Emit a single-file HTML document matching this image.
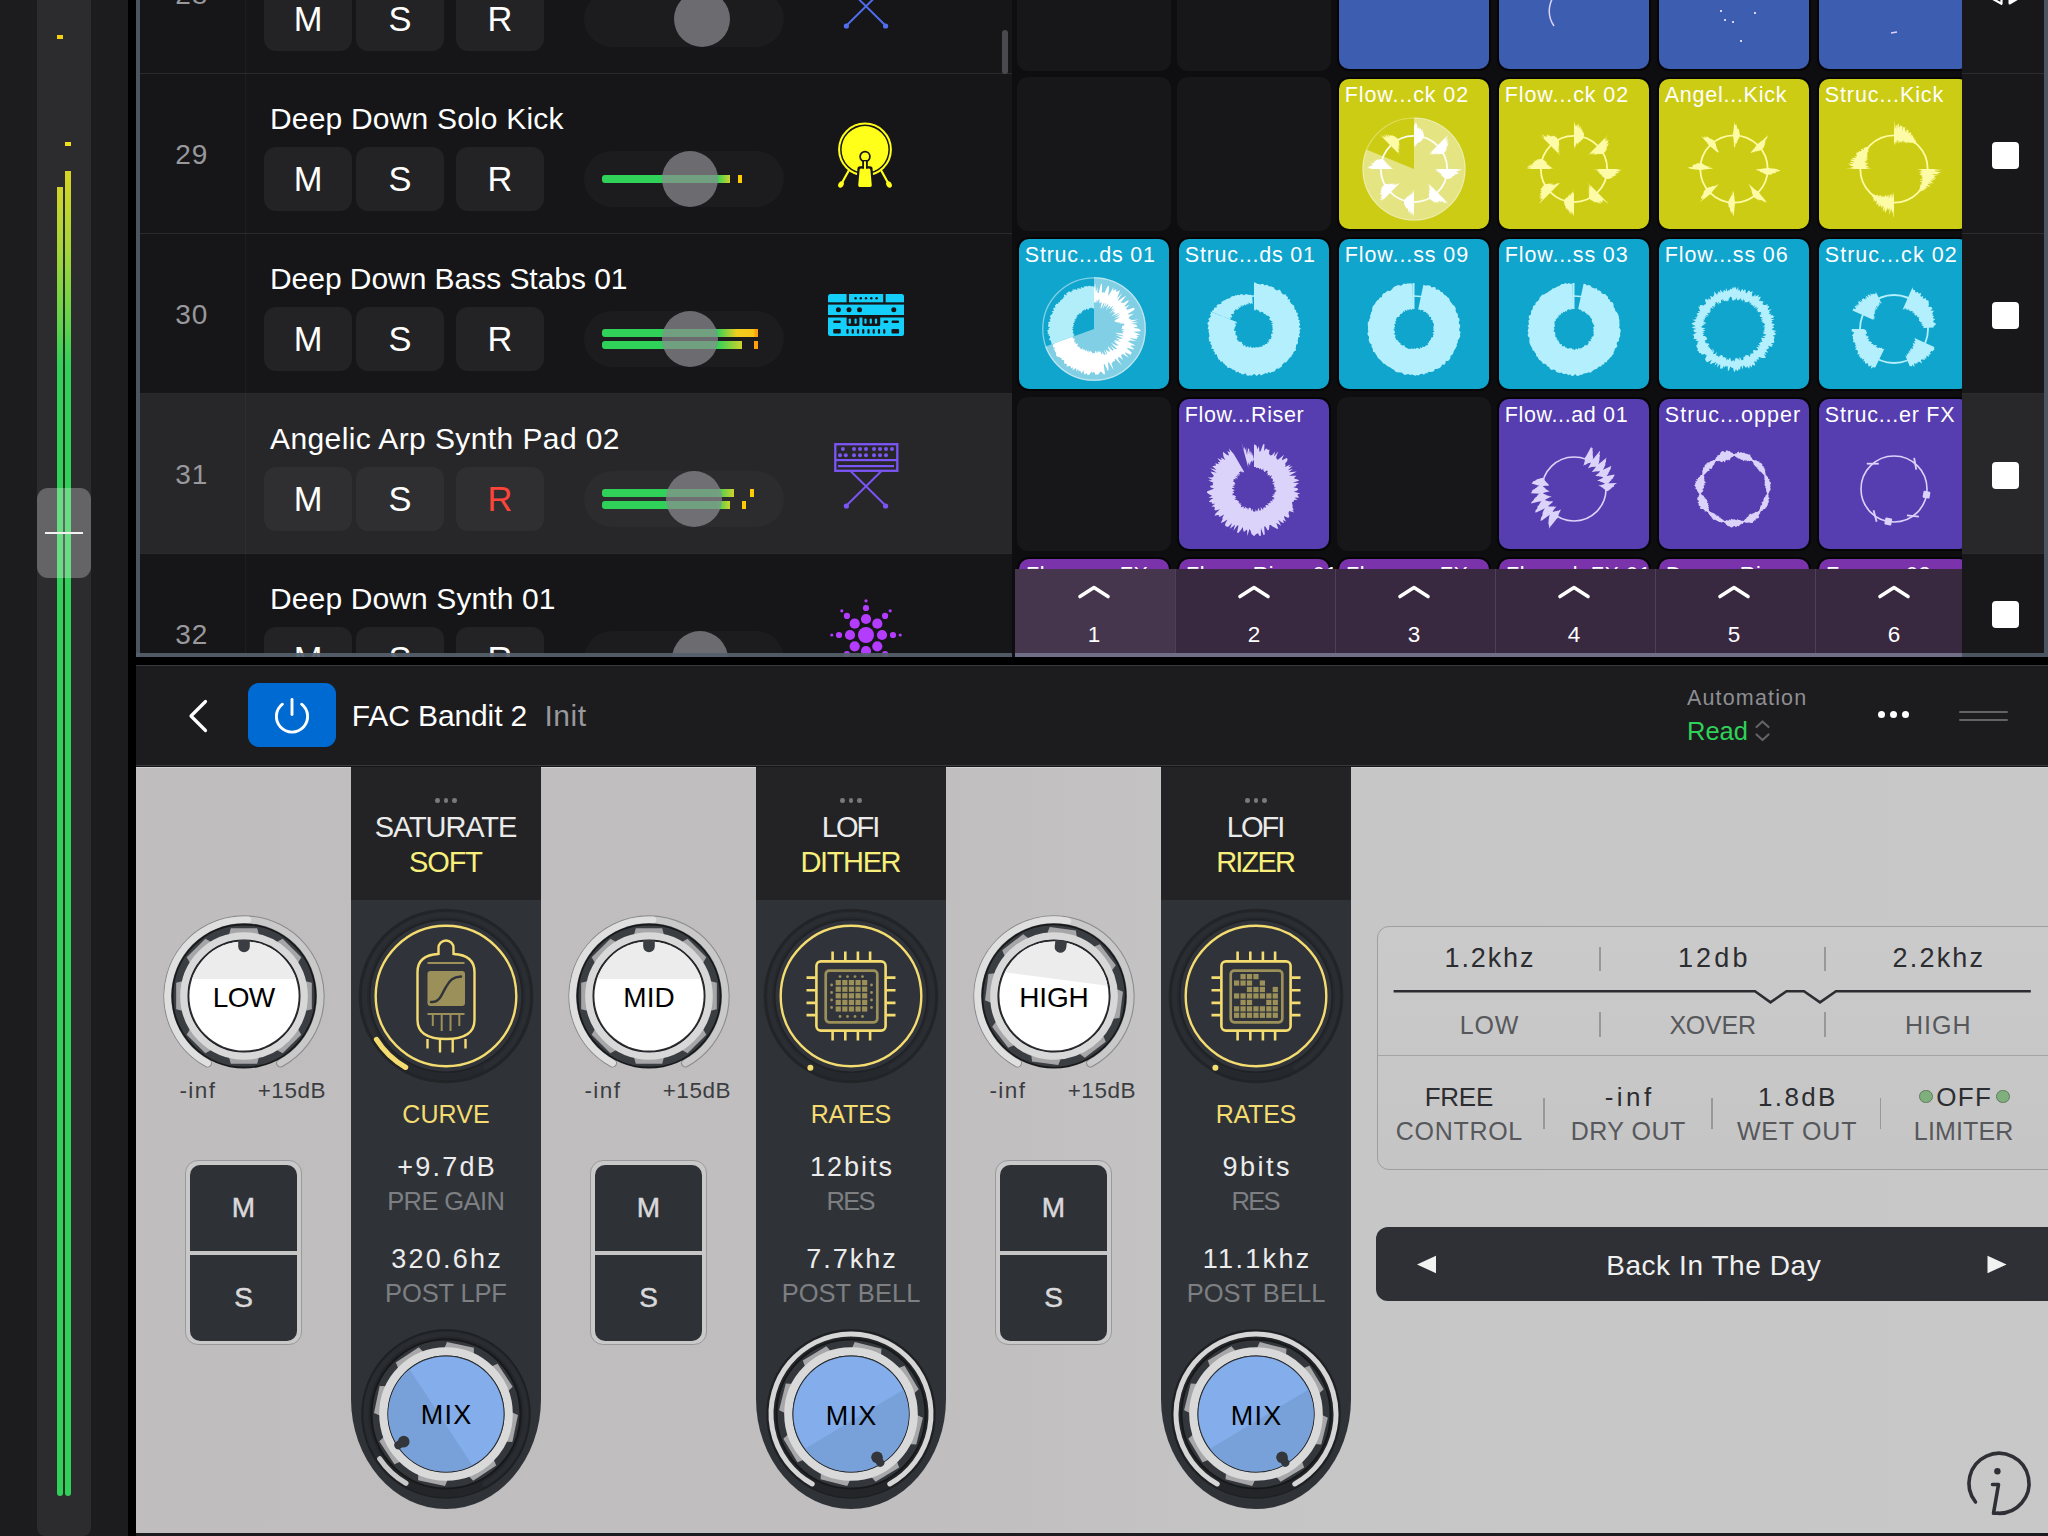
<!DOCTYPE html>
<html><head><meta charset="utf-8"><title>Logic</title><style>
*{box-sizing:border-box;margin:0;padding:0}
html,body{width:2048px;height:1536px;overflow:hidden;background:#1c1c1e;font-family:"Liberation Sans",sans-serif;position:relative}
.a{position:absolute}
.t{position:absolute;white-space:pre}
.clip{position:absolute;left:0;top:0;width:2048px;height:1536px}
svg{position:absolute;overflow:visible}
.tx{left:0;top:0;font-family:"Liberation Sans",sans-serif}
</style></head><body>
<div class="a" style="left:0px;top:0px;width:136px;height:1536px;background:#1c1c1e;"></div>
<div class="a" style="left:37px;top:-20px;width:54px;height:1556px;background:#2c2c2f;border-radius:8px;"></div>
<div class="a" style="left:128px;top:0px;width:8px;height:1536px;background:#000;"></div>
<div class="a" style="left:57px;top:35px;width:6px;height:4px;background:#f5d10f;"></div>
<div class="a" style="left:65px;top:142px;width:6px;height:4px;background:#ede11c;"></div>
<div class="a" style="left:57px;top:187px;width:6px;height:1309px;background:linear-gradient(#d0d42a 0px,#a4d537 63px,#62d449 133px,#30d158 178px);border-radius:0 0 3px 3px;"></div>
<div class="a" style="left:65px;top:171px;width:6px;height:1325px;background:linear-gradient(#d8d424 0px,#a4d537 79px,#62d449 149px,#30d158 194px);border-radius:0 0 3px 3px;"></div>
<div class="a" style="left:37px;top:488px;width:54px;height:90px;background:rgba(255,255,255,0.265);border-radius:11px;"></div>
<div class="a" style="left:45px;top:532px;width:38px;height:2px;background:#f2f2f2;"></div>
<div class="clip" style="clip-path:inset(0 1036px 879px 136px)">
<div class="a" style="left:136px;top:0px;width:880px;height:660px;background:#161618;"></div>
<div class="a" style="left:140px;top:-87px;width:872px;height:1px;background:#2a2a2d;"></div>
<svg class="tx" width="1" height="1"><text x="191.30" y="3.80" font-size="28" fill="#98989d" text-anchor="middle" textLength="32.00" lengthAdjust="spacing">28</text></svg>
<svg class="tx" width="1" height="1"><text x="270.00" y="-31.00" font-size="30" fill="#ffffff" text-anchor="start" textLength="202.50" lengthAdjust="spacing">Deep Down Kick</text></svg>
<div class="a" style="left:264px;top:-13px;width:88px;height:64px;background:#232326;border-radius:12px;"></div>
<svg class="tx" width="1" height="1"><text x="308.00" y="31.00" font-size="34.5" fill="#ffffff" text-anchor="middle">M</text></svg>
<div class="a" style="left:356px;top:-13px;width:88px;height:64px;background:#232326;border-radius:12px;"></div>
<svg class="tx" width="1" height="1"><text x="400.00" y="31.00" font-size="34.5" fill="#ffffff" text-anchor="middle">S</text></svg>
<div class="a" style="left:456px;top:-13px;width:88px;height:64px;background:#232326;border-radius:12px;"></div>
<svg class="tx" width="1" height="1"><text x="500.00" y="31.00" font-size="34.5" fill="#ffffff" text-anchor="middle">R</text></svg>
<div class="a" style="left:584px;top:-9px;width:200px;height:56px;background:#1c1c1f;border-radius:28px;"></div>
<div class="a" style="left:674px;top:-9px;width:56px;height:56px;border-radius:50%;background:rgba(140,139,145,0.71)"></div>
<svg style="left:834px;top:-37px" width="64" height="66" viewBox="-32 0 64 66"><rect x="-30.7" y="1.2" width="62" height="26.6" fill="none" stroke="#4f6ff0" stroke-width="2.3"/><rect x="-30.7" y="16" width="62" height="2.2" fill="#4f6ff0"/><rect x="-28" y="22" width="56" height="2.2" fill="#4f6ff0"/><circle cx="-23.1" cy="6" r="2" fill="#4f6ff0"/><circle cx="-12" cy="6" r="2" fill="#4f6ff0"/><circle cx="-6" cy="6" r="2" fill="#4f6ff0"/><circle cx="0" cy="6" r="2" fill="#4f6ff0"/><circle cx="8" cy="6" r="2" fill="#4f6ff0"/><circle cx="14" cy="6" r="2" fill="#4f6ff0"/><circle cx="20" cy="6" r="2" fill="#4f6ff0"/><circle cx="26" cy="6" r="2" fill="#4f6ff0"/><circle cx="-26" cy="12.2" r="2" fill="#4f6ff0"/><circle cx="-20.2" cy="12.2" r="2" fill="#4f6ff0"/><circle cx="-12" cy="12.2" r="2" fill="#4f6ff0"/><circle cx="-6" cy="12.2" r="2" fill="#4f6ff0"/><circle cx="0" cy="12.2" r="2" fill="#4f6ff0"/><circle cx="8" cy="12.2" r="2" fill="#4f6ff0"/><circle cx="14" cy="12.2" r="2" fill="#4f6ff0"/><circle cx="20" cy="12.2" r="2" fill="#4f6ff0"/><path d="M-15.5,28 L19.5,62.5 M15.5,28 L-19.5,62.5" stroke="#4f6ff0" stroke-width="1.9"/><circle cx="-19.6" cy="63" r="2.6" fill="#4f6ff0"/><circle cx="19.6" cy="63" r="2.6" fill="#4f6ff0"/></svg>
<div class="a" style="left:140px;top:73px;width:872px;height:1px;background:#2a2a2d;"></div>
<svg class="tx" width="1" height="1"><text x="191.30" y="163.80" font-size="28" fill="#98989d" text-anchor="middle" textLength="32.00" lengthAdjust="spacing">29</text></svg>
<svg class="tx" width="1" height="1"><text x="270.00" y="129.00" font-size="30" fill="#ffffff" text-anchor="start" textLength="293.50" lengthAdjust="spacing">Deep Down Solo Kick</text></svg>
<div class="a" style="left:264px;top:147px;width:88px;height:64px;background:#232326;border-radius:12px;"></div>
<svg class="tx" width="1" height="1"><text x="308.00" y="191.00" font-size="34.5" fill="#ffffff" text-anchor="middle">M</text></svg>
<div class="a" style="left:356px;top:147px;width:88px;height:64px;background:#232326;border-radius:12px;"></div>
<svg class="tx" width="1" height="1"><text x="400.00" y="191.00" font-size="34.5" fill="#ffffff" text-anchor="middle">S</text></svg>
<div class="a" style="left:456px;top:147px;width:88px;height:64px;background:#232326;border-radius:12px;"></div>
<svg class="tx" width="1" height="1"><text x="500.00" y="191.00" font-size="34.5" fill="#ffffff" text-anchor="middle">R</text></svg>
<div class="a" style="left:584px;top:151px;width:200px;height:56px;background:#1c1c1f;border-radius:28px;"></div>
<div class="a" style="left:602px;top:175px;width:128px;height:8px;background:linear-gradient(90deg,#30d158 0px,#30d158 115px,#cfd22a 128px);border-radius:3px 0 0 3px;"></div>
<div class="a" style="left:738px;top:175px;width:4px;height:8px;background:#ffcc00;"></div>
<div class="a" style="left:662px;top:151px;width:56px;height:56px;border-radius:50%;background:rgba(140,139,145,0.71)"></div>
<svg style="left:0;top:0" width="2048" height="1536" viewBox="0 0 2048 1536">
<g transform="translate(865,149.5)">
<path d="M-16.5,21.5 L-24.5,36" stroke="#ffff1a" stroke-width="2.2" stroke-linecap="round"/>
<path d="M16.5,21.5 L24.5,36" stroke="#ffff1a" stroke-width="2.2" stroke-linecap="round"/>
<ellipse cx="-24" cy="35" rx="2.6" ry="3.4" transform="rotate(30 -24 35)" fill="#ffff1a"/>
<ellipse cx="24" cy="35" rx="2.6" ry="3.4" transform="rotate(-30 24 35)" fill="#ffff1a"/>
<circle r="25.9" fill="none" stroke="#ffff1a" stroke-width="2"/>
<circle r="23.4" fill="#ffff1a"/>
<path d="M-7.6,19.5 Q-7.6,16.8 -5,16.8 L5,16.8 Q7.6,16.8 7.6,19.5 L9,37.5 Q9,39.5 7,39.5 L-7,39.5 Q-9,39.5 -9,37.5Z" fill="#161618"/>
<path d="M-5.4,20.5 Q-5.4,19 -4,19 L4,19 Q5.4,19 5.4,20.5 L6.8,35.8 Q6.8,37.4 5.2,37.4 L-5.2,37.4 Q-6.8,37.4 -6.8,35.8Z" fill="#ffff1a"/>
<rect x="-2.8" y="10.5" width="5.6" height="8.6" fill="#161618"/>
<circle cy="7.1" r="4.9" fill="none" stroke="#161618" stroke-width="1.8"/>
<rect x="-1" y="11.8" width="2" height="8" fill="#ffff1a"/>
</g></svg>
<div class="a" style="left:140px;top:233px;width:872px;height:1px;background:#2a2a2d;"></div>
<svg class="tx" width="1" height="1"><text x="191.30" y="323.80" font-size="28" fill="#98989d" text-anchor="middle" textLength="32.00" lengthAdjust="spacing">30</text></svg>
<svg class="tx" width="1" height="1"><text x="270.00" y="289.00" font-size="30" fill="#ffffff" text-anchor="start" textLength="357.50" lengthAdjust="spacing">Deep Down Bass Stabs 01</text></svg>
<div class="a" style="left:264px;top:307px;width:88px;height:64px;background:#232326;border-radius:12px;"></div>
<svg class="tx" width="1" height="1"><text x="308.00" y="351.00" font-size="34.5" fill="#ffffff" text-anchor="middle">M</text></svg>
<div class="a" style="left:356px;top:307px;width:88px;height:64px;background:#232326;border-radius:12px;"></div>
<svg class="tx" width="1" height="1"><text x="400.00" y="351.00" font-size="34.5" fill="#ffffff" text-anchor="middle">S</text></svg>
<div class="a" style="left:456px;top:307px;width:88px;height:64px;background:#232326;border-radius:12px;"></div>
<svg class="tx" width="1" height="1"><text x="500.00" y="351.00" font-size="34.5" fill="#ffffff" text-anchor="middle">R</text></svg>
<div class="a" style="left:584px;top:311px;width:200px;height:56px;background:#1c1c1f;border-radius:28px;"></div>
<div class="a" style="left:602px;top:329px;width:156px;height:8px;background:linear-gradient(90deg,#30d158 0px,#30d158 115px,#f0d01c 135px,#f7c51a 152px,#ff9f0a 153px,#ff9f0a 156px);border-radius:3px 0 0 3px;"></div>
<div class="a" style="left:602px;top:341px;width:140px;height:8px;background:linear-gradient(90deg,#30d158 0px,#30d158 115px,#cfd22a 140px);border-radius:3px 0 0 3px;"></div>
<div class="a" style="left:754px;top:341px;width:4px;height:8px;background:#ff9f0a;"></div>
<div class="a" style="left:662px;top:311px;width:56px;height:56px;border-radius:50%;background:rgba(140,139,145,0.71)"></div>
<svg style="left:828px;top:294px" width="76" height="42" viewBox="0 0 76 42"><rect x="0" y="0" width="76" height="42" rx="2.5" fill="#13cff9"/><rect x="-1" y="8.3" width="78" height="2.3" fill="#161618"/><rect x="-1" y="21" width="78" height="2.5" fill="#161618"/><rect x="18.6" y="-1" width="2.4" height="10" fill="#161618"/><rect x="55.2" y="-1" width="2.4" height="10" fill="#161618"/><circle cx="27.6" cy="4.2" r="1.2" fill="#161618"/><circle cx="32.8" cy="4.2" r="1.2" fill="#161618"/><circle cx="38" cy="4.2" r="1.2" fill="#161618"/><circle cx="43.3" cy="4.2" r="1.2" fill="#161618"/><circle cx="48.6" cy="4.2" r="1.2" fill="#161618"/><circle cx="10.4" cy="15.8" r="2.5" fill="#161618"/><circle cx="21" cy="15.8" r="2.5" fill="#161618"/><circle cx="31.5" cy="15.8" r="2.5" fill="#161618"/><circle cx="65.8" cy="15.8" r="2.5" fill="#161618"/><rect x="5.2" y="26.6" width="7.6" height="2.4" rx="1.2" fill="#161618"/><rect x="55.5" y="26.6" width="4.8" height="2.4" rx="1.2" fill="#161618"/><rect x="63.5" y="26.6" width="7.6" height="2.4" rx="1.2" fill="#161618"/><path d="M18.6,23 L18.6,30.5 Q18.6,32 20,32 L30,32 Q31.4,32 31.4,30.5 L31.4,23Z" fill="#161618"/><path d="M34.4,23 L34.4,30.5 Q34.4,32 36,32 L50.6,32 Q52.2,32 52.2,30.5 L52.2,23Z" fill="#161618"/><rect x="20.7" y="24.5" width="2.2" height="5.3" rx="1.1" fill="#13cff9"/><rect x="26.5" y="24.5" width="2.2" height="5.3" rx="1.1" fill="#13cff9"/><rect x="36.4" y="24.5" width="2.2" height="5.3" rx="1.1" fill="#13cff9"/><rect x="41.699999999999996" y="24.5" width="2.2" height="5.3" rx="1.1" fill="#13cff9"/><rect x="46.9" y="24.5" width="2.2" height="5.3" rx="1.1" fill="#13cff9"/><rect x="5.2" y="35" width="7.6" height="4.6" rx="1" fill="#161618"/><rect x="63.5" y="35" width="7.6" height="4.6" rx="1" fill="#161618"/><rect x="18.4" y="35" width="2.2" height="4.8" rx="1.1" fill="#161618"/><rect x="23.65" y="35" width="2.2" height="4.8" rx="1.1" fill="#161618"/><rect x="28.9" y="35" width="2.2" height="4.8" rx="1.1" fill="#161618"/><rect x="34.15" y="35" width="2.2" height="4.8" rx="1.1" fill="#161618"/><rect x="39.4" y="35" width="2.2" height="4.8" rx="1.1" fill="#161618"/><rect x="44.65" y="35" width="2.2" height="4.8" rx="1.1" fill="#161618"/><rect x="49.9" y="35" width="2.2" height="4.8" rx="1.1" fill="#161618"/><rect x="55.15" y="35" width="2.2" height="4.8" rx="1.1" fill="#161618"/></svg>
<div class="a" style="left:140px;top:394px;width:872px;height:159px;background:#27272a;"></div>
<div class="a" style="left:140px;top:393px;width:872px;height:1px;background:#2a2a2d;"></div>
<svg class="tx" width="1" height="1"><text x="191.30" y="483.80" font-size="28" fill="#98989d" text-anchor="middle" textLength="32.00" lengthAdjust="spacing">31</text></svg>
<svg class="tx" width="1" height="1"><text x="270.00" y="449.00" font-size="30" fill="#ffffff" text-anchor="start" textLength="349.50" lengthAdjust="spacing">Angelic Arp Synth Pad 02</text></svg>
<div class="a" style="left:264px;top:467px;width:88px;height:64px;background:#2f2f32;border-radius:12px;"></div>
<svg class="tx" width="1" height="1"><text x="308.00" y="511.00" font-size="34.5" fill="#ffffff" text-anchor="middle">M</text></svg>
<div class="a" style="left:356px;top:467px;width:88px;height:64px;background:#2f2f32;border-radius:12px;"></div>
<svg class="tx" width="1" height="1"><text x="400.00" y="511.00" font-size="34.5" fill="#ffffff" text-anchor="middle">S</text></svg>
<div class="a" style="left:456px;top:467px;width:88px;height:64px;background:#2f2f32;border-radius:12px;"></div>
<svg class="tx" width="1" height="1"><text x="500.00" y="511.00" font-size="34.5" fill="#ff453a" text-anchor="middle">R</text></svg>
<div class="a" style="left:584px;top:471px;width:200px;height:56px;background:#2c2c2f;border-radius:28px;"></div>
<div class="a" style="left:602px;top:489px;width:132px;height:8px;background:linear-gradient(90deg,#30d158 0px,#30d158 115px,#cfd22a 132px);border-radius:3px 0 0 3px;"></div>
<div class="a" style="left:602px;top:501px;width:128px;height:8px;background:linear-gradient(90deg,#30d158 0px,#30d158 115px,#cfd22a 128px);border-radius:3px 0 0 3px;"></div>
<div class="a" style="left:750px;top:489px;width:4px;height:8px;background:#ffcc00;"></div>
<div class="a" style="left:742px;top:501px;width:4px;height:8px;background:#ffcc00;"></div>
<div class="a" style="left:666px;top:471px;width:56px;height:56px;border-radius:50%;background:rgba(140,139,145,0.71)"></div>
<svg style="left:834px;top:443px" width="64" height="66" viewBox="-32 0 64 66"><rect x="-30.7" y="1.2" width="62" height="26.6" fill="none" stroke="#7b55f5" stroke-width="2.3"/><rect x="-30.7" y="16" width="62" height="2.2" fill="#7b55f5"/><rect x="-28" y="22" width="56" height="2.2" fill="#7b55f5"/><circle cx="-23.1" cy="6" r="2" fill="#7b55f5"/><circle cx="-12" cy="6" r="2" fill="#7b55f5"/><circle cx="-6" cy="6" r="2" fill="#7b55f5"/><circle cx="0" cy="6" r="2" fill="#7b55f5"/><circle cx="8" cy="6" r="2" fill="#7b55f5"/><circle cx="14" cy="6" r="2" fill="#7b55f5"/><circle cx="20" cy="6" r="2" fill="#7b55f5"/><circle cx="26" cy="6" r="2" fill="#7b55f5"/><circle cx="-26" cy="12.2" r="2" fill="#7b55f5"/><circle cx="-20.2" cy="12.2" r="2" fill="#7b55f5"/><circle cx="-12" cy="12.2" r="2" fill="#7b55f5"/><circle cx="-6" cy="12.2" r="2" fill="#7b55f5"/><circle cx="0" cy="12.2" r="2" fill="#7b55f5"/><circle cx="8" cy="12.2" r="2" fill="#7b55f5"/><circle cx="14" cy="12.2" r="2" fill="#7b55f5"/><circle cx="20" cy="12.2" r="2" fill="#7b55f5"/><path d="M-15.5,28 L19.5,62.5 M15.5,28 L-19.5,62.5" stroke="#7b55f5" stroke-width="1.9"/><circle cx="-19.6" cy="63" r="2.6" fill="#7b55f5"/><circle cx="19.6" cy="63" r="2.6" fill="#7b55f5"/></svg>
<div class="a" style="left:140px;top:553px;width:872px;height:1px;background:#2a2a2d;"></div>
<svg class="tx" width="1" height="1"><text x="191.30" y="643.80" font-size="28" fill="#98989d" text-anchor="middle" textLength="32.00" lengthAdjust="spacing">32</text></svg>
<svg class="tx" width="1" height="1"><text x="270.00" y="609.00" font-size="30" fill="#ffffff" text-anchor="start" textLength="285.50" lengthAdjust="spacing">Deep Down Synth 01</text></svg>
<div class="a" style="left:264px;top:627px;width:88px;height:64px;background:#232326;border-radius:12px;"></div>
<svg class="tx" width="1" height="1"><text x="308.00" y="671.00" font-size="34.5" fill="#ffffff" text-anchor="middle">M</text></svg>
<div class="a" style="left:356px;top:627px;width:88px;height:64px;background:#232326;border-radius:12px;"></div>
<svg class="tx" width="1" height="1"><text x="400.00" y="671.00" font-size="34.5" fill="#ffffff" text-anchor="middle">S</text></svg>
<div class="a" style="left:456px;top:627px;width:88px;height:64px;background:#232326;border-radius:12px;"></div>
<svg class="tx" width="1" height="1"><text x="500.00" y="671.00" font-size="34.5" fill="#ffffff" text-anchor="middle">R</text></svg>
<div class="a" style="left:584px;top:631px;width:200px;height:56px;background:#1c1c1f;border-radius:28px;"></div>
<div class="a" style="left:672px;top:631px;width:56px;height:56px;border-radius:50%;background:rgba(140,139,145,0.71)"></div>
<svg style="left:826px;top:595px" width="80" height="80" viewBox="-40 -40 80 80"><circle r="8" fill="#b43cff"/><circle cx="16.00" cy="0.00" r="5.1" fill="#b43cff"/><circle cx="27.00" cy="0.00" r="3.1" fill="#b43cff"/><circle cx="34.20" cy="0.00" r="1.6" fill="#b43cff"/><circle cx="11.31" cy="11.31" r="5.1" fill="#b43cff"/><circle cx="19.09" cy="19.09" r="3.1" fill="#b43cff"/><circle cx="24.18" cy="24.18" r="1.6" fill="#b43cff"/><circle cx="0.00" cy="16.00" r="5.1" fill="#b43cff"/><circle cx="0.00" cy="27.00" r="3.1" fill="#b43cff"/><circle cx="0.00" cy="34.20" r="1.6" fill="#b43cff"/><circle cx="-11.31" cy="11.31" r="5.1" fill="#b43cff"/><circle cx="-19.09" cy="19.09" r="3.1" fill="#b43cff"/><circle cx="-24.18" cy="24.18" r="1.6" fill="#b43cff"/><circle cx="-16.00" cy="0.00" r="5.1" fill="#b43cff"/><circle cx="-27.00" cy="0.00" r="3.1" fill="#b43cff"/><circle cx="-34.20" cy="0.00" r="1.6" fill="#b43cff"/><circle cx="-11.31" cy="-11.31" r="5.1" fill="#b43cff"/><circle cx="-19.09" cy="-19.09" r="3.1" fill="#b43cff"/><circle cx="-24.18" cy="-24.18" r="1.6" fill="#b43cff"/><circle cx="-0.00" cy="-16.00" r="5.1" fill="#b43cff"/><circle cx="-0.00" cy="-27.00" r="3.1" fill="#b43cff"/><circle cx="-0.00" cy="-34.20" r="1.6" fill="#b43cff"/><circle cx="11.31" cy="-11.31" r="5.1" fill="#b43cff"/><circle cx="19.09" cy="-19.09" r="3.1" fill="#b43cff"/><circle cx="24.18" cy="-24.18" r="1.6" fill="#b43cff"/></svg>
<div class="a" style="left:245px;top:0px;width:1px;height:660px;background:rgba(255,255,255,0.035);"></div>
<div class="a" style="left:1002px;top:30px;width:6px;height:44px;background:#4a4a4e;border-radius:3px;"></div>
<div class="a" style="left:136px;top:0px;width:4px;height:657px;background:#4b5560;"></div>
<div class="a" style="left:136px;top:653px;width:879px;height:4px;background:rgba(84,96,108,0.93);"></div>
</div>
<div class="clip" style="clip-path:inset(0 86px 879px 1012px)">
<div class="a" style="left:1012px;top:0px;width:950px;height:660px;background:#0e0e10;"></div>
<div class="a" style="left:1017px;top:-83px;width:154px;height:154px;background:#171719;border-radius:11px;"></div>
<div class="a" style="left:1177px;top:-83px;width:154px;height:154px;background:#171719;border-radius:11px;"></div>
<div class="a" style="left:1337px;top:-83px;width:154px;height:154px;background:#050506;border-radius:12px;"></div>
<div class="a" style="left:1339px;top:-81px;width:150px;height:150px;background:#3d5db1;border-radius:10px;"></div>
<div class="a" style="left:1497px;top:-83px;width:154px;height:154px;background:#050506;border-radius:12px;"></div>
<div class="a" style="left:1499px;top:-81px;width:150px;height:150px;background:#3d5db1;border-radius:10px;"></div>
<div class="a" style="left:1657px;top:-83px;width:154px;height:154px;background:#050506;border-radius:12px;"></div>
<div class="a" style="left:1659px;top:-81px;width:150px;height:150px;background:#3d5db1;border-radius:10px;"></div>
<div class="a" style="left:1817px;top:-83px;width:154px;height:154px;background:#050506;border-radius:12px;"></div>
<div class="a" style="left:1819px;top:-81px;width:150px;height:150px;background:#3d5db1;border-radius:10px;"></div>
<div class="a" style="left:1017px;top:77px;width:154px;height:154px;background:#171719;border-radius:11px;"></div>
<div class="a" style="left:1177px;top:77px;width:154px;height:154px;background:#171719;border-radius:11px;"></div>
<div class="a" style="left:1337px;top:77px;width:154px;height:154px;background:#050506;border-radius:12px;"></div>
<div class="a" style="left:1339px;top:79px;width:150px;height:150px;background:#cdcc14;border-radius:10px;"></div>
<svg class="tx" width="1" height="1"><text x="1344.80" y="102.00" font-size="21.5" fill="#ffffff" text-anchor="start" textLength="123.30" lengthAdjust="spacing">Flow...ck 02</text></svg>
<div class="a" style="left:1497px;top:77px;width:154px;height:154px;background:#050506;border-radius:12px;"></div>
<div class="a" style="left:1499px;top:79px;width:150px;height:150px;background:#cdcc14;border-radius:10px;"></div>
<svg class="tx" width="1" height="1"><text x="1504.80" y="102.00" font-size="21.5" fill="#ffffff" text-anchor="start" textLength="123.30" lengthAdjust="spacing">Flow...ck 02</text></svg>
<div class="a" style="left:1657px;top:77px;width:154px;height:154px;background:#050506;border-radius:12px;"></div>
<div class="a" style="left:1659px;top:79px;width:150px;height:150px;background:#cdcc14;border-radius:10px;"></div>
<svg class="tx" width="1" height="1"><text x="1664.80" y="102.00" font-size="21.5" fill="#ffffff" text-anchor="start" textLength="121.60" lengthAdjust="spacing">Angel...Kick</text></svg>
<div class="a" style="left:1817px;top:77px;width:154px;height:154px;background:#050506;border-radius:12px;"></div>
<div class="a" style="left:1819px;top:79px;width:150px;height:150px;background:#cdcc14;border-radius:10px;"></div>
<svg class="tx" width="1" height="1"><text x="1824.80" y="102.00" font-size="21.5" fill="#ffffff" text-anchor="start" textLength="118.40" lengthAdjust="spacing">Struc...Kick</text></svg>
<div class="a" style="left:1017px;top:237px;width:154px;height:154px;background:#050506;border-radius:12px;"></div>
<div class="a" style="left:1019px;top:239px;width:150px;height:150px;background:#10a5cd;border-radius:10px;"></div>
<svg class="tx" width="1" height="1"><text x="1024.80" y="262.00" font-size="21.5" fill="#ffffff" text-anchor="start" textLength="130.10" lengthAdjust="spacing">Struc...ds 01</text></svg>
<div class="a" style="left:1177px;top:237px;width:154px;height:154px;background:#050506;border-radius:12px;"></div>
<div class="a" style="left:1179px;top:239px;width:150px;height:150px;background:#10a5cd;border-radius:10px;"></div>
<svg class="tx" width="1" height="1"><text x="1184.80" y="262.00" font-size="21.5" fill="#ffffff" text-anchor="start" textLength="130.10" lengthAdjust="spacing">Struc...ds 01</text></svg>
<div class="a" style="left:1337px;top:237px;width:154px;height:154px;background:#050506;border-radius:12px;"></div>
<div class="a" style="left:1339px;top:239px;width:150px;height:150px;background:#10a5cd;border-radius:10px;"></div>
<svg class="tx" width="1" height="1"><text x="1344.80" y="262.00" font-size="21.5" fill="#ffffff" text-anchor="start" textLength="123.30" lengthAdjust="spacing">Flow...ss 09</text></svg>
<div class="a" style="left:1497px;top:237px;width:154px;height:154px;background:#050506;border-radius:12px;"></div>
<div class="a" style="left:1499px;top:239px;width:150px;height:150px;background:#10a5cd;border-radius:10px;"></div>
<svg class="tx" width="1" height="1"><text x="1504.80" y="262.00" font-size="21.5" fill="#ffffff" text-anchor="start" textLength="122.80" lengthAdjust="spacing">Flow...ss 03</text></svg>
<div class="a" style="left:1657px;top:237px;width:154px;height:154px;background:#050506;border-radius:12px;"></div>
<div class="a" style="left:1659px;top:239px;width:150px;height:150px;background:#10a5cd;border-radius:10px;"></div>
<svg class="tx" width="1" height="1"><text x="1664.80" y="262.00" font-size="21.5" fill="#ffffff" text-anchor="start" textLength="122.80" lengthAdjust="spacing">Flow...ss 06</text></svg>
<div class="a" style="left:1817px;top:237px;width:154px;height:154px;background:#050506;border-radius:12px;"></div>
<div class="a" style="left:1819px;top:239px;width:150px;height:150px;background:#10a5cd;border-radius:10px;"></div>
<svg class="tx" width="1" height="1"><text x="1824.80" y="262.00" font-size="21.5" fill="#ffffff" text-anchor="start" textLength="131.80" lengthAdjust="spacing">Struc...ck 02</text></svg>
<div class="a" style="left:1017px;top:397px;width:154px;height:154px;background:#171719;border-radius:11px;"></div>
<div class="a" style="left:1177px;top:397px;width:154px;height:154px;background:#050506;border-radius:12px;"></div>
<div class="a" style="left:1179px;top:399px;width:150px;height:150px;background:#563db0;border-radius:10px;"></div>
<svg class="tx" width="1" height="1"><text x="1184.80" y="422.00" font-size="21.5" fill="#ffffff" text-anchor="start" textLength="118.80" lengthAdjust="spacing">Flow...Riser</text></svg>
<div class="a" style="left:1337px;top:397px;width:154px;height:154px;background:#171719;border-radius:11px;"></div>
<div class="a" style="left:1497px;top:397px;width:154px;height:154px;background:#050506;border-radius:12px;"></div>
<div class="a" style="left:1499px;top:399px;width:150px;height:150px;background:#563db0;border-radius:10px;"></div>
<svg class="tx" width="1" height="1"><text x="1504.80" y="422.00" font-size="21.5" fill="#ffffff" text-anchor="start" textLength="122.80" lengthAdjust="spacing">Flow...ad 01</text></svg>
<div class="a" style="left:1657px;top:397px;width:154px;height:154px;background:#050506;border-radius:12px;"></div>
<div class="a" style="left:1659px;top:399px;width:150px;height:150px;background:#563db0;border-radius:10px;"></div>
<svg class="tx" width="1" height="1"><text x="1664.80" y="422.00" font-size="21.5" fill="#ffffff" text-anchor="start" textLength="135.30" lengthAdjust="spacing">Struc...opper</text></svg>
<div class="a" style="left:1817px;top:397px;width:154px;height:154px;background:#050506;border-radius:12px;"></div>
<div class="a" style="left:1819px;top:399px;width:150px;height:150px;background:#563db0;border-radius:10px;"></div>
<svg class="tx" width="1" height="1"><text x="1824.80" y="422.00" font-size="21.5" fill="#ffffff" text-anchor="start" textLength="129.80" lengthAdjust="spacing">Struc...er FX</text></svg>
<div class="a" style="left:1017px;top:557px;width:154px;height:154px;background:#050506;border-radius:12px;"></div>
<div class="a" style="left:1019px;top:559px;width:150px;height:150px;background:#7a33ab;border-radius:10px;"></div>
<svg class="tx" width="1" height="1"><text x="1026.00" y="582.00" font-size="21.5" fill="#ffffff" text-anchor="start" style="letter-spacing:0.65px;">Flow...er FX</text></svg>
<div class="a" style="left:1177px;top:557px;width:154px;height:154px;background:#050506;border-radius:12px;"></div>
<div class="a" style="left:1179px;top:559px;width:150px;height:150px;background:#7a33ab;border-radius:10px;"></div>
<svg class="tx" width="1" height="1"><text x="1186.00" y="582.00" font-size="21.5" fill="#ffffff" text-anchor="start" style="letter-spacing:0.65px;">Flow...Riser 01</text></svg>
<div class="a" style="left:1337px;top:557px;width:154px;height:154px;background:#050506;border-radius:12px;"></div>
<div class="a" style="left:1339px;top:559px;width:150px;height:150px;background:#7a33ab;border-radius:10px;"></div>
<svg class="tx" width="1" height="1"><text x="1346.00" y="582.00" font-size="21.5" fill="#ffffff" text-anchor="start" style="letter-spacing:0.65px;">Flow...er FX</text></svg>
<div class="a" style="left:1497px;top:557px;width:154px;height:154px;background:#050506;border-radius:12px;"></div>
<div class="a" style="left:1499px;top:559px;width:150px;height:150px;background:#7a33ab;border-radius:10px;"></div>
<svg class="tx" width="1" height="1"><text x="1506.00" y="582.00" font-size="21.5" fill="#ffffff" text-anchor="start" style="letter-spacing:0.65px;">Flow...k FX 01</text></svg>
<div class="a" style="left:1657px;top:557px;width:154px;height:154px;background:#050506;border-radius:12px;"></div>
<div class="a" style="left:1659px;top:559px;width:150px;height:150px;background:#7a33ab;border-radius:10px;"></div>
<svg class="tx" width="1" height="1"><text x="1666.00" y="582.00" font-size="21.5" fill="#ffffff" text-anchor="start" style="letter-spacing:0.65px;">Deep...Riser</text></svg>
<div class="a" style="left:1817px;top:557px;width:154px;height:154px;background:#050506;border-radius:12px;"></div>
<div class="a" style="left:1819px;top:559px;width:150px;height:150px;background:#7a33ab;border-radius:10px;"></div>
<svg class="tx" width="1" height="1"><text x="1826.00" y="582.00" font-size="21.5" fill="#ffffff" text-anchor="start" style="letter-spacing:0.65px;">Fr...oar 02</text></svg>
<svg style="left:0;top:0" width="2048" height="1536" viewBox="0 0 2048 1536"><path d="M1554,26 A26,26 0 0 1 1560,-10" fill="none" stroke="#dcd3fb" stroke-width="1.5"/><rect x="1720" y="10" width="2" height="2" fill="#dcd3fb"/><rect x="1724" y="19" width="2" height="2" fill="#dcd3fb"/><rect x="1732" y="21" width="2" height="2" fill="#dcd3fb"/><rect x="1754" y="12" width="2" height="2" fill="#dcd3fb"/><rect x="1740" y="40" width="2" height="2" fill="#dcd3fb"/><path d="M1891,33 L1897,32" stroke="#dcd3fb" stroke-width="1.5"/><path d="M1414,169 L1414.00,117.40 A51.6,51.6 0 1 1 1366.26,149.42Z" fill="#ffffff" fill-opacity="0.47"/><circle cx="1414" cy="169" r="51" fill="none" stroke="#ffffff" stroke-width="1.2" stroke-opacity="0.35"/><circle cx="1414" cy="169" r="33.2" fill="none" stroke="#ffffff" stroke-width="1.8" stroke-opacity="0.95"/><path d="M1414.00,120.30 L1414.35,125.90 L1414.70,125.53 L1415.11,122.87 L1415.47,123.22 L1415.82,123.52 L1416.23,122.62 L1416.53,124.00 L1416.85,124.67 L1417.18,125.07 L1417.32,127.70 L1417.61,128.24 L1417.93,128.29 L1418.46,126.39 L1418.56,128.56 L1419.03,127.37 L1419.22,128.52 L1419.49,129.01 L1419.72,129.66 L1420.37,127.50 L1420.59,128.26 L1420.79,129.05 L1421.14,128.94 L1421.11,130.88 L1421.40,131.04 L1422.19,128.69 L1422.33,129.64 L1422.67,129.58 L1422.67,131.03 L1422.66,132.45 L1423.04,132.13 L1423.46,131.72 L1423.28,133.63 L1423.53,133.83 L1423.74,134.15 L1423.83,134.89 L1423.90,135.65 L1423.71,137.25 L1423.71,137.25 L1422.98,138.75 L1422.44,139.72 L1422.32,139.26 L1421.80,140.21 L1421.40,140.81 L1420.93,141.70 L1420.58,142.17 L1420.80,140.29 L1420.41,140.94 L1419.73,142.94 L1419.54,142.81 L1419.36,142.61 L1419.26,141.98 L1419.06,141.87 L1418.68,142.72 L1418.57,142.10 L1418.29,142.50 L1417.91,143.51 L1417.79,142.92 L1417.69,142.13 L1417.34,143.13 L1416.78,146.00 L1416.99,142.44 L1416.42,145.85 L1416.46,143.52 L1416.16,144.60 L1415.80,146.57 L1415.83,143.64 L1415.46,146.20 L1415.21,147.47 L1415.15,145.18 L1414.97,144.86 L1414.67,148.10 L1414.58,145.06 L1414.40,144.21 L1414.17,147.67 L1414.00,149.80Z" fill="#ffffff"/><path d="M1448.44,134.56 L1445.45,138.05 L1448.58,135.52 L1445.23,139.24 L1445.41,139.54 L1448.12,137.51 L1447.47,138.60 L1446.36,140.08 L1446.07,140.80 L1447.22,140.26 L1448.11,139.96 L1448.95,139.73 L1446.12,142.53 L1447.64,141.74 L1446.54,143.06 L1448.62,141.85 L1447.68,143.01 L1447.11,143.88 L1447.76,143.81 L1448.70,143.54 L1448.32,144.24 L1446.21,146.15 L1448.56,144.90 L1448.48,145.36 L1446.01,147.43 L1445.98,147.82 L1447.29,147.34 L1446.67,148.11 L1446.88,148.34 L1446.42,149.00 L1446.30,149.42 L1446.27,149.80 L1446.16,150.21 L1446.61,150.30 L1445.35,151.35 L1444.99,151.88 L1444.44,152.50 L1443.31,153.41 L1443.31,153.41 L1441.64,154.02 L1441.14,154.01 L1440.47,154.10 L1440.00,154.09 L1438.75,154.54 L1439.40,153.88 L1437.87,154.54 L1438.91,153.63 L1437.51,154.23 L1436.78,154.44 L1436.73,154.21 L1436.78,153.92 L1437.00,153.50 L1436.86,153.33 L1434.99,154.36 L1434.49,154.46 L1434.47,154.23 L1433.79,154.48 L1433.31,154.59 L1434.08,153.77 L1433.97,153.60 L1434.31,153.07 L1431.87,154.75 L1431.35,154.94 L1431.54,154.55 L1431.85,154.05 L1432.08,153.61 L1430.52,154.70 L1430.76,154.26 L1432.02,152.90 L1430.87,153.68 L1432.59,151.84 L1431.71,152.39 L1428.58,155.11 L1431.77,151.79 L1431.38,151.90 L1427.58,155.42Z" fill="#ffffff"/><path d="M1462.70,169.00 L1460.96,169.38 L1456.38,169.68 L1459.13,170.09 L1460.93,170.51 L1457.16,170.73 L1457.87,171.11 L1455.94,171.36 L1458.96,171.89 L1457.25,172.13 L1456.27,172.40 L1457.89,172.88 L1458.68,173.31 L1458.42,173.65 L1457.70,173.93 L1454.56,173.90 L1455.42,174.34 L1456.56,174.84 L1454.17,174.84 L1454.10,175.16 L1453.84,175.45 L1455.47,176.05 L1453.71,176.08 L1452.33,176.15 L1451.80,176.37 L1452.48,176.82 L1452.72,177.19 L1451.22,177.19 L1452.36,177.76 L1451.21,177.81 L1451.08,178.10 L1450.07,178.16 L1449.23,178.24 L1450.42,178.87 L1448.61,178.68 L1448.15,178.85 L1447.55,178.96 L1445.75,178.71 L1445.75,178.71 L1444.62,178.09 L1443.48,177.50 L1443.31,177.20 L1442.71,176.78 L1443.34,176.70 L1442.56,176.25 L1441.65,175.78 L1441.77,175.58 L1441.05,175.18 L1441.13,174.97 L1441.70,174.86 L1441.51,174.59 L1440.94,174.25 L1441.15,174.06 L1440.93,173.80 L1440.00,173.42 L1438.84,173.02 L1440.82,173.12 L1440.49,172.85 L1438.18,172.32 L1438.39,172.15 L1437.50,171.84 L1438.09,171.72 L1437.23,171.43 L1438.03,171.32 L1435.94,170.94 L1436.01,170.77 L1439.55,170.85 L1435.83,170.40 L1436.09,170.24 L1438.07,170.16 L1435.55,169.86 L1439.29,169.81 L1435.48,169.52 L1437.19,169.37 L1436.62,169.18 L1433.20,169.00Z" fill="#ffffff"/><path d="M1448.44,203.44 L1447.44,202.98 L1443.87,199.85 L1445.98,202.56 L1446.35,203.49 L1445.44,203.06 L1445.05,203.19 L1441.91,200.23 L1444.51,203.70 L1440.98,200.19 L1441.85,201.71 L1441.39,201.71 L1440.76,201.48 L1441.22,202.58 L1439.99,201.59 L1438.97,200.83 L1439.11,201.55 L1438.11,200.78 L1439.04,202.55 L1437.63,201.20 L1438.38,202.79 L1438.33,203.30 L1437.03,202.02 L1436.30,201.52 L1436.26,202.04 L1436.89,203.56 L1435.08,201.39 L1435.64,202.84 L1435.22,202.78 L1434.08,201.54 L1434.25,202.41 L1433.81,202.29 L1432.68,200.97 L1432.12,200.59 L1431.89,200.78 L1431.12,199.99 L1430.72,199.84 L1429.59,198.31 L1429.59,198.31 L1429.05,196.76 L1428.96,196.08 L1429.10,195.83 L1428.84,194.86 L1428.53,193.87 L1429.32,194.75 L1428.60,193.09 L1429.40,193.95 L1429.24,193.26 L1428.99,192.45 L1429.53,192.86 L1429.49,192.39 L1429.12,191.44 L1428.47,190.11 L1428.80,190.23 L1429.00,190.14 L1430.11,191.32 L1428.32,188.51 L1430.15,190.64 L1430.38,190.58 L1429.24,188.76 L1428.52,187.51 L1430.64,189.87 L1428.92,187.40 L1430.27,188.75 L1428.08,185.81 L1430.00,187.80 L1429.09,186.44 L1428.88,185.92 L1430.86,187.87 L1428.43,184.89 L1430.74,187.14 L1428.49,184.45 L1428.41,184.12 L1429.11,184.60 L1430.77,186.04 L1427.58,182.58Z" fill="#ffffff"/><path d="M1414.00,217.70 L1413.63,215.76 L1413.28,213.94 L1412.92,214.01 L1412.57,213.46 L1412.28,211.95 L1411.80,214.66 L1411.41,215.02 L1411.31,210.88 L1410.85,212.64 L1410.37,214.18 L1410.28,211.08 L1409.68,213.80 L1409.78,209.36 L1409.30,210.69 L1408.86,211.56 L1408.32,213.00 L1408.22,211.10 L1407.98,210.43 L1407.96,208.35 L1407.59,208.62 L1407.22,208.87 L1406.96,208.50 L1406.56,208.90 L1406.43,207.85 L1406.25,207.15 L1405.80,207.77 L1405.74,206.57 L1405.27,207.21 L1405.11,206.52 L1405.12,205.21 L1404.75,205.42 L1404.69,204.48 L1404.41,204.38 L1404.05,204.59 L1404.03,203.58 L1404.08,202.40 L1404.29,200.75 L1404.29,200.75 L1404.91,199.61 L1405.34,199.03 L1405.91,197.93 L1406.25,197.61 L1406.43,197.87 L1407.00,196.59 L1407.20,196.71 L1407.37,197.01 L1407.69,196.63 L1408.12,195.73 L1408.15,196.65 L1408.64,195.39 L1408.59,196.74 L1409.06,195.46 L1409.64,193.46 L1409.44,195.80 L1409.85,194.66 L1410.00,195.07 L1410.07,196.03 L1410.63,193.54 L1410.56,195.70 L1411.20,192.16 L1411.27,193.19 L1411.29,194.87 L1411.58,194.07 L1411.84,193.44 L1411.99,193.98 L1412.45,190.45 L1412.48,192.59 L1412.59,194.12 L1412.81,193.73 L1413.09,191.59 L1413.27,191.77 L1413.40,193.94 L1413.68,189.17 L1413.82,190.94 L1414.00,188.20Z" fill="#ffffff"/><path d="M1379.56,203.44 L1383.52,198.99 L1382.90,199.12 L1381.32,200.14 L1381.47,199.51 L1380.84,199.60 L1379.18,200.62 L1382.70,196.97 L1381.46,197.61 L1380.55,197.94 L1381.42,196.73 L1380.18,197.32 L1382.57,194.90 L1381.67,195.21 L1382.10,194.43 L1381.95,194.14 L1380.20,195.07 L1380.34,194.54 L1380.49,194.01 L1379.38,194.40 L1381.58,192.39 L1381.78,191.85 L1379.86,192.81 L1380.51,191.96 L1380.65,191.47 L1381.12,190.77 L1380.85,190.58 L1382.07,189.42 L1381.95,189.13 L1380.27,189.81 L1381.35,188.79 L1382.46,187.77 L1381.08,188.23 L1381.45,187.67 L1381.88,187.08 L1382.87,186.20 L1383.46,185.55 L1384.69,184.59 L1384.69,184.59 L1386.30,184.01 L1386.85,184.00 L1387.06,184.17 L1388.59,183.58 L1387.83,184.29 L1388.25,184.32 L1390.07,183.50 L1388.84,184.52 L1390.63,183.68 L1390.79,183.84 L1392.09,183.26 L1391.31,184.03 L1391.82,183.95 L1392.84,183.51 L1393.36,183.39 L1394.11,183.11 L1391.66,185.12 L1394.40,183.38 L1394.14,183.82 L1392.79,185.10 L1395.09,183.59 L1395.51,183.50 L1393.17,185.61 L1395.21,184.23 L1393.84,185.61 L1395.59,184.42 L1396.69,183.74 L1395.83,184.72 L1396.32,184.55 L1397.99,183.31 L1395.76,185.57 L1397.90,183.86 L1399.08,182.99 L1398.58,183.69 L1398.94,183.59 L1398.64,184.12 L1400.42,182.58Z" fill="#ffffff"/><path d="M1365.30,169.00 L1370.58,168.65 L1371.44,168.32 L1368.37,167.90 L1367.26,167.50 L1368.94,167.19 L1370.56,166.91 L1369.18,166.48 L1368.53,166.08 L1372.41,165.99 L1372.09,165.63 L1372.08,165.29 L1371.35,164.88 L1373.06,164.72 L1369.66,164.00 L1371.61,163.88 L1370.89,163.44 L1374.28,163.55 L1370.61,162.69 L1374.78,162.98 L1374.02,162.53 L1373.49,162.11 L1375.21,162.09 L1374.87,161.70 L1373.39,161.09 L1373.84,160.84 L1376.12,160.98 L1375.93,160.63 L1375.71,160.25 L1376.99,160.23 L1376.11,159.70 L1377.16,159.65 L1377.85,159.52 L1378.57,159.40 L1379.72,159.42 L1380.23,159.26 L1380.25,158.98 L1382.25,159.29 L1382.25,159.29 L1383.59,159.97 L1383.98,160.35 L1385.24,160.96 L1384.39,160.98 L1384.68,161.31 L1385.44,161.75 L1385.53,162.02 L1385.44,162.24 L1387.39,162.92 L1385.64,162.76 L1387.27,163.34 L1385.99,163.31 L1386.76,163.69 L1387.11,163.98 L1389.34,164.60 L1388.27,164.63 L1387.57,164.72 L1387.19,164.88 L1388.34,165.27 L1390.93,165.84 L1387.37,165.56 L1390.58,166.17 L1391.29,166.44 L1388.61,166.34 L1390.36,166.72 L1391.32,166.99 L1391.17,167.17 L1391.19,167.35 L1389.59,167.43 L1391.92,167.76 L1391.41,167.91 L1392.56,168.14 L1392.94,168.32 L1390.87,168.44 L1391.70,168.64 L1393.42,168.83 L1394.80,169.00Z" fill="#ffffff"/><path d="M1379.56,134.56 L1382.07,136.55 L1383.04,137.03 L1384.57,138.12 L1381.98,134.86 L1383.54,136.00 L1385.87,138.02 L1384.40,135.87 L1383.94,134.81 L1386.79,137.55 L1385.56,135.59 L1386.49,136.15 L1385.15,133.99 L1386.35,134.88 L1388.56,137.10 L1388.95,137.06 L1386.96,133.95 L1389.02,136.08 L1387.73,133.80 L1389.79,136.01 L1389.89,135.59 L1390.38,135.70 L1391.05,136.09 L1390.54,134.77 L1391.70,135.90 L1391.37,134.83 L1392.60,136.12 L1392.16,134.85 L1393.49,136.36 L1393.83,136.30 L1394.20,136.32 L1394.71,136.58 L1394.72,136.00 L1395.84,137.35 L1396.52,137.95 L1396.67,137.64 L1397.37,138.32 L1398.41,139.69 L1398.41,139.69 L1398.85,141.05 L1399.13,142.08 L1399.18,142.68 L1398.98,142.82 L1399.12,143.53 L1399.48,144.60 L1399.13,144.46 L1399.60,145.67 L1398.97,145.07 L1398.69,145.05 L1399.55,146.80 L1399.18,146.62 L1398.31,145.71 L1399.37,147.66 L1398.05,146.12 L1399.61,148.71 L1399.55,148.97 L1398.96,148.51 L1398.04,147.61 L1398.81,148.98 L1399.37,150.03 L1397.92,148.50 L1398.46,149.51 L1398.24,149.56 L1398.12,149.73 L1399.33,151.49 L1399.06,151.45 L1399.61,152.37 L1398.21,151.05 L1399.02,152.24 L1397.73,151.08 L1398.88,152.62 L1399.49,153.52 L1397.54,151.73 L1397.71,152.18 L1397.81,152.55 L1400.42,155.42Z" fill="#fdfba6"/><circle cx="1574" cy="169" r="33.2" fill="none" stroke="#fdfba6" stroke-width="1.8" stroke-opacity="1"/><path d="M1574.00,120.30 L1574.35,124.88 L1574.76,121.37 L1575.05,125.56 L1575.37,126.42 L1575.79,124.43 L1576.12,124.99 L1576.39,126.55 L1576.82,125.12 L1577.27,123.73 L1577.34,127.48 L1577.88,125.13 L1578.36,123.84 L1578.69,124.13 L1578.71,127.20 L1578.95,128.01 L1579.65,125.20 L1579.50,128.91 L1580.32,125.52 L1580.57,126.20 L1580.33,129.85 L1580.97,128.02 L1581.34,127.84 L1581.23,130.22 L1581.96,128.13 L1581.93,129.97 L1581.95,131.43 L1582.67,129.56 L1582.43,132.08 L1583.07,130.71 L1582.87,132.83 L1583.25,132.57 L1583.67,132.16 L1583.68,133.28 L1583.95,133.43 L1583.98,134.37 L1583.86,135.81 L1583.71,137.25 L1583.71,137.25 L1582.92,138.97 L1582.45,139.67 L1582.20,139.69 L1581.93,139.74 L1581.60,140.03 L1581.39,139.90 L1580.66,141.85 L1580.68,140.79 L1580.26,141.61 L1579.77,142.76 L1579.77,141.72 L1579.57,141.58 L1579.37,141.46 L1578.75,143.53 L1578.44,144.10 L1578.56,142.20 L1578.38,141.94 L1577.61,145.47 L1577.81,142.79 L1577.52,143.35 L1577.04,145.47 L1576.95,144.58 L1576.94,142.97 L1576.68,143.35 L1576.47,143.38 L1576.22,143.95 L1576.08,143.14 L1575.57,147.23 L1575.35,148.06 L1575.35,144.89 L1575.11,145.90 L1574.94,145.60 L1574.75,145.76 L1574.52,147.55 L1574.35,147.41 L1574.16,148.58 L1574.00,149.80Z" fill="#fdfba6"/><path d="M1608.44,134.56 L1604.51,138.97 L1605.26,138.73 L1604.55,139.88 L1607.00,138.06 L1607.11,138.44 L1604.86,140.97 L1605.71,140.66 L1606.74,140.21 L1608.13,139.47 L1606.30,141.51 L1607.91,140.60 L1609.22,139.98 L1607.31,142.00 L1607.73,142.10 L1608.42,142.00 L1607.90,142.85 L1605.94,144.76 L1608.58,143.19 L1608.60,143.61 L1608.53,144.08 L1608.01,144.88 L1607.78,145.44 L1607.32,146.16 L1605.98,147.45 L1606.88,147.23 L1607.06,147.49 L1605.81,148.66 L1608.08,147.59 L1605.84,149.35 L1606.50,149.31 L1607.20,149.24 L1606.82,149.83 L1605.26,151.07 L1605.57,151.23 L1605.31,151.70 L1604.34,152.55 L1603.31,153.41 L1603.31,153.41 L1601.89,153.88 L1601.39,153.87 L1600.66,153.99 L1599.72,154.24 L1599.10,154.34 L1599.42,153.87 L1599.18,153.74 L1598.69,153.76 L1597.25,154.39 L1598.23,153.51 L1595.81,154.80 L1596.38,154.18 L1595.62,154.43 L1595.24,154.44 L1595.28,154.16 L1595.23,153.94 L1593.99,154.58 L1593.51,154.68 L1593.03,154.80 L1594.40,153.52 L1593.91,153.64 L1595.06,152.48 L1591.89,154.73 L1592.91,153.67 L1594.12,152.42 L1591.07,154.70 L1592.75,153.04 L1591.59,153.78 L1591.23,153.85 L1590.24,154.49 L1590.13,154.35 L1592.56,151.87 L1588.93,155.00 L1590.50,153.27 L1590.20,153.31 L1588.54,154.69 L1587.58,155.42Z" fill="#fdfba6"/><path d="M1622.70,169.00 L1619.32,169.36 L1616.50,169.68 L1618.49,170.07 L1621.20,170.51 L1620.20,170.85 L1619.40,171.19 L1615.75,171.35 L1618.95,171.89 L1618.86,172.24 L1617.48,172.49 L1619.20,173.00 L1615.11,172.97 L1618.71,173.68 L1616.72,173.82 L1614.80,173.93 L1616.22,174.45 L1615.46,174.69 L1614.47,174.88 L1617.00,175.60 L1615.60,175.73 L1614.02,175.80 L1614.41,176.20 L1613.85,176.43 L1612.78,176.56 L1611.46,176.61 L1612.70,177.19 L1612.76,177.53 L1611.78,177.63 L1612.19,178.04 L1611.00,178.08 L1611.36,178.48 L1609.26,178.25 L1609.31,178.57 L1609.57,178.95 L1608.60,178.97 L1607.29,178.89 L1605.75,178.71 L1605.75,178.71 L1604.43,178.04 L1603.65,177.55 L1603.91,177.36 L1602.45,176.71 L1601.75,176.28 L1602.88,176.33 L1602.59,176.01 L1601.21,175.45 L1601.45,175.27 L1602.17,175.20 L1601.71,174.86 L1600.27,174.34 L1599.73,174.01 L1599.41,173.74 L1600.23,173.68 L1598.51,173.17 L1600.57,173.30 L1598.84,172.81 L1597.59,172.43 L1600.30,172.61 L1598.32,172.14 L1599.39,172.07 L1597.93,171.70 L1599.85,171.70 L1598.96,171.41 L1596.54,170.99 L1597.75,170.91 L1596.18,170.60 L1595.54,170.38 L1598.21,170.36 L1598.23,170.17 L1595.56,169.86 L1598.21,169.78 L1598.86,169.60 L1597.07,169.37 L1594.45,169.16 L1593.20,169.00Z" fill="#fdfba6"/><path d="M1608.44,203.44 L1607.62,203.17 L1605.89,201.93 L1604.60,201.11 L1602.93,199.85 L1602.93,200.34 L1603.22,201.17 L1602.35,200.73 L1601.99,200.83 L1602.93,202.44 L1601.42,201.22 L1602.76,203.34 L1601.69,202.61 L1599.72,200.73 L1600.56,202.31 L1600.75,203.10 L1600.81,203.75 L1599.77,202.96 L1597.95,201.09 L1599.47,203.72 L1599.32,204.09 L1597.59,202.25 L1597.92,203.30 L1596.44,201.74 L1596.04,201.70 L1596.03,202.27 L1595.32,201.76 L1595.66,202.87 L1595.14,202.65 L1593.83,201.14 L1593.95,201.93 L1592.97,200.88 L1592.55,200.75 L1592.06,200.49 L1591.74,200.52 L1591.32,200.34 L1590.63,199.69 L1589.59,198.31 L1589.59,198.31 L1588.91,196.50 L1588.90,195.97 L1588.75,195.20 L1588.74,194.69 L1588.95,194.58 L1589.25,194.63 L1589.10,193.92 L1589.36,193.89 L1588.49,192.06 L1588.49,191.67 L1589.45,192.74 L1589.13,191.85 L1588.81,190.99 L1588.14,189.63 L1589.59,191.35 L1589.19,190.41 L1588.64,189.29 L1589.97,190.77 L1588.07,187.86 L1589.81,189.84 L1588.85,188.25 L1589.07,188.21 L1588.47,187.14 L1589.76,188.44 L1588.27,186.32 L1588.94,186.84 L1589.27,186.93 L1590.57,188.15 L1587.92,184.83 L1589.82,186.70 L1591.09,187.82 L1589.23,185.50 L1588.75,184.72 L1589.61,185.38 L1591.11,186.66 L1589.87,185.13 L1587.58,182.58Z" fill="#fdfba6"/><path d="M1574.00,217.70 L1573.64,214.35 L1573.26,215.41 L1572.95,212.66 L1572.55,214.06 L1572.26,212.27 L1571.76,215.61 L1571.66,210.58 L1571.13,213.61 L1570.70,214.62 L1570.62,211.04 L1570.12,212.82 L1569.86,211.89 L1569.32,213.77 L1569.21,211.51 L1569.14,209.21 L1568.61,210.75 L1568.22,211.11 L1568.10,209.57 L1567.67,210.24 L1567.48,209.32 L1567.36,208.08 L1566.72,209.86 L1566.38,209.83 L1566.39,208.03 L1566.05,208.14 L1565.94,207.11 L1565.28,208.65 L1565.53,206.07 L1565.29,205.78 L1564.99,205.73 L1564.84,205.07 L1564.64,204.67 L1564.38,204.51 L1564.41,203.31 L1564.21,202.95 L1563.98,202.73 L1564.29,200.75 L1564.29,200.75 L1565.05,199.12 L1565.51,198.46 L1565.70,198.68 L1566.29,197.45 L1566.46,197.73 L1566.97,196.69 L1566.97,197.65 L1567.21,197.67 L1567.47,197.58 L1567.96,196.45 L1568.12,196.80 L1568.69,195.14 L1568.88,195.28 L1569.01,195.72 L1569.38,194.92 L1569.67,194.47 L1570.15,192.81 L1569.84,196.11 L1570.41,193.72 L1570.31,195.87 L1570.61,195.26 L1570.96,194.12 L1571.35,192.49 L1571.42,193.66 L1571.70,192.84 L1571.70,195.06 L1572.11,192.57 L1572.36,191.71 L1572.46,192.98 L1572.68,192.47 L1572.90,191.76 L1573.06,192.32 L1573.22,193.43 L1573.42,192.90 L1573.60,193.67 L1573.82,191.70 L1574.00,188.20Z" fill="#fdfba6"/><path d="M1539.56,203.44 L1539.68,202.77 L1541.11,200.85 L1543.12,198.43 L1541.44,199.53 L1542.67,197.91 L1540.42,199.50 L1539.96,199.42 L1540.66,198.31 L1541.24,197.34 L1540.05,197.90 L1542.30,195.54 L1539.28,197.60 L1538.80,197.53 L1540.85,195.43 L1541.78,194.27 L1539.96,195.26 L1539.48,195.19 L1540.60,193.93 L1539.89,194.03 L1541.40,192.52 L1541.13,192.32 L1541.09,191.95 L1540.58,191.91 L1540.32,191.69 L1541.46,190.55 L1541.69,190.02 L1541.34,189.88 L1540.67,189.94 L1540.23,189.84 L1541.52,188.68 L1540.94,188.67 L1542.00,187.70 L1541.80,187.47 L1542.40,186.79 L1543.21,186.01 L1543.68,185.43 L1544.69,184.59 L1544.69,184.59 L1545.85,184.26 L1546.77,184.04 L1547.25,184.06 L1548.45,183.66 L1549.33,183.41 L1549.74,183.44 L1549.75,183.69 L1549.94,183.85 L1550.48,183.77 L1551.38,183.46 L1549.99,184.62 L1552.15,183.47 L1552.92,183.21 L1551.57,184.37 L1551.27,184.85 L1552.28,184.41 L1552.96,184.18 L1553.62,183.96 L1552.65,184.93 L1553.57,184.50 L1553.23,185.02 L1553.61,184.99 L1555.57,183.69 L1553.66,185.49 L1554.33,185.20 L1557.06,183.19 L1556.08,184.26 L1557.72,183.08 L1557.94,183.12 L1558.54,182.82 L1557.57,183.92 L1558.49,183.31 L1558.10,183.91 L1559.49,182.83 L1559.48,183.06 L1559.82,182.95 L1560.42,182.58Z" fill="#fdfba6"/><path d="M1525.30,169.00 L1531.40,168.66 L1526.84,168.24 L1528.48,167.90 L1526.45,167.47 L1532.06,167.32 L1526.91,166.73 L1529.41,166.49 L1527.89,166.04 L1528.38,165.70 L1532.40,165.66 L1529.71,165.08 L1529.05,164.66 L1531.32,164.53 L1533.84,164.47 L1532.11,163.94 L1533.28,163.75 L1532.11,163.25 L1532.78,163.01 L1534.79,162.98 L1533.30,162.42 L1533.36,162.09 L1534.76,162.01 L1535.18,161.76 L1533.45,161.10 L1533.49,160.77 L1534.47,160.64 L1536.25,160.70 L1536.00,160.32 L1536.70,160.17 L1537.48,160.04 L1537.18,159.65 L1536.94,159.28 L1539.23,159.58 L1538.51,159.08 L1539.99,159.19 L1540.43,159.03 L1542.25,159.29 L1542.25,159.29 L1543.57,159.96 L1543.91,160.32 L1544.77,160.83 L1545.18,161.19 L1545.83,161.61 L1546.49,162.02 L1546.18,162.17 L1546.06,162.38 L1546.72,162.77 L1546.98,163.06 L1547.07,163.30 L1546.08,163.33 L1547.50,163.84 L1546.43,163.86 L1546.74,164.14 L1548.56,164.68 L1547.35,164.69 L1548.80,165.13 L1547.71,165.18 L1550.47,165.77 L1548.77,165.75 L1549.48,166.04 L1551.24,166.43 L1549.05,166.39 L1548.14,166.50 L1550.58,166.93 L1550.97,167.15 L1551.95,167.41 L1551.54,167.56 L1552.17,167.77 L1551.12,167.90 L1549.53,168.02 L1553.09,168.33 L1549.96,168.42 L1549.14,168.60 L1551.57,168.82 L1554.80,169.00Z" fill="#fdfba6"/><path d="M1539.56,134.56 L1543.86,138.37 L1543.83,137.84 L1543.90,137.41 L1543.75,136.75 L1541.80,134.10 L1542.81,134.66 L1545.72,137.35 L1545.82,136.95 L1545.28,135.81 L1545.69,135.74 L1547.52,137.38 L1546.87,136.07 L1546.72,135.35 L1547.77,136.10 L1546.84,134.37 L1546.94,133.93 L1548.84,135.84 L1548.91,135.38 L1549.38,135.45 L1550.96,137.06 L1550.59,136.00 L1551.41,136.61 L1551.20,135.75 L1551.85,136.13 L1552.11,135.94 L1552.60,136.12 L1553.18,136.43 L1553.42,136.24 L1553.48,135.75 L1553.71,135.51 L1554.32,135.94 L1554.84,136.20 L1555.59,136.91 L1556.03,137.07 L1556.80,137.86 L1557.54,138.64 L1558.41,139.69 L1558.41,139.69 L1558.88,141.11 L1558.93,141.73 L1559.09,142.51 L1558.76,142.44 L1559.28,143.80 L1559.01,143.81 L1559.20,144.59 L1559.26,145.12 L1558.74,144.71 L1559.12,145.72 L1559.01,145.96 L1559.44,147.01 L1558.50,145.99 L1558.50,146.39 L1559.05,147.56 L1558.34,146.92 L1559.12,148.38 L1558.54,147.93 L1558.74,148.55 L1559.76,150.23 L1558.02,148.28 L1559.58,150.62 L1557.95,148.88 L1557.56,148.72 L1558.53,150.22 L1559.26,151.40 L1559.67,152.17 L1559.55,152.30 L1559.21,152.18 L1558.08,151.18 L1558.50,151.93 L1557.76,151.41 L1558.07,152.01 L1559.02,153.28 L1559.21,153.73 L1559.52,154.29 L1560.42,155.42Z" fill="#fdfba6"/><circle cx="1734" cy="169" r="33.7" fill="none" stroke="#fdfba6" stroke-width="1.8" stroke-opacity="1"/><path d="M1732.53,135.33 L1732.85,134.77 L1733.14,132.91 L1733.47,130.49 L1733.83,126.59 L1734.28,121.17 L1734.70,124.71 L1735.13,125.28 L1735.58,124.74 L1736.05,124.16 L1736.47,124.57 L1736.76,126.83 L1737.13,127.59 L1737.46,128.49 L1737.77,129.53 L1738.24,128.86 L1738.64,128.88 L1738.95,129.59 L1739.15,131.03 L1739.27,132.83 L1739.66,132.70 L1739.74,134.44 L1739.85,135.81 L1739.85,135.81 L1739.25,137.40 L1738.72,138.76 L1738.37,139.02 L1738.01,139.44 L1737.64,140.03 L1737.08,142.38 L1736.74,143.07 L1736.53,142.56 L1736.07,144.74 L1735.99,142.59 L1735.68,143.36 L1735.33,145.00 L1734.99,147.24 L1734.78,147.20 L1734.58,146.65 L1734.36,146.62 L1734.12,149.06 L1733.90,143.16 L1733.59,139.13 L1733.25,137.54 L1732.88,135.77 L1732.53,135.33Z" fill="#fdfba6"/><path d="M1756.77,144.15 L1757.37,143.99 L1758.43,143.38 L1760.97,141.27 L1762.38,140.40 L1768.29,135.11 L1767.37,136.68 L1767.58,137.11 L1766.70,138.55 L1765.44,140.30 L1765.18,141.11 L1765.69,141.21 L1765.12,142.25 L1764.95,142.93 L1764.42,143.88 L1765.89,143.19 L1764.88,144.52 L1764.15,145.58 L1764.06,146.12 L1764.32,146.40 L1763.60,147.39 L1762.98,148.28 L1761.61,149.67 L1761.61,149.67 L1759.80,150.55 L1758.91,150.81 L1757.62,151.39 L1757.89,150.82 L1756.86,151.24 L1756.04,151.52 L1755.78,151.37 L1755.40,151.33 L1753.56,152.52 L1753.56,152.18 L1752.73,152.57 L1753.18,151.84 L1752.58,152.04 L1751.57,152.64 L1750.67,153.16 L1750.95,152.58 L1751.13,152.07 L1752.79,150.06 L1754.76,147.65 L1756.08,145.84 L1756.65,144.77 L1756.77,144.15Z" fill="#fdfba6"/><path d="M1767.67,167.53 L1768.19,167.85 L1769.50,168.15 L1772.61,168.46 L1775.46,168.84 L1777.47,169.26 L1777.43,169.69 L1779.86,170.18 L1780.42,170.66 L1779.11,171.06 L1778.50,171.47 L1775.50,171.72 L1775.37,172.12 L1775.97,172.59 L1775.76,172.99 L1773.42,173.16 L1772.07,173.40 L1771.71,173.74 L1772.53,174.23 L1770.90,174.38 L1770.25,174.65 L1768.90,174.80 L1767.19,174.85 L1767.19,174.85 L1765.44,174.22 L1764.51,173.76 L1763.39,173.29 L1762.86,172.92 L1763.35,172.69 L1761.08,172.13 L1759.92,171.74 L1759.30,171.42 L1760.12,171.23 L1760.73,171.02 L1758.08,170.58 L1756.22,170.24 L1756.76,170.04 L1757.16,169.83 L1755.62,169.56 L1756.92,169.36 L1756.87,169.14 L1760.24,168.90 L1763.18,168.59 L1765.91,168.24 L1767.17,167.88 L1767.67,167.53Z" fill="#fdfba6"/><path d="M1758.85,191.77 L1759.00,192.36 L1759.57,193.38 L1761.11,195.37 L1764.90,199.65 L1767.58,202.98 L1765.54,201.55 L1764.68,201.30 L1765.58,202.92 L1763.42,201.23 L1762.18,200.49 L1761.08,199.88 L1760.96,200.36 L1759.91,199.75 L1760.22,200.76 L1758.55,199.35 L1758.30,199.65 L1758.30,200.28 L1756.81,198.97 L1755.96,198.46 L1755.16,197.98 L1754.57,197.76 L1753.33,196.61 L1753.33,196.61 L1752.67,195.10 L1752.44,194.25 L1752.29,193.53 L1751.78,192.36 L1751.98,192.14 L1751.57,191.16 L1751.84,191.05 L1751.33,189.99 L1751.62,189.91 L1749.99,187.60 L1750.96,188.34 L1749.56,186.39 L1750.80,187.41 L1749.13,185.25 L1749.44,185.26 L1748.54,184.00 L1748.79,183.97 L1752.76,187.62 L1755.33,189.74 L1757.17,191.09 L1758.20,191.62 L1758.85,191.77Z" fill="#fdfba6"/><path d="M1735.47,202.67 L1735.15,203.16 L1734.85,204.66 L1734.52,206.67 L1734.17,211.64 L1733.72,216.56 L1733.27,214.95 L1732.82,214.82 L1732.49,211.28 L1731.96,213.69 L1731.56,212.97 L1731.22,211.43 L1730.78,211.63 L1730.43,210.76 L1730.04,210.45 L1729.92,207.69 L1729.53,207.73 L1729.21,207.11 L1728.78,207.45 L1728.61,205.94 L1728.44,204.63 L1728.17,204.07 L1728.15,202.19 L1728.15,202.19 L1728.77,200.47 L1729.28,199.25 L1729.67,198.68 L1730.00,198.45 L1730.47,197.11 L1730.74,197.22 L1731.23,195.30 L1731.38,196.49 L1731.83,194.35 L1732.03,195.07 L1732.26,195.55 L1732.71,192.21 L1733.01,190.68 L1733.21,191.16 L1733.38,193.21 L1733.62,192.79 L1733.87,191.32 L1734.10,194.84 L1734.39,197.35 L1734.75,200.64 L1735.12,202.20 L1735.47,202.67Z" fill="#fdfba6"/><path d="M1711.23,193.85 L1710.65,193.98 L1709.29,194.91 L1707.19,196.57 L1704.84,198.39 L1703.24,199.39 L1699.90,202.03 L1703.13,198.32 L1702.01,198.78 L1702.71,197.56 L1700.55,198.93 L1701.28,197.69 L1700.87,197.48 L1701.50,196.38 L1703.58,194.12 L1702.12,194.79 L1703.75,192.98 L1703.76,192.49 L1703.34,192.33 L1703.57,191.68 L1704.64,190.44 L1705.25,189.56 L1706.39,188.33 L1706.39,188.33 L1707.85,187.70 L1709.40,186.96 L1709.81,187.03 L1710.47,186.91 L1710.90,186.94 L1711.83,186.57 L1713.37,185.69 L1713.48,185.94 L1713.18,186.54 L1713.99,186.20 L1714.61,186.01 L1715.15,185.86 L1715.62,185.77 L1717.36,184.49 L1716.61,185.51 L1719.19,183.35 L1717.87,184.94 L1717.14,186.00 L1714.20,189.35 L1712.00,192.08 L1711.33,193.25 L1711.23,193.85Z" fill="#fdfba6"/><path d="M1700.33,170.47 L1699.72,170.16 L1698.69,169.84 L1695.41,169.54 L1693.51,169.16 L1690.59,168.74 L1688.85,168.28 L1688.91,167.84 L1687.56,167.34 L1692.35,167.10 L1692.49,166.69 L1692.59,166.29 L1693.71,165.96 L1692.12,165.42 L1693.06,165.09 L1693.64,164.74 L1693.99,164.38 L1696.44,164.28 L1696.35,163.89 L1696.41,163.52 L1697.58,163.32 L1699.33,163.24 L1700.81,163.15 L1700.81,163.15 L1702.74,163.81 L1703.35,164.22 L1703.77,164.59 L1704.57,165.01 L1705.56,165.43 L1706.07,165.77 L1706.91,166.14 L1708.85,166.60 L1709.74,166.93 L1707.64,167.01 L1707.90,167.29 L1711.10,167.73 L1711.86,167.99 L1712.98,168.25 L1711.29,168.41 L1713.67,168.68 L1710.64,168.86 L1708.43,169.10 L1704.28,169.41 L1702.59,169.75 L1700.85,170.12 L1700.33,170.47Z" fill="#fdfba6"/><path d="M1709.15,146.23 L1708.96,145.59 L1708.25,144.45 L1707.05,142.79 L1703.40,138.64 L1701.25,135.86 L1704.01,138.05 L1703.82,137.22 L1705.09,137.95 L1703.49,135.57 L1706.24,137.97 L1706.26,137.36 L1705.99,136.41 L1706.79,136.70 L1707.30,136.66 L1708.55,137.54 L1709.77,138.44 L1710.30,138.49 L1711.18,139.01 L1711.98,139.46 L1712.54,139.60 L1713.50,140.34 L1714.67,141.39 L1714.67,141.39 L1715.36,142.94 L1716.05,144.42 L1715.87,144.68 L1715.81,145.10 L1716.03,145.87 L1716.64,147.10 L1716.84,147.79 L1716.14,147.37 L1717.44,149.34 L1718.27,150.70 L1717.97,150.73 L1719.12,152.37 L1718.82,152.37 L1718.09,151.91 L1718.45,152.63 L1717.03,151.48 L1718.02,152.83 L1716.02,151.17 L1713.49,149.06 L1711.27,147.33 L1709.76,146.34 L1709.15,146.23Z" fill="#fdfba6"/><circle cx="1894" cy="169" r="33.7" fill="none" stroke="#fdfba6" stroke-width="1.8" stroke-opacity="1"/><path d="M1894.00,120.30 L1894.47,124.46 L1894.84,128.96 L1895.29,127.88 L1895.86,124.55 L1896.30,125.17 L1896.77,124.94 L1896.92,129.29 L1897.78,123.94 L1898.24,124.16 L1898.84,122.97 L1898.81,127.39 L1899.26,127.35 L1899.84,126.34 L1900.54,124.68 L1900.75,126.40 L1901.34,125.62 L1901.59,126.81 L1902.17,126.17 L1902.64,126.16 L1902.13,130.77 L1903.35,127.19 L1903.93,126.67 L1904.05,128.08 L1904.81,126.92 L1905.32,126.74 L1904.81,130.28 L1905.31,130.06 L1905.52,130.83 L1905.34,132.80 L1907.27,128.16 L1906.32,132.40 L1908.03,128.71 L1908.00,130.12 L1908.42,130.22 L1907.95,132.66 L1909.42,130.05 L1908.14,134.36 L1909.49,132.15 L1909.62,132.89 L1910.63,131.65 L1910.57,132.80 L1910.99,132.89 L1911.42,132.96 L1910.38,136.01 L1911.39,134.88 L1912.02,134.52 L1912.29,134.88 L1911.72,136.76 L1913.09,135.11 L1913.02,136.05 L1913.03,136.82 L1912.86,137.86 L1913.96,136.81 L1913.39,138.45 L1914.44,137.53 L1914.03,138.85 L1914.66,138.61 L1914.12,140.05 L1914.81,139.72 L1915.27,139.73 L1915.82,139.62 L1915.49,140.69 L1915.45,141.34 L1916.10,141.12 L1915.96,141.88 L1915.95,142.47 L1916.48,142.40 L1916.33,143.13 L1916.54,143.44 L1916.55,143.96 L1916.55,143.96 L1916.12,143.91 L1915.82,143.72 L1915.24,143.87 L1914.95,143.67 L1914.63,143.53 L1914.25,143.45 L1913.95,143.28 L1913.21,143.69 L1913.44,142.82 L1912.95,142.92 L1912.46,143.02 L1912.46,142.43 L1912.00,142.52 L1911.35,142.88 L1911.29,142.38 L1910.55,142.93 L1910.11,143.02 L1910.17,142.31 L1909.59,142.63 L1909.03,142.97 L1909.48,141.52 L1908.84,142.01 L1908.00,142.89 L1907.54,143.09 L1907.23,143.03 L1907.83,141.13 L1906.77,142.58 L1906.15,143.18 L1905.94,142.91 L1906.17,141.65 L1905.35,142.76 L1905.25,142.24 L1904.47,143.33 L1904.73,141.91 L1904.54,141.54 L1904.24,141.46 L1903.38,142.96 L1903.70,141.15 L1903.62,140.41 L1902.86,141.73 L1903.06,140.08 L1901.78,143.22 L1901.96,141.59 L1901.69,141.45 L1900.91,143.23 L1900.95,141.95 L1900.63,142.02 L1900.56,141.04 L1899.98,142.25 L1899.78,141.80 L1899.19,143.27 L1899.22,141.66 L1898.46,144.21 L1898.79,140.65 L1898.55,140.30 L1897.72,143.81 L1897.86,140.79 L1897.58,140.62 L1897.24,140.97 L1896.72,143.14 L1896.47,142.91 L1896.36,140.93 L1896.12,140.08 L1895.65,142.72 L1895.26,144.87 L1895.13,142.12 L1894.74,145.37 L1894.58,141.40 L1894.27,143.21 L1894.00,146.30Z" fill="#fdfba6"/><path d="M1942.70,169.00 L1934.78,169.43 L1934.33,169.84 L1941.95,170.51 L1935.16,170.72 L1933.95,171.09 L1937.64,171.75 L1940.43,172.41 L1940.66,172.92 L1937.36,173.10 L1938.51,173.68 L1939.02,174.21 L1936.30,174.34 L1933.23,174.37 L1932.34,174.66 L1938.00,175.97 L1934.87,175.91 L1935.14,176.40 L1933.71,176.57 L1933.81,177.03 L1936.20,177.97 L1936.41,178.48 L1931.87,177.88 L1933.98,178.82 L1934.56,179.41 L1935.35,180.08 L1930.96,179.32 L1933.72,180.54 L1932.10,180.50 L1931.34,180.70 L1930.06,180.72 L1931.44,181.60 L1931.58,182.09 L1932.96,183.03 L1933.64,183.74 L1928.83,182.37 L1928.99,182.85 L1931.75,184.41 L1929.74,184.02 L1927.90,183.67 L1928.04,184.15 L1927.50,184.34 L1929.36,185.64 L1930.03,186.42 L1930.19,186.97 L1927.97,186.31 L1926.68,186.08 L1926.14,186.24 L1927.19,187.25 L1928.05,188.19 L1926.15,187.56 L1925.45,187.60 L1925.56,188.11 L1925.75,188.69 L1926.17,189.41 L1924.70,188.94 L1923.57,188.65 L1924.42,189.68 L1924.47,190.18 L1923.93,190.27 L1923.09,190.14 L1922.98,190.52 L1922.26,190.45 L1922.38,191.02 L1921.42,190.73 L1920.96,190.84 L1920.98,191.32 L1920.64,191.51 L1920.04,191.48 L1919.49,191.47 L1919.04,191.55 L1919.04,191.55 L1919.01,191.05 L1919.05,190.62 L1919.46,190.52 L1919.50,190.10 L1919.56,189.70 L1919.49,189.20 L1919.44,188.74 L1919.30,188.21 L1920.12,188.40 L1919.78,187.73 L1920.32,187.70 L1919.97,187.05 L1919.85,186.57 L1919.92,186.22 L1919.93,185.84 L1921.05,186.17 L1920.22,185.26 L1920.04,184.77 L1920.55,184.70 L1920.23,184.14 L1921.78,184.65 L1921.71,184.23 L1921.02,183.49 L1921.83,183.55 L1921.41,182.97 L1921.99,182.89 L1921.66,182.37 L1920.92,181.67 L1919.95,180.88 L1920.45,180.78 L1922.11,181.17 L1922.70,181.06 L1922.82,180.76 L1919.83,179.23 L1920.28,179.09 L1923.14,179.84 L1921.73,178.98 L1923.15,179.15 L1921.96,178.41 L1921.25,177.86 L1922.43,177.91 L1922.24,177.53 L1922.66,177.33 L1921.76,176.75 L1923.42,176.88 L1920.07,175.69 L1922.51,176.00 L1921.69,175.49 L1921.64,175.18 L1919.83,174.49 L1919.39,174.12 L1920.35,174.03 L1920.12,173.70 L1920.84,173.54 L1920.68,173.23 L1921.36,173.04 L1922.91,172.96 L1918.26,172.06 L1919.79,171.98 L1920.16,171.75 L1921.32,171.58 L1919.53,171.14 L1922.55,171.10 L1920.55,170.67 L1922.90,170.51 L1921.51,170.15 L1919.11,169.79 L1916.96,169.48 L1922.08,169.29 L1916.70,169.00Z" fill="#fdfba6"/><path d="M1894.00,217.70 L1893.50,216.34 L1893.13,210.55 L1892.64,212.26 L1892.11,213.99 L1891.93,208.52 L1891.43,209.92 L1890.78,212.84 L1890.68,208.51 L1889.59,215.62 L1889.46,212.19 L1889.48,208.06 L1888.91,209.28 L1888.30,210.62 L1888.21,208.18 L1887.55,209.75 L1887.56,207.05 L1886.54,210.48 L1885.92,211.34 L1885.19,212.71 L1884.86,212.00 L1884.72,210.52 L1885.10,206.97 L1883.40,212.16 L1883.64,209.37 L1882.77,210.93 L1883.27,207.44 L1883.42,205.42 L1882.69,206.46 L1881.93,207.51 L1881.17,208.48 L1881.63,205.75 L1880.64,207.36 L1881.10,204.84 L1880.16,206.22 L1880.40,204.42 L1878.75,207.51 L1878.81,206.21 L1878.86,205.02 L1877.89,206.23 L1878.45,203.92 L1878.52,202.80 L1877.35,204.39 L1876.77,204.65 L1876.72,203.82 L1875.98,204.36 L1876.93,201.65 L1876.37,201.87 L1876.59,200.67 L1876.25,200.51 L1875.13,201.69 L1875.00,201.14 L1874.25,201.61 L1875.06,199.54 L1873.71,200.98 L1873.34,200.81 L1874.23,198.76 L1873.41,199.30 L1872.96,199.27 L1873.12,198.38 L1873.35,197.43 L1873.13,197.11 L1872.85,196.86 L1872.35,196.91 L1872.22,196.48 L1872.07,196.08 L1871.83,195.79 L1871.76,195.32 L1871.58,194.98 L1871.42,194.61 L1871.45,194.04 L1871.45,194.04 L1871.94,194.03 L1872.28,194.16 L1872.64,194.28 L1872.92,194.48 L1873.43,194.41 L1873.74,194.56 L1874.30,194.40 L1874.58,194.59 L1874.82,194.82 L1875.14,194.95 L1875.41,195.16 L1875.53,195.57 L1875.76,195.83 L1876.84,194.83 L1876.80,195.49 L1877.73,194.64 L1878.05,194.72 L1878.27,194.97 L1877.66,196.63 L1878.18,196.40 L1878.58,196.37 L1879.25,195.83 L1880.20,194.75 L1879.61,196.53 L1880.71,195.08 L1880.91,195.38 L1881.29,195.28 L1880.78,197.09 L1881.54,196.22 L1881.40,197.29 L1882.60,195.33 L1882.37,196.67 L1882.72,196.64 L1883.28,196.09 L1883.87,195.40 L1883.25,197.90 L1884.14,196.39 L1884.49,196.31 L1884.38,197.58 L1885.64,194.73 L1885.91,194.81 L1885.94,195.68 L1885.93,196.76 L1886.41,196.17 L1886.75,196.05 L1887.49,194.36 L1886.98,197.57 L1887.70,195.88 L1888.31,194.46 L1888.27,195.95 L1888.85,194.52 L1888.67,196.96 L1888.73,198.30 L1889.08,198.09 L1889.76,195.76 L1890.11,195.36 L1890.53,194.36 L1890.82,194.14 L1890.75,197.08 L1891.47,193.03 L1891.25,198.11 L1891.98,193.08 L1891.84,198.46 L1892.25,196.75 L1892.64,194.87 L1893.02,192.43 L1893.10,197.79 L1893.51,192.37 L1893.72,195.89 L1894.00,191.70Z" fill="#fdfba6"/><path d="M1845.30,169.00 L1850.86,168.55 L1853.96,168.16 L1849.74,167.61 L1852.35,167.25 L1853.41,166.87 L1853.49,166.45 L1850.47,165.80 L1850.27,165.33 L1849.79,164.82 L1848.88,164.26 L1848.01,163.68 L1853.76,163.92 L1851.81,163.22 L1849.99,162.50 L1849.87,162.01 L1854.21,162.27 L1854.23,161.84 L1850.91,160.78 L1851.00,160.33 L1850.86,159.83 L1850.54,159.29 L1855.61,160.00 L1852.89,158.90 L1852.35,158.31 L1851.90,157.72 L1853.65,157.73 L1856.45,158.09 L1855.82,157.47 L1854.65,156.67 L1854.95,156.31 L1856.55,156.40 L1856.38,155.90 L1857.34,155.80 L1856.17,154.93 L1857.31,154.92 L1855.99,153.95 L1856.38,153.65 L1856.00,153.03 L1856.25,152.66 L1858.36,153.13 L1857.14,152.12 L1857.72,151.93 L1858.70,151.94 L1859.38,151.82 L1858.59,150.96 L1860.22,151.34 L1861.47,151.56 L1860.63,150.66 L1861.86,150.89 L1861.50,150.23 L1861.07,149.52 L1861.04,149.04 L1861.94,149.12 L1863.95,149.93 L1864.18,149.64 L1862.82,148.28 L1863.73,148.43 L1863.91,148.09 L1864.42,147.98 L1864.53,147.59 L1864.93,147.41 L1865.51,147.38 L1865.62,146.99 L1866.16,146.94 L1866.99,147.13 L1867.33,146.94 L1867.68,146.75 L1868.11,146.65 L1868.39,146.42 L1868.96,146.45 L1868.96,146.45 L1868.94,146.90 L1868.82,147.26 L1868.74,147.66 L1868.88,148.22 L1868.79,148.59 L1868.39,148.70 L1867.98,148.82 L1868.20,149.42 L1868.57,150.11 L1868.35,150.37 L1868.05,150.56 L1868.47,151.26 L1868.14,151.42 L1868.35,151.96 L1867.62,151.87 L1867.55,152.21 L1866.83,152.15 L1868.33,153.45 L1867.43,153.29 L1867.75,153.84 L1866.79,153.67 L1866.49,153.88 L1867.54,154.81 L1866.71,154.73 L1867.96,155.73 L1867.02,155.61 L1868.12,156.49 L1866.42,156.02 L1867.56,156.90 L1867.40,157.16 L1868.03,157.76 L1866.07,157.26 L1867.39,158.14 L1867.21,158.39 L1865.85,158.19 L1867.72,159.22 L1867.35,159.41 L1868.23,160.03 L1865.50,159.41 L1865.74,159.82 L1866.80,160.47 L1866.59,160.72 L1868.18,161.50 L1864.97,160.89 L1865.69,161.41 L1864.96,161.54 L1864.90,161.85 L1864.67,162.12 L1866.41,162.83 L1866.31,163.11 L1868.90,163.94 L1867.30,163.91 L1866.82,164.11 L1867.44,164.51 L1865.22,164.44 L1865.65,164.81 L1868.19,165.46 L1864.79,165.31 L1865.68,165.72 L1868.78,166.35 L1866.52,166.40 L1868.29,166.84 L1870.06,167.24 L1866.19,167.25 L1868.76,167.68 L1865.77,167.82 L1866.94,168.15 L1868.22,168.46 L1870.20,168.75 L1871.30,169.00Z" fill="#fdfba6"/><path d="M1094,329 L1094.00,277.00 A52,52 0 1 1 1045.14,346.79Z" fill="#ffffff" fill-opacity="0.47"/><circle cx="1094" cy="329" r="51.2" fill="none" stroke="#ffffff" stroke-width="1.3" stroke-opacity="0.47"/><path d="M1050.5,344.8 L1051.9,343.3 L1051.0,342.6 L1051.1,341.6 L1050.9,340.6 L1048.9,340.1 L1049.6,339.0 L1049.7,338.0 L1050.2,336.9 L1049.8,336.0 L1048.3,335.2 L1049.2,334.2 L1047.3,333.4 L1048.3,332.3 L1047.4,331.4 L1047.4,330.4 L1049.0,329.3 L1048.4,328.4 L1050.0,327.5 L1048.1,326.4 L1048.0,325.4 L1048.3,324.5 L1048.7,323.5 L1047.9,322.4 L1049.5,321.7 L1050.6,320.9 L1049.4,319.7 L1050.3,318.9 L1050.8,318.1 L1049.9,316.8 L1050.3,315.9 L1050.6,315.0 L1051.8,314.4 L1052.2,313.5 L1053.3,312.9 L1051.6,311.2 L1053.6,311.0 L1053.8,310.1 L1053.2,308.7 L1053.6,307.8 L1055.4,307.7 L1055.2,306.5 L1054.9,305.2 L1056.0,304.8 L1056.1,303.7 L1058.4,304.1 L1058.0,302.6 L1059.1,302.3 L1060.2,302.0 L1059.9,300.5 L1061.1,300.3 L1061.7,299.6 L1062.5,299.0 L1063.2,298.4 L1063.4,297.3 L1064.4,297.0 L1063.8,294.9 L1064.7,294.5 L1066.8,295.5 L1066.3,293.3 L1067.0,292.7 L1068.0,292.5 L1068.5,291.5 L1069.7,291.5 L1071.3,292.4 L1071.5,291.0 L1072.6,290.9 L1072.7,289.1 L1074.3,290.1 L1074.8,289.1 L1076.0,289.4 L1077.3,290.2 L1077.4,287.9 L1078.7,288.6 L1079.6,288.5 L1080.7,289.0 L1081.0,286.9 L1082.2,287.5 L1083.2,287.9 L1084.0,287.0 L1084.7,285.9 L1085.8,286.6 L1086.6,286.1 L1087.6,286.6 L1088.5,285.9 L1089.4,285.8 L1090.3,286.1 L1091.3,286.5 L1092.2,285.8 L1093.1,287.1 L1094.0,285.9 L1094.0,308.7 L1093.6,308.4 L1093.1,308.6 L1092.7,308.2 L1092.2,308.2 L1091.7,307.6 L1091.3,308.0 L1090.7,307.4 L1090.5,308.6 L1089.9,307.9 L1089.6,308.8 L1088.9,307.7 L1088.9,309.6 L1088.5,309.6 L1088.1,309.8 L1087.6,309.6 L1086.9,309.1 L1086.2,308.5 L1086.0,309.2 L1085.9,310.1 L1085.5,310.2 L1084.5,309.2 L1084.3,310.0 L1084.3,310.8 L1083.4,310.1 L1083.0,310.4 L1082.8,311.0 L1082.2,310.8 L1082.2,311.6 L1082.2,312.4 L1081.3,312.0 L1081.3,312.7 L1081.4,313.5 L1080.9,313.6 L1080.3,313.6 L1079.7,313.6 L1078.9,313.4 L1078.7,313.9 L1078.9,314.7 L1078.3,314.7 L1077.8,314.8 L1077.3,315.0 L1076.9,315.3 L1077.5,316.3 L1077.3,316.8 L1076.1,316.4 L1077.3,317.8 L1075.6,317.2 L1076.9,318.6 L1075.4,318.2 L1076.1,319.1 L1075.2,319.2 L1074.3,319.2 L1075.8,320.4 L1074.7,320.4 L1074.7,320.9 L1075.0,321.5 L1073.8,321.5 L1074.5,322.2 L1074.6,322.7 L1073.5,322.9 L1073.4,323.3 L1072.8,323.6 L1074.4,324.5 L1073.9,324.8 L1073.8,325.2 L1073.2,325.6 L1072.8,326.0 L1073.4,326.5 L1073.8,327.0 L1072.6,327.3 L1072.1,327.8 L1073.7,328.3 L1073.0,328.7 L1072.3,329.2 L1072.3,329.6 L1072.3,330.1 L1073.6,330.5 L1072.9,331.0 L1073.5,331.4 L1072.7,331.9 L1072.6,332.4 L1073.4,332.7 L1073.1,333.2 L1073.7,333.6 L1072.9,334.2 L1074.5,334.3 L1074.4,334.8 L1073.4,335.5 L1074.4,335.7 L1074.8,336.0Z" fill="#b2eefa" fill-opacity="1"/><path d="M1094.0,289.0 L1095.2,283.2 L1095.9,292.8 L1097.3,286.7 L1097.7,293.1 L1098.7,293.0 L1101.1,283.2 L1102.0,284.8 L1101.8,291.7 L1102.5,292.7 L1103.7,292.2 L1104.4,293.1 L1107.5,286.5 L1109.0,285.7 L1109.0,289.1 L1108.4,293.4 L1108.4,295.9 L1113.6,287.0 L1113.0,290.9 L1115.1,289.2 L1116.2,289.7 L1116.2,292.0 L1117.9,291.2 L1120.0,290.2 L1118.5,294.5 L1117.0,298.2 L1122.3,293.1 L1118.0,300.1 L1118.6,300.8 L1123.2,297.3 L1126.2,295.8 L1120.4,303.1 L1122.2,302.7 L1123.4,303.0 L1128.5,300.1 L1128.3,301.7 L1124.5,305.9 L1125.1,306.8 L1129.8,304.8 L1125.6,308.8 L1127.2,308.9 L1127.1,310.1 L1133.4,307.8 L1134.8,308.4 L1133.8,310.2 L1127.2,314.3 L1129.3,314.5 L1134.0,313.7 L1129.9,316.3 L1128.6,317.8 L1128.9,318.7 L1131.1,319.1 L1130.0,320.3 L1138.5,319.5 L1130.3,322.2 L1138.5,321.9 L1131.3,324.0 L1136.4,324.4 L1136.6,325.5 L1137.6,326.5 L1133.1,327.8 L1138.7,328.8 L1140.2,329.9 L1140.8,331.2 L1133.1,331.8 L1137.3,333.2 L1140.3,334.7 L1136.1,335.3 L1138.8,336.9 L1136.5,337.6 L1137.3,339.0 L1129.2,338.0 L1136.8,341.2 L1131.1,340.6 L1128.6,340.8 L1128.5,341.7 L1135.5,345.6 L1132.7,345.6 L1129.8,345.5 L1134.1,348.7 L1133.2,349.5 L1128.3,348.1 L1126.7,348.3 L1132.2,352.9 L1130.7,353.3 L1131.0,354.9 L1125.7,352.4 L1124.9,353.1 L1128.9,357.7 L1123.2,354.3 L1121.7,354.3 L1121.3,355.2 L1121.3,356.6 L1123.2,360.1 L1118.3,356.3 L1118.7,358.1 L1117.7,358.5 L1121.9,365.6 L1115.7,359.0 L1114.6,359.1 L1115.1,361.5 L1113.5,360.8 L1113.1,362.0 L1112.2,362.4 L1111.5,363.2 L1113.7,370.2 L1108.8,362.2 L1108.0,362.5 L1108.3,365.8 L1108.5,369.5 L1107.9,371.3 L1104.6,364.0 L1103.7,364.6 L1105.0,373.9 L1103.9,374.4 L1102.4,372.7 L1101.0,371.5 L1100.0,372.1 L1099.0,373.5 L1098.0,374.7 L1096.8,374.3 L1095.7,375.1 L1094.4,372.2 L1093.3,372.0 L1092.2,373.0 L1091.2,371.5 L1089.8,374.1 L1088.5,375.0 L1087.4,374.8 L1086.5,373.1 L1085.0,374.6 L1084.0,373.7 L1083.6,370.3 L1081.5,373.6 L1080.8,372.0 L1080.1,370.5 L1078.5,371.5 L1078.4,368.7 L1076.1,371.2 L1076.3,367.9 L1074.5,369.1 L1072.6,370.3 L1072.9,367.3 L1071.0,368.4 L1070.8,366.5 L1069.7,366.1 L1068.2,366.3 L1066.6,366.5 L1066.9,364.1 L1065.7,363.8 L1064.3,363.7 L1064.1,362.1 L1064.2,360.3 L1063.0,360.0 L1061.6,359.8 L1061.6,358.2 L1060.3,357.9 L1059.7,356.9 L1057.9,356.9 L1056.9,356.2 L1056.0,355.3 L1056.2,353.8 L1055.9,352.6 L1055.0,351.8 L1055.2,350.4 L1053.6,349.9 L1055.2,347.8 L1053.3,347.5 L1053.0,346.4 L1052.7,345.2 L1054.0,343.6 L1072.1,337.0 L1073.2,337.2 L1072.4,338.1 L1073.0,338.5 L1074.6,338.4 L1074.4,339.2 L1074.5,339.7 L1074.6,340.3 L1074.2,341.2 L1073.8,342.2 L1076.0,341.4 L1074.5,343.3 L1076.5,342.5 L1075.4,344.1 L1076.5,344.0 L1077.8,343.6 L1078.1,344.1 L1077.2,345.8 L1077.4,346.5 L1077.9,346.8 L1079.0,346.5 L1079.4,347.0 L1079.6,347.6 L1079.9,348.3 L1080.6,348.3 L1080.6,349.4 L1081.6,349.0 L1083.0,347.9 L1082.5,349.9 L1083.1,350.0 L1084.6,348.4 L1084.3,350.3 L1085.1,349.9 L1085.4,350.8 L1085.9,351.1 L1087.1,349.4 L1087.0,352.0 L1087.9,350.8 L1088.6,350.5 L1088.7,352.7 L1089.6,351.3 L1090.1,351.7 L1090.9,350.4 L1091.3,352.1 L1091.9,351.8 L1092.4,353.2 L1093.0,353.4 L1093.6,352.7 L1094.2,353.2 L1094.9,353.3 L1095.4,351.3 L1095.9,350.5 L1096.7,352.9 L1097.3,352.7 L1097.7,351.1 L1098.5,352.3 L1098.7,350.5 L1099.8,352.6 L1100.0,350.8 L1101.6,354.2 L1102.4,354.4 L1102.1,351.5 L1103.6,353.9 L1104.9,355.1 L1105.6,354.9 L1103.8,349.5 L1107.3,355.0 L1106.8,352.5 L1105.7,349.3 L1107.4,350.8 L1108.6,351.5 L1109.7,351.9 L1109.7,350.8 L1107.9,347.2 L1107.9,346.2 L1112.5,350.8 L1112.9,350.2 L1113.9,350.1 L1110.0,345.2 L1114.9,349.1 L1116.0,349.1 L1117.1,349.0 L1110.8,342.8 L1112.4,343.4 L1116.2,345.4 L1117.5,345.5 L1118.6,345.3 L1113.0,340.9 L1116.4,342.3 L1114.2,340.3 L1115.1,340.1 L1120.8,342.2 L1116.8,339.5 L1120.5,340.4 L1115.1,337.4 L1120.4,338.8 L1122.8,338.8 L1120.0,337.1 L1115.6,335.1 L1122.0,336.2 L1123.9,335.9 L1117.0,333.7 L1115.1,332.7 L1123.2,333.4 L1122.7,332.6 L1122.2,331.8 L1124.6,331.2 L1121.0,330.3 L1124.7,329.6 L1121.7,328.9 L1121.7,328.1 L1122.2,327.4 L1122.0,326.7 L1122.3,325.9 L1124.4,324.9 L1124.3,324.1 L1123.2,323.5 L1119.2,323.6 L1120.7,322.6 L1118.5,322.4 L1116.6,322.3 L1115.7,322.0 L1115.0,321.6 L1114.3,321.3 L1114.7,320.5 L1118.2,318.3 L1120.5,316.5 L1114.1,318.8 L1118.2,316.0 L1120.4,313.9 L1113.9,317.0 L1119.7,312.5 L1115.7,314.3 L1111.3,316.6 L1115.7,312.6 L1114.4,312.7 L1114.1,312.1 L1112.5,312.7 L1115.3,309.1 L1109.0,314.3 L1114.6,307.7 L1112.0,309.4 L1111.2,309.3 L1113.3,305.8 L1111.1,307.3 L1108.9,309.1 L1110.2,306.1 L1109.4,306.0 L1105.7,310.5 L1108.2,305.2 L1108.2,303.8 L1105.6,307.1 L1105.2,306.4 L1106.6,302.0 L1102.6,309.3 L1104.5,303.0 L1103.6,303.3 L1101.1,308.6 L1100.6,308.3 L1101.9,301.9 L1100.8,303.1 L1100.2,302.5 L1099.3,303.6 L1099.4,299.1 L1098.5,299.9 L1097.6,301.1 L1096.7,302.9 L1096.3,299.5 L1095.3,303.0 L1094.7,302.3 L1094.0,302.5Z" fill="#ffffff" fill-opacity="1"/><path d="M1254.0,282.3 L1255.6,282.8 L1257.1,283.7 L1258.6,284.1 L1260.1,284.6 L1261.7,284.1 L1263.3,283.9 L1264.6,285.4 L1266.3,284.8 L1267.8,285.2 L1269.1,286.4 L1270.7,286.3 L1272.2,286.9 L1273.7,287.3 L1274.6,289.1 L1275.9,289.9 L1277.3,290.5 L1279.7,289.5 L1280.7,290.9 L1281.4,292.6 L1282.4,293.9 L1283.9,294.4 L1285.9,294.5 L1286.4,296.3 L1288.0,297.0 L1287.6,299.4 L1290.3,299.2 L1289.7,301.7 L1290.7,302.8 L1291.5,304.1 L1293.2,304.9 L1294.2,306.1 L1294.4,307.8 L1294.6,309.4 L1296.4,310.3 L1295.8,312.2 L1298.0,313.1 L1297.4,314.9 L1297.7,316.5 L1298.9,317.7 L1298.1,319.5 L1300.1,320.7 L1299.0,322.5 L1300.3,323.9 L1299.7,325.5 L1298.8,327.1 L1301.0,328.6 L1299.4,330.2 L1300.0,331.8 L1299.8,333.3 L1298.8,334.8 L1300.1,336.5 L1298.0,337.7 L1298.1,339.3 L1297.6,340.8 L1298.1,342.5 L1297.4,344.0 L1296.0,345.1 L1296.1,346.8 L1295.6,348.3 L1296.1,350.2 L1294.4,351.2 L1293.3,352.3 L1293.2,354.1 L1291.7,355.0 L1291.4,356.7 L1289.8,357.4 L1288.9,358.8 L1288.0,360.0 L1287.1,361.3 L1286.0,362.4 L1284.1,362.6 L1283.1,363.8 L1282.0,365.0 L1281.6,367.1 L1280.0,367.5 L1278.9,368.8 L1276.8,368.4 L1275.7,369.6 L1274.8,371.2 L1273.3,371.8 L1271.6,371.9 L1270.3,372.9 L1268.4,372.1 L1267.2,373.7 L1265.4,373.1 L1264.0,373.9 L1262.6,374.6 L1261.1,375.5 L1259.3,373.7 L1257.9,375.1 L1256.3,376.0 L1254.7,374.0 L1253.2,374.5 L1251.6,375.8 L1250.0,375.2 L1248.4,375.7 L1246.8,375.6 L1245.6,373.3 L1243.8,374.2 L1242.1,374.6 L1240.8,373.2 L1239.3,372.9 L1238.1,371.5 L1236.0,372.5 L1235.2,370.4 L1233.9,369.7 L1232.1,369.6 L1231.1,368.2 L1229.6,367.8 L1227.5,368.0 L1227.0,366.1 L1225.5,365.4 L1224.7,364.0 L1223.3,363.2 L1222.7,361.5 L1220.4,361.7 L1220.0,359.9 L1218.3,359.2 L1217.8,357.6 L1217.1,356.2 L1217.0,354.4 L1214.5,354.2 L1215.0,352.0 L1213.3,351.2 L1213.9,349.1 L1211.2,348.7 L1211.8,346.7 L1211.7,345.1 L1210.2,344.0 L1211.0,342.1 L1208.8,341.1 L1209.2,339.4 L1208.5,337.9 L1209.5,336.2 L1209.2,334.7 L1209.0,333.1 L1208.4,331.6 L1209.0,330.1 L1207.6,328.5 L1208.2,327.0 L1208.6,325.4 L1207.3,323.7 L1207.9,322.2 L1209.5,320.9 L1208.2,319.0 L1209.7,317.8 L1210.9,316.5 L1210.0,314.6 L1211.1,313.3 L1210.3,311.4 L1237.4,322.3 L1236.1,322.5 L1237.0,323.4 L1235.2,323.5 L1234.7,324.1 L1236.1,325.1 L1236.1,325.7 L1235.0,326.2 L1235.7,326.9 L1234.5,327.5 L1234.6,328.1 L1234.6,328.8 L1234.2,329.5 L1233.8,330.2 L1234.3,330.8 L1236.1,331.3 L1236.0,331.9 L1235.5,332.6 L1234.8,333.5 L1236.2,333.8 L1235.4,334.7 L1235.7,335.3 L1236.7,335.6 L1237.4,336.0 L1236.8,336.9 L1237.9,337.1 L1236.3,338.7 L1236.9,339.1 L1237.4,339.6 L1237.3,340.4 L1238.4,340.5 L1238.3,341.4 L1239.1,341.6 L1239.9,341.8 L1240.9,341.7 L1241.5,342.0 L1241.8,342.6 L1242.4,342.8 L1241.8,344.5 L1243.3,343.6 L1243.0,345.2 L1243.3,346.1 L1244.5,345.2 L1245.4,344.9 L1245.4,346.3 L1245.9,346.9 L1246.5,347.1 L1247.6,346.2 L1248.0,346.8 L1248.7,346.6 L1249.0,348.3 L1250.1,346.5 L1250.6,346.6 L1251.2,346.9 L1251.7,348.1 L1252.4,347.7 L1253.0,347.8 L1253.7,347.0 L1254.3,347.9 L1254.9,347.2 L1255.6,347.6 L1256.1,347.1 L1256.9,347.6 L1257.4,347.2 L1258.0,347.1 L1258.8,347.7 L1259.3,347.1 L1259.8,346.5 L1260.7,347.0 L1261.2,346.7 L1261.9,346.4 L1262.7,346.6 L1262.6,345.0 L1263.4,345.2 L1263.9,344.8 L1265.1,345.5 L1264.7,343.8 L1265.8,344.2 L1266.3,343.7 L1267.3,343.9 L1267.5,343.1 L1267.0,341.7 L1268.7,342.4 L1269.0,341.8 L1268.0,340.1 L1269.9,340.8 L1268.7,339.1 L1269.7,339.0 L1271.3,339.3 L1271.0,338.3 L1271.3,337.7 L1271.0,336.9 L1271.9,336.5 L1271.0,335.5 L1270.9,334.8 L1271.2,334.3 L1271.4,333.7 L1272.7,333.4 L1273.4,332.9 L1271.7,331.9 L1272.2,331.3 L1272.3,330.7 L1272.6,330.1 L1273.4,329.5 L1271.8,328.9 L1273.0,328.2 L1272.2,327.6 L1273.0,326.9 L1271.8,326.4 L1273.2,325.6 L1271.6,325.2 L1271.6,324.6 L1272.7,323.6 L1273.0,322.8 L1270.9,322.9 L1271.7,321.9 L1272.4,320.9 L1270.5,321.0 L1271.2,320.0 L1269.5,320.2 L1269.4,319.5 L1269.4,318.8 L1270.4,317.3 L1269.5,317.2 L1269.1,316.6 L1269.0,315.8 L1267.9,315.9 L1267.5,315.4 L1266.6,315.4 L1265.9,315.2 L1265.7,314.5 L1265.5,313.7 L1264.5,314.1 L1263.8,313.9 L1263.6,313.1 L1263.1,312.6 L1262.7,312.0 L1262.0,312.1 L1261.6,311.5 L1260.5,312.4 L1259.9,312.2 L1259.5,311.6 L1258.9,311.4 L1258.7,309.8 L1257.9,310.2 L1257.2,310.3 L1256.7,309.2 L1256.0,309.4 L1255.3,310.6 L1254.6,310.5 L1254.0,309.0Z" fill="#b3effc" fill-opacity="1"/><path d="M1211.8,311.9 L1212.1,310.7 L1213.7,310.0 L1213.9,308.7 L1214.6,307.6 L1216.9,307.5 L1216.5,305.8 L1217.3,304.8 L1218.6,304.2 L1220.4,304.1 L1221.6,303.5 L1221.2,301.6 L1222.8,301.4 L1223.5,300.4 L1224.9,300.2 L1225.9,299.5 L1227.0,299.1 L1228.1,298.5 L1229.4,298.4 L1230.3,297.7 L1231.2,297.0 L1231.9,296.1 L1233.3,296.2 L1234.4,295.9 L1235.3,295.3 L1236.7,295.5 L1237.4,294.7 L1238.8,295.0 L1240.0,295.3 L1240.7,294.1 L1241.9,294.3 L1243.1,294.7 L1244.4,295.4 L1245.0,294.0 L1246.2,294.5 L1247.1,294.2 L1248.3,294.8 L1249.3,295.0 L1250.2,294.4 L1251.3,295.6 L1252.2,295.2 L1252.7,304.5 L1251.9,303.3 L1251.2,303.2 L1250.6,304.2 L1249.7,303.0 L1248.8,302.5 L1248.4,304.4 L1247.4,303.4 L1247.2,305.3 L1246.0,303.7 L1245.9,305.8 L1244.7,304.6 L1244.1,305.0 L1243.6,305.8 L1242.5,305.2 L1242.5,306.9 L1240.7,305.1 L1240.9,306.9 L1240.3,307.2 L1239.8,307.9 L1238.1,306.6 L1239.1,309.3 L1237.7,308.7 L1237.8,310.0 L1236.5,309.5 L1235.2,309.3 L1235.2,310.4 L1234.6,310.8 L1233.7,311.1 L1234.5,312.7 L1233.4,312.8 L1234.1,314.2 L1232.4,313.9 L1231.4,314.1 L1231.0,314.7 L1232.5,316.5 L1231.6,316.8 L1231.7,317.7 L1229.4,317.4 L1231.2,319.0 L1229.7,319.2Z" fill="#b3effc" fill-opacity="1"/><circle cx="1254" cy="329" r="33" fill="none" stroke="#b3effc" stroke-width="1.5" stroke-opacity="1"/><circle cx="1414" cy="329" r="33" fill="none" stroke="#b3effc" stroke-width="1.4" stroke-opacity="1"/><path d="M1423.4,284.8 L1425.0,285.4 L1426.8,285.4 L1428.6,285.3 L1430.3,285.7 L1431.5,287.4 L1433.6,286.9 L1435.4,287.3 L1436.0,289.7 L1438.2,289.5 L1439.7,290.3 L1440.8,291.9 L1442.7,292.2 L1443.4,294.1 L1444.8,295.1 L1446.5,295.9 L1447.5,297.3 L1449.1,298.2 L1449.6,300.1 L1450.4,301.7 L1451.6,302.9 L1452.5,304.4 L1454.0,305.5 L1455.1,306.9 L1455.8,308.5 L1455.6,310.5 L1456.1,312.2 L1457.4,313.5 L1458.0,315.2 L1457.7,317.1 L1459.3,318.4 L1459.6,320.2 L1458.7,322.1 L1459.1,323.8 L1460.3,325.4 L1460.0,327.1 L1459.3,328.9 L1459.2,330.6 L1460.7,332.4 L1459.9,334.1 L1460.3,335.9 L1459.7,337.6 L1458.7,339.2 L1457.6,340.7 L1457.9,342.6 L1456.7,344.0 L1456.9,345.9 L1455.9,347.4 L1455.2,348.9 L1454.2,350.3 L1453.5,351.9 L1453.1,353.7 L1451.8,355.0 L1450.5,356.1 L1450.3,358.2 L1449.4,359.7 L1448.1,361.0 L1445.8,361.1 L1445.4,363.2 L1444.4,364.7 L1442.0,364.5 L1441.3,366.5 L1440.0,367.7 L1438.5,368.6 L1436.7,369.0 L1434.8,369.0 L1434.0,371.3 L1432.2,371.7 L1430.4,371.9 L1428.5,371.7 L1427.2,373.3 L1425.4,373.2 L1424.0,374.8 L1422.0,373.7 L1420.3,374.1 L1418.7,375.5 L1416.9,375.0 L1415.2,375.7 L1413.5,375.1 L1411.7,374.5 L1410.0,375.0 L1408.3,374.0 L1406.5,374.4 L1404.7,374.9 L1403.1,373.7 L1401.7,372.4 L1399.9,372.4 L1398.2,372.2 L1396.3,372.2 L1394.9,371.0 L1393.7,369.5 L1392.1,368.9 L1390.8,367.7 L1389.2,367.0 L1387.7,366.2 L1386.2,365.3 L1385.1,363.9 L1383.2,363.5 L1382.1,362.1 L1381.1,360.7 L1379.9,359.4 L1378.4,358.5 L1377.4,357.0 L1376.7,355.4 L1375.6,354.0 L1375.0,352.4 L1372.9,351.6 L1372.9,349.6 L1372.4,347.9 L1371.4,346.5 L1371.7,344.5 L1369.8,343.3 L1369.3,341.6 L1368.6,340.0 L1369.1,338.1 L1368.9,336.4 L1367.6,334.8 L1367.5,333.1 L1368.4,331.3 L1367.8,329.5 L1368.1,327.8 L1367.8,326.0 L1367.9,324.3 L1367.7,322.5 L1369.1,321.0 L1369.3,319.3 L1370.3,317.7 L1370.0,315.8 L1370.8,314.3 L1371.0,312.5 L1372.1,311.1 L1372.1,309.2 L1372.4,307.4 L1373.2,305.8 L1374.5,304.5 L1375.4,303.0 L1376.2,301.4 L1377.5,300.2 L1379.0,299.2 L1379.7,297.5 L1381.9,297.2 L1382.2,295.0 L1383.2,293.5 L1385.0,292.9 L1386.3,291.7 L1387.7,290.7 L1390.0,290.9 L1391.3,289.9 L1392.6,288.6 L1393.8,287.1 L1395.3,286.2 L1396.9,285.5 L1398.6,284.9 L1400.6,285.7 L1402.2,285.0 L1403.6,283.5 L1405.5,283.9 L1407.2,283.5 L1409.0,283.5 L1410.7,283.2 L1412.4,283.9 L1413.3,309.8 L1412.5,308.2 L1411.9,309.8 L1411.2,310.1 L1410.2,308.8 L1409.5,309.4 L1409.0,310.5 L1407.8,309.0 L1407.4,310.2 L1407.0,311.1 L1405.6,309.9 L1404.9,310.1 L1405.0,312.0 L1403.7,311.3 L1403.0,311.6 L1403.1,313.1 L1401.8,312.5 L1402.1,314.1 L1400.8,313.7 L1400.2,314.3 L1399.8,315.0 L1399.7,315.8 L1399.4,316.6 L1398.7,317.0 L1397.3,316.9 L1396.8,317.4 L1396.3,318.0 L1396.7,319.1 L1395.6,319.4 L1396.5,320.7 L1395.6,321.1 L1395.2,321.8 L1395.6,322.7 L1395.7,323.5 L1394.8,324.0 L1394.2,324.7 L1394.6,325.5 L1395.0,326.3 L1395.0,327.1 L1393.8,327.7 L1394.8,328.5 L1394.1,329.2 L1393.1,330.0 L1395.0,330.7 L1394.5,331.4 L1394.9,332.1 L1395.1,332.8 L1393.6,333.9 L1394.9,334.4 L1395.2,335.1 L1395.8,335.7 L1394.8,336.9 L1395.1,337.6 L1395.8,338.1 L1395.8,339.0 L1396.3,339.6 L1396.7,340.3 L1398.3,340.1 L1397.5,341.6 L1398.8,341.6 L1399.1,342.3 L1399.6,342.8 L1400.6,342.9 L1400.4,344.2 L1400.9,344.8 L1401.6,345.1 L1402.4,345.4 L1403.2,345.6 L1404.2,345.3 L1404.8,345.7 L1404.8,347.3 L1405.7,347.2 L1406.3,347.7 L1407.0,348.0 L1407.7,348.6 L1408.4,348.9 L1409.3,348.4 L1409.9,349.2 L1410.7,349.1 L1411.6,348.3 L1412.2,349.1 L1413.0,348.5 L1413.8,349.1 L1414.5,348.3 L1415.3,349.1 L1416.0,348.4 L1416.7,347.9 L1417.4,347.8 L1418.2,348.3 L1419.1,348.8 L1420.0,349.0 L1420.2,347.1 L1421.3,348.0 L1422.1,348.0 L1422.2,346.4 L1423.2,346.7 L1424.3,347.1 L1424.9,346.5 L1425.5,346.0 L1426.0,345.5 L1426.8,345.2 L1427.6,345.0 L1428.2,344.4 L1427.5,342.6 L1428.9,343.0 L1429.2,342.2 L1428.9,341.0 L1430.1,341.0 L1429.9,339.9 L1430.9,339.7 L1430.9,338.8 L1431.2,338.1 L1431.3,337.4 L1432.7,337.2 L1433.2,336.5 L1432.9,335.6 L1433.2,334.9 L1433.9,334.3 L1432.9,333.3 L1432.7,332.5 L1433.7,332.0 L1434.7,331.3 L1433.0,330.4 L1433.6,329.7 L1433.5,328.9 L1433.4,328.2 L1433.5,327.5 L1433.2,326.8 L1434.1,325.9 L1433.6,325.2 L1434.1,324.3 L1433.7,323.6 L1433.0,323.0 L1433.1,322.2 L1432.3,321.7 L1432.8,320.7 L1432.4,320.0 L1431.1,319.8 L1430.5,319.3 L1431.4,317.9 L1431.0,317.2 L1430.3,316.8 L1428.9,316.9 L1429.2,315.6 L1429.2,314.6 L1427.7,315.0 L1427.9,313.7 L1427.3,313.2 L1426.4,313.1 L1426.0,312.3 L1425.5,311.7 L1424.5,311.8 L1423.3,312.3 L1423.6,310.3 L1422.8,310.0 L1421.9,310.3 L1421.3,309.5 L1420.1,310.8 L1419.8,309.2 L1418.8,310.0 L1418.3,309.0Z" fill="#b3effc" fill-opacity="1"/><path d="M1414.5,309 L1414.5,283 L1412.5,283 L1412.5,309Z" fill="#b3effc"/><circle cx="1574" cy="329" r="33" fill="none" stroke="#b3effc" stroke-width="1.4" stroke-opacity="1"/><path d="M1583.6,283.7 L1585.4,284.0 L1586.8,285.4 L1588.7,285.1 L1590.4,285.4 L1591.6,287.2 L1593.1,288.0 L1594.8,288.4 L1596.9,288.2 L1597.6,290.5 L1599.5,290.6 L1601.0,291.5 L1601.7,293.4 L1603.5,294.0 L1605.6,294.2 L1606.6,295.7 L1608.0,296.8 L1608.1,299.1 L1610.1,299.7 L1610.2,301.8 L1612.5,302.3 L1613.4,303.8 L1613.6,305.8 L1613.8,307.6 L1615.1,308.9 L1615.2,310.7 L1616.6,312.0 L1617.7,313.4 L1618.3,315.1 L1618.9,316.7 L1618.9,318.5 L1619.5,320.2 L1619.3,322.0 L1619.5,323.7 L1619.6,325.4 L1619.1,327.2 L1620.2,328.9 L1620.8,330.6 L1620.4,332.4 L1620.0,334.1 L1620.3,335.9 L1619.5,337.6 L1618.8,339.2 L1619.1,341.1 L1617.0,342.3 L1616.7,344.0 L1617.4,346.1 L1616.4,347.6 L1614.7,348.7 L1614.6,350.6 L1613.6,352.0 L1613.6,354.0 L1612.2,355.2 L1611.4,356.8 L1609.9,357.8 L1608.9,359.3 L1607.4,360.2 L1606.9,362.2 L1604.5,362.2 L1604.1,364.4 L1602.0,364.5 L1601.3,366.4 L1599.3,366.6 L1597.8,367.5 L1596.8,369.1 L1594.9,369.2 L1593.5,370.3 L1592.0,371.2 L1590.8,372.8 L1588.7,372.3 L1587.1,373.0 L1585.4,373.2 L1583.7,373.5 L1582.2,374.7 L1580.4,374.8 L1578.8,375.7 L1577.0,375.9 L1575.2,374.1 L1573.5,375.7 L1571.7,375.9 L1570.0,374.3 L1568.2,375.3 L1566.7,373.7 L1564.8,374.1 L1563.1,373.9 L1561.7,372.5 L1559.8,372.9 L1558.0,372.6 L1556.3,372.1 L1555.3,370.1 L1553.7,369.5 L1551.5,369.9 L1550.0,369.1 L1549.2,367.1 L1547.4,366.6 L1546.5,364.9 L1545.2,363.8 L1542.9,363.8 L1542.1,362.2 L1541.0,360.8 L1539.2,360.0 L1538.4,358.4 L1537.5,357.0 L1536.1,355.8 L1536.0,353.8 L1534.9,352.4 L1534.1,350.9 L1532.4,349.9 L1532.2,348.0 L1531.1,346.6 L1530.4,345.0 L1529.7,343.4 L1529.3,341.7 L1529.4,339.8 L1529.6,338.0 L1528.2,336.5 L1527.6,334.8 L1528.5,333.0 L1527.7,331.3 L1528.0,329.5 L1528.8,327.8 L1527.6,326.0 L1528.9,324.4 L1528.8,322.7 L1528.3,320.8 L1529.7,319.3 L1528.6,317.3 L1529.2,315.6 L1531.0,314.4 L1531.0,312.5 L1531.1,310.7 L1532.5,309.4 L1532.9,307.6 L1533.2,305.8 L1535.3,305.0 L1535.5,303.1 L1536.7,301.8 L1538.2,300.8 L1539.2,299.3 L1539.7,297.5 L1541.0,296.3 L1542.0,294.8 L1544.1,294.6 L1545.5,293.5 L1547.1,292.8 L1548.5,291.8 L1549.8,290.7 L1551.3,289.9 L1552.5,288.4 L1554.3,288.2 L1555.9,287.6 L1557.3,286.5 L1559.0,286.2 L1560.4,284.9 L1561.9,283.9 L1563.8,284.1 L1565.3,282.9 L1567.3,283.9 L1568.9,283.1 L1570.7,284.0 L1572.4,283.4 L1573.3,308.7 L1572.5,308.7 L1571.9,309.8 L1571.0,308.6 L1570.4,310.1 L1569.7,310.0 L1568.6,308.8 L1568.2,310.1 L1567.2,309.5 L1567.0,311.2 L1566.3,311.4 L1565.2,310.8 L1565.1,312.2 L1564.2,312.1 L1563.1,311.8 L1562.9,312.8 L1562.6,313.6 L1561.0,312.8 L1561.2,314.2 L1560.6,314.7 L1559.5,314.6 L1559.6,315.7 L1558.1,315.4 L1558.5,316.8 L1558.5,317.7 L1556.9,317.5 L1556.9,318.4 L1556.6,319.1 L1555.5,319.4 L1555.9,320.5 L1555.5,321.1 L1554.8,321.6 L1554.1,322.2 L1555.0,323.3 L1554.3,323.9 L1554.7,324.8 L1554.9,325.6 L1554.8,326.3 L1554.5,327.0 L1553.6,327.7 L1554.2,328.5 L1554.9,329.2 L1553.6,330.0 L1554.0,330.7 L1553.4,331.6 L1555.2,332.1 L1555.1,332.8 L1555.2,333.6 L1555.6,334.2 L1554.7,335.2 L1555.8,335.7 L1554.9,336.8 L1556.5,337.0 L1556.2,337.9 L1557.2,338.2 L1556.4,339.6 L1557.7,339.6 L1557.4,340.7 L1558.9,340.6 L1558.6,341.8 L1559.1,342.3 L1559.6,342.9 L1559.6,344.0 L1560.4,344.2 L1561.5,344.1 L1562.0,344.7 L1561.9,346.1 L1562.6,346.5 L1563.7,346.2 L1564.8,345.8 L1564.9,347.1 L1565.6,347.4 L1566.3,347.8 L1567.0,348.1 L1567.6,348.7 L1568.5,348.5 L1569.2,348.6 L1570.2,347.7 L1570.8,348.6 L1571.6,348.1 L1572.2,349.6 L1573.0,348.6 L1573.8,349.8 L1574.5,349.9 L1575.3,349.4 L1576.0,348.2 L1576.8,349.0 L1577.7,349.5 L1578.3,348.6 L1578.8,347.7 L1579.9,348.7 L1580.6,348.3 L1581.4,348.3 L1582.0,347.8 L1582.6,347.3 L1583.4,347.0 L1584.0,346.6 L1584.1,345.3 L1585.3,345.8 L1585.5,344.7 L1586.9,345.4 L1587.5,344.8 L1588.0,344.2 L1588.4,343.5 L1588.7,342.8 L1588.4,341.5 L1588.9,341.0 L1590.6,341.3 L1591.2,340.8 L1590.1,339.2 L1591.1,338.9 L1591.9,338.5 L1591.3,337.3 L1592.4,337.0 L1592.6,336.3 L1593.7,335.9 L1593.5,335.0 L1593.9,334.3 L1593.5,333.4 L1593.4,332.7 L1593.8,332.0 L1593.4,331.2 L1593.0,330.4 L1593.9,329.7 L1593.5,328.9 L1593.5,328.2 L1593.0,327.5 L1593.9,326.7 L1594.3,325.9 L1594.3,325.1 L1593.0,324.6 L1593.7,323.6 L1592.6,323.2 L1592.6,322.4 L1591.8,321.9 L1592.3,320.9 L1591.6,320.4 L1592.1,319.2 L1591.3,318.8 L1591.1,318.0 L1590.4,317.6 L1590.1,316.9 L1589.7,316.3 L1589.3,315.6 L1588.6,315.2 L1588.2,314.5 L1587.2,314.5 L1586.4,314.3 L1586.5,313.0 L1585.4,313.1 L1585.1,312.4 L1584.7,311.6 L1583.9,311.4 L1582.9,311.6 L1582.1,311.5 L1581.6,311.0 L1581.2,309.9 L1580.5,309.5 L1579.6,310.0 L1579.0,309.0 L1578.2,309.0Z" fill="#b3effc" fill-opacity="1"/><path d="M1574.5,309 L1574.5,283 L1572.5,283 L1572.5,309Z" fill="#b3effc"/><path d="M1734.0,288.7 L1735.0,286.4 L1736.0,288.3 L1736.8,289.9 L1738.1,286.8 L1738.6,290.9 L1739.8,289.5 L1740.3,292.2 L1741.8,289.4 L1742.8,289.1 L1743.3,291.3 L1744.8,289.3 L1745.6,290.2 L1745.7,293.1 L1746.6,293.2 L1748.6,290.6 L1749.6,290.8 L1750.1,292.1 L1751.3,291.8 L1752.7,291.2 L1751.8,295.0 L1752.4,295.9 L1753.0,296.7 L1755.8,293.9 L1755.2,296.6 L1756.9,295.8 L1758.9,294.8 L1758.0,297.6 L1760.2,296.4 L1760.7,297.3 L1758.8,301.0 L1760.4,300.7 L1761.1,301.2 L1762.4,301.3 L1763.6,301.4 L1762.4,303.9 L1762.9,304.6 L1763.9,305.0 L1765.2,305.1 L1768.2,304.2 L1767.0,306.2 L1769.2,305.9 L1768.9,307.3 L1767.6,309.2 L1768.4,309.9 L1771.7,309.2 L1768.8,311.8 L1770.0,312.3 L1768.5,314.0 L1771.7,313.7 L1770.0,315.3 L1773.0,315.3 L1773.2,316.3 L1774.8,316.8 L1770.5,319.1 L1774.7,319.0 L1771.1,320.8 L1773.0,321.4 L1771.5,322.6 L1771.9,323.5 L1774.5,324.1 L1774.2,325.1 L1772.2,326.2 L1774.3,327.1 L1773.5,328.0 L1771.7,329.0 L1772.7,329.9 L1776.7,331.1 L1773.9,331.9 L1775.1,333.0 L1775.9,334.1 L1775.2,335.0 L1772.7,335.6 L1774.6,336.9 L1774.3,337.9 L1774.0,338.9 L1773.8,339.8 L1774.1,341.0 L1774.3,342.1 L1773.7,343.0 L1770.8,343.0 L1773.3,345.0 L1771.6,345.4 L1772.5,346.9 L1768.0,345.8 L1769.0,347.4 L1768.7,348.3 L1768.1,349.1 L1766.6,349.2 L1766.3,350.1 L1768.2,352.6 L1765.9,352.2 L1764.7,352.4 L1766.6,355.2 L1763.7,354.1 L1765.7,357.1 L1765.2,358.0 L1763.7,358.0 L1762.2,357.9 L1760.4,357.4 L1758.7,356.9 L1758.5,358.0 L1758.9,360.0 L1756.8,358.9 L1756.7,360.2 L1756.9,362.2 L1754.9,360.9 L1754.2,361.6 L1755.2,365.0 L1754.4,365.7 L1752.6,364.4 L1752.1,365.6 L1751.8,367.4 L1749.8,365.3 L1749.6,367.3 L1749.1,368.8 L1747.0,366.0 L1746.6,367.7 L1745.5,367.6 L1743.9,365.4 L1743.1,365.7 L1743.0,369.5 L1741.2,365.7 L1740.5,367.0 L1740.0,370.1 L1738.8,368.6 L1738.0,370.7 L1737.1,371.0 L1735.9,368.9 L1735.0,371.6 L1734.0,371.7 L1733.1,368.0 L1732.1,367.7 L1731.2,367.4 L1730.4,366.2 L1729.0,370.3 L1727.9,371.1 L1727.7,365.8 L1726.6,367.0 L1725.9,365.5 L1724.4,367.8 L1724.0,365.8 L1722.1,369.0 L1721.2,368.3 L1720.0,368.7 L1720.3,365.1 L1719.7,364.2 L1717.2,367.6 L1717.5,364.5 L1717.3,362.8 L1714.5,366.1 L1715.8,361.8 L1713.9,363.1 L1712.8,363.1 L1710.9,364.3 L1710.0,363.8 L1711.7,359.7 L1709.3,361.3 L1707.3,362.3 L1706.4,361.7 L1705.9,360.8 L1705.1,360.0 L1705.4,358.3 L1707.0,355.3 L1705.5,355.5 L1705.6,354.2 L1704.4,354.0 L1701.8,354.8 L1701.4,353.9 L1701.0,353.0 L1698.9,353.2 L1699.2,351.8 L1698.3,351.2 L1697.2,350.6 L1697.7,349.2 L1697.7,348.1 L1696.8,347.4 L1696.5,346.4 L1696.2,345.5 L1697.9,343.7 L1696.9,343.1 L1698.8,341.4 L1697.4,340.9 L1695.3,340.5 L1697.1,339.0 L1693.4,339.0 L1694.1,337.8 L1694.1,336.8 L1694.2,335.8 L1692.5,335.1 L1694.7,333.8 L1696.9,332.6 L1693.8,331.9 L1694.2,330.9 L1692.9,330.0 L1696.5,329.0 L1693.0,328.0 L1691.7,327.0 L1695.7,326.2 L1693.6,325.1 L1691.7,323.9 L1692.2,322.9 L1694.3,322.2 L1695.9,321.5 L1692.3,319.8 L1695.1,319.4 L1696.7,318.8 L1694.7,317.3 L1697.8,317.2 L1696.3,315.7 L1698.1,315.4 L1696.7,313.8 L1697.5,313.1 L1699.5,313.0 L1697.7,311.1 L1700.4,311.3 L1699.4,309.8 L1699.4,308.6 L1698.1,306.7 L1700.1,306.8 L1699.7,305.3 L1700.9,304.9 L1703.4,305.6 L1704.3,305.1 L1704.8,304.3 L1706.0,304.2 L1706.0,302.9 L1705.1,300.8 L1705.3,299.6 L1705.8,298.7 L1708.5,300.3 L1708.0,298.2 L1710.5,299.7 L1710.8,298.6 L1710.1,296.1 L1711.7,296.6 L1713.0,296.9 L1713.5,296.0 L1714.1,295.1 L1714.3,293.6 L1714.2,291.2 L1717.3,295.3 L1717.4,293.2 L1718.2,292.8 L1718.5,291.0 L1720.4,293.1 L1720.1,289.5 L1721.7,291.3 L1723.2,292.8 L1723.5,290.6 L1724.4,289.9 L1725.8,291.7 L1725.9,287.8 L1727.6,291.5 L1728.3,290.1 L1729.4,290.8 L1730.1,288.4 L1731.1,289.4 L1732.1,288.8 L1733.0,286.8Z M1733.3,300.6 L1732.6,300.5 L1731.7,297.4 L1730.9,296.7 L1730.1,296.8 L1729.5,298.2 L1728.8,298.6 L1728.5,300.9 L1727.7,300.6 L1727.2,301.4 L1726.4,301.0 L1725.5,300.5 L1725.0,301.2 L1724.3,301.3 L1722.5,298.7 L1722.7,301.2 L1721.0,299.2 L1721.0,300.9 L1721.1,303.0 L1720.4,303.1 L1719.9,303.6 L1717.9,301.6 L1719.0,304.9 L1716.3,302.0 L1715.5,302.3 L1715.6,303.7 L1715.1,304.3 L1715.4,305.8 L1714.1,305.4 L1715.1,307.7 L1712.7,306.1 L1712.1,306.6 L1713.7,309.1 L1710.9,307.5 L1710.5,308.2 L1711.0,309.6 L1709.8,309.5 L1711.0,311.4 L1710.1,311.6 L1709.6,312.1 L1710.0,313.3 L1707.7,312.7 L1707.2,313.3 L1708.8,315.0 L1708.5,315.6 L1705.5,314.9 L1707.9,316.9 L1704.9,316.3 L1706.1,317.6 L1704.4,317.8 L1705.1,318.8 L1705.0,319.6 L1703.0,319.8 L1704.6,321.0 L1703.0,321.3 L1706.2,322.9 L1706.0,323.5 L1702.8,323.7 L1705.0,324.8 L1702.9,325.2 L1702.2,325.9 L1701.6,326.6 L1701.4,327.4 L1705.4,328.3 L1704.1,329.0 L1702.7,329.8 L1705.5,330.4 L1704.5,331.1 L1702.1,332.1 L1704.9,332.5 L1702.0,333.7 L1704.3,334.1 L1703.2,335.0 L1703.0,335.9 L1705.7,336.0 L1705.2,336.8 L1706.3,337.3 L1707.0,337.8 L1706.7,338.6 L1707.5,339.0 L1704.4,341.0 L1705.5,341.4 L1704.8,342.6 L1706.4,342.7 L1706.4,343.5 L1708.5,343.2 L1708.6,343.9 L1709.4,344.3 L1707.3,346.5 L1709.2,346.2 L1708.6,347.4 L1709.6,347.6 L1710.0,348.3 L1710.3,349.0 L1711.3,349.1 L1710.7,350.6 L1713.7,348.8 L1711.5,352.1 L1714.5,350.0 L1713.8,351.8 L1713.2,353.6 L1713.7,354.3 L1715.1,353.8 L1717.2,352.1 L1715.9,355.2 L1716.6,355.5 L1717.2,356.1 L1718.5,355.4 L1718.2,357.5 L1720.0,355.7 L1721.2,354.9 L1722.0,354.9 L1722.4,355.5 L1722.8,356.5 L1723.3,357.2 L1724.0,357.4 L1724.9,356.9 L1725.3,358.2 L1726.4,356.9 L1726.2,360.6 L1727.4,358.9 L1728.0,359.4 L1728.8,359.7 L1729.9,357.4 L1730.4,358.2 L1731.0,360.4 L1731.6,361.4 L1732.5,360.7 L1733.3,359.4 L1734.0,361.5 L1734.8,360.8 L1735.4,358.1 L1736.1,358.6 L1736.8,357.8 L1737.6,358.7 L1738.3,358.6 L1739.4,360.7 L1739.5,357.0 L1740.4,357.9 L1741.7,360.4 L1742.3,359.7 L1743.3,360.2 L1743.4,358.0 L1743.7,356.6 L1744.5,356.7 L1745.1,356.4 L1745.5,355.3 L1746.0,354.9 L1747.0,355.3 L1747.5,354.8 L1749.5,356.8 L1750.2,356.6 L1749.9,354.5 L1750.8,354.7 L1750.6,353.1 L1752.2,354.0 L1752.3,352.9 L1753.6,353.4 L1753.2,351.7 L1753.0,350.5 L1753.7,350.1 L1754.4,349.9 L1756.1,350.6 L1756.8,350.2 L1757.8,350.1 L1758.2,349.4 L1756.2,346.8 L1757.6,347.0 L1759.5,347.6 L1757.5,345.2 L1758.8,345.2 L1760.5,345.5 L1758.9,343.6 L1759.0,342.9 L1760.7,343.0 L1759.9,341.8 L1762.3,342.1 L1762.2,341.3 L1761.6,340.2 L1761.8,339.5 L1761.3,338.6 L1761.2,337.8 L1764.6,338.1 L1765.2,337.5 L1762.1,335.9 L1764.8,335.8 L1765.9,335.2 L1765.9,334.4 L1762.7,333.2 L1763.9,332.6 L1762.9,331.8 L1765.3,331.3 L1763.3,330.4 L1764.7,329.7 L1764.1,329.0 L1764.5,328.3 L1765.3,327.5 L1762.5,326.9 L1765.5,325.9 L1763.5,325.4 L1765.3,324.4 L1764.3,323.8 L1764.3,323.1 L1762.1,322.8 L1763.4,321.8 L1761.4,321.5 L1761.2,320.9 L1763.2,319.5 L1761.3,319.4 L1760.8,318.8 L1762.6,317.4 L1761.2,317.1 L1760.0,316.9 L1760.3,316.0 L1759.4,315.7 L1761.5,313.7 L1760.3,313.5 L1761.3,312.1 L1759.9,312.0 L1758.1,312.3 L1757.7,311.8 L1758.0,310.6 L1756.6,310.8 L1757.3,309.3 L1758.4,307.4 L1755.3,309.2 L1757.1,306.4 L1754.7,307.8 L1753.8,307.7 L1755.4,304.9 L1752.9,306.7 L1753.1,305.2 L1752.1,305.3 L1751.7,304.6 L1750.6,305.0 L1751.3,302.6 L1749.7,303.8 L1749.6,302.4 L1749.5,301.2 L1748.3,301.8 L1747.2,302.3 L1746.4,302.3 L1745.8,301.9 L1744.7,302.8 L1744.9,300.2 L1744.0,300.7 L1743.8,298.9 L1742.1,301.7 L1742.1,299.1 L1740.9,301.0 L1740.8,298.2 L1740.0,298.4 L1738.9,300.5 L1738.3,299.6 L1737.4,300.6 L1736.9,299.4 L1736.3,297.6 L1735.4,299.9 L1734.7,299.5 L1734.0,300.6Z" fill="#b3effc" fill-opacity="1" fill-rule="evenodd"/><circle cx="1894" cy="329" r="34" fill="none" stroke="#b3effc" stroke-width="1.8" stroke-opacity="1"/><path d="M1912.6,287.2 L1912.9,289.3 L1913.7,290.1 L1915.0,290.0 L1915.2,292.0 L1916.2,292.4 L1917.9,291.8 L1918.3,293.2 L1919.5,293.4 L1921.3,292.8 L1920.4,295.9 L1921.1,296.8 L1923.3,295.9 L1922.7,298.1 L1923.6,298.7 L1925.9,298.0 L1925.9,299.6 L1926.8,300.2 L1928.2,300.5 L1928.8,301.5 L1928.5,303.1 L1929.0,304.1 L1928.6,305.7 L1928.5,307.0 L1931.0,306.7 L1931.7,307.6 L1932.5,308.4 L1930.4,310.7 L1933.4,310.4 L1933.6,311.5 L1931.8,313.4 L1933.3,314.0 L1932.2,315.5 L1934.2,315.9 L1933.0,317.4 L1933.1,318.5 L1935.4,319.0 L1933.6,320.5 L1933.1,321.6 L1933.8,322.5 L1935.5,323.3 L1936.0,324.3 L1934.5,325.5 L1933.6,326.6 L1933.6,327.6 L1923.4,328.0 L1923.3,327.2 L1923.9,326.4 L1922.8,325.8 L1921.2,325.3 L1923.1,324.2 L1920.6,324.0 L1922.8,322.8 L1921.4,322.4 L1920.2,321.9 L1920.0,321.3 L1919.1,320.9 L1918.9,320.2 L1919.2,319.4 L1919.0,318.7 L1918.5,318.2 L1919.4,317.0 L1917.4,317.2 L1917.2,316.5 L1916.8,316.1 L1917.4,314.9 L1914.9,315.7 L1915.2,314.7 L1914.0,314.7 L1914.9,313.3 L1913.7,313.4 L1913.8,312.5 L1912.3,313.0 L1913.3,311.2 L1912.1,311.4 L1911.8,310.8 L1910.4,311.4 L1910.2,310.7 L1909.6,310.4 L1908.6,310.7 L1909.2,308.9 L1907.7,309.8 L1907.0,309.9 L1906.5,309.6 L1906.1,309.1 L1906.2,307.8 L1904.3,309.9 L1904.7,308.0 L1903.1,309.8 L1902.8,309.2Z" fill="#b3effc" fill-opacity="1"/><path d="M1934.3,347.0 L1934.1,347.7 L1934.1,348.5 L1934.5,349.6 L1933.7,350.0 L1933.2,350.6 L1932.8,351.3 L1930.7,350.9 L1931.0,351.9 L1929.7,352.0 L1931.1,353.8 L1929.7,353.7 L1930.3,355.1 L1928.3,354.6 L1929.3,356.2 L1928.7,356.8 L1926.1,355.6 L1926.9,357.2 L1925.9,357.3 L1926.6,358.9 L1924.2,357.7 L1925.2,359.7 L1924.1,359.7 L1923.3,359.8 L1921.6,359.1 L1921.5,360.0 L1920.7,360.2 L1921.9,362.7 L1921.4,363.3 L1919.0,361.4 L1918.6,362.1 L1917.8,362.2 L1917.3,362.7 L1917.3,363.8 L1915.8,362.9 L1916.1,364.6 L1914.4,363.1 L1914.0,363.9 L1914.6,366.4 L1913.7,366.2 L1912.0,364.5 L1912.1,366.2 L1911.3,366.2 L1910.4,366.0 L1909.9,366.6 L1906.0,357.2 L1905.5,354.8 L1906.6,356.2 L1907.2,356.1 L1906.4,353.5 L1907.5,354.6 L1907.8,354.1 L1908.3,353.9 L1908.0,352.5 L1908.6,352.6 L1909.6,353.2 L1908.8,351.2 L1908.9,350.5 L1910.5,351.9 L1910.1,350.7 L1910.2,350.0 L1909.9,348.9 L1911.0,349.5 L1911.6,349.5 L1910.7,347.9 L1912.0,348.6 L1912.9,348.9 L1913.0,348.3 L1912.4,347.1 L1912.2,346.3 L1912.9,346.4 L1913.4,346.2 L1913.8,346.0 L1912.9,344.7 L1913.4,344.5 L1912.7,343.4 L1912.9,343.1 L1914.0,343.4 L1914.7,343.4 L1915.2,343.2 L1914.6,342.3 L1913.9,341.4 L1913.9,340.9 L1915.4,341.3 L1915.6,340.9 L1915.2,340.2 L1914.6,339.5 L1915.0,339.2 L1914.6,338.6 L1914.4,338.1Z" fill="#b3effc" fill-opacity="1"/><path d="M1875.1,367.8 L1874.1,367.3 L1872.9,367.2 L1870.8,368.7 L1871.5,365.3 L1869.6,366.2 L1868.2,366.3 L1868.3,364.2 L1867.7,363.2 L1865.8,363.7 L1865.0,362.9 L1865.0,361.3 L1863.2,361.5 L1864.3,358.8 L1861.8,359.8 L1862.1,357.9 L1860.1,358.2 L1860.4,356.5 L1858.7,356.4 L1859.7,354.2 L1857.6,354.4 L1857.6,353.1 L1858.1,351.4 L1857.4,350.6 L1856.8,349.7 L1855.0,349.4 L1856.7,347.3 L1854.5,347.2 L1856.5,345.1 L1854.9,344.7 L1855.4,343.3 L1854.7,342.4 L1852.9,341.9 L1853.5,340.6 L1853.2,339.6 L1852.8,338.6 L1852.9,337.5 L1853.0,336.4 L1852.0,335.5 L1853.0,334.2 L1854.1,333.1 L1853.6,332.1 L1851.4,331.2 L1851.9,330.1 L1851.5,329.0 L1863.3,329.0 L1865.3,329.7 L1866.3,330.4 L1865.8,331.1 L1866.6,331.8 L1866.8,332.5 L1867.0,333.1 L1866.3,334.0 L1865.1,335.0 L1866.8,335.3 L1866.3,336.2 L1868.5,336.3 L1868.6,337.0 L1867.9,337.9 L1867.2,339.0 L1869.8,338.7 L1868.5,340.0 L1868.6,340.7 L1868.9,341.4 L1870.7,341.2 L1870.6,342.0 L1872.2,341.9 L1871.4,343.1 L1871.4,344.0 L1872.5,344.0 L1873.4,344.2 L1873.2,345.2 L1874.5,344.9 L1875.2,345.2 L1876.5,344.9 L1877.1,345.1 L1875.7,347.3 L1876.9,347.1 L1877.5,347.3 L1877.5,348.2 L1878.5,348.1 L1879.7,347.6 L1880.2,347.9 L1880.8,348.1 L1881.9,347.5 L1882.1,348.2 L1882.3,348.9 L1883.1,348.8 L1883.5,349.2 L1884.5,348.4Z" fill="#b3effc" fill-opacity="1"/><path d="M1852.5,310.5 L1852.8,309.9 L1853.2,309.3 L1853.1,308.4 L1855.8,309.0 L1856.1,308.4 L1854.9,306.9 L1854.6,305.9 L1857.0,306.5 L1855.4,304.7 L1858.3,305.8 L1856.9,304.0 L1859.3,304.8 L1858.4,303.3 L1858.3,302.3 L1858.3,301.4 L1859.1,301.2 L1861.8,302.5 L1859.9,300.0 L1862.5,301.4 L1861.9,299.9 L1861.9,299.0 L1862.6,298.7 L1863.4,298.5 L1865.4,299.5 L1865.6,298.8 L1865.2,297.5 L1866.9,298.4 L1865.6,295.8 L1866.9,296.3 L1868.7,297.5 L1867.7,295.1 L1868.2,294.6 L1869.4,295.1 L1871.0,296.2 L1870.3,294.1 L1870.7,293.4 L1872.3,294.8 L1872.5,293.8 L1873.4,294.0 L1873.8,293.5 L1875.0,294.3 L1875.4,293.7 L1875.8,293.1 L1875.7,291.5 L1881.7,303.8 L1881.0,303.4 L1880.3,303.0 L1879.4,302.4 L1879.1,302.7 L1880.0,305.3 L1878.8,304.2 L1878.8,305.0 L1878.7,305.7 L1878.9,306.8 L1877.4,305.4 L1878.0,307.0 L1878.0,307.7 L1876.3,306.1 L1876.2,306.8 L1877.4,309.0 L1877.2,309.4 L1875.8,308.4 L1875.0,308.2 L1876.4,310.3 L1874.9,309.4 L1875.7,310.8 L1874.8,310.4 L1874.4,310.6 L1875.4,312.2 L1874.4,311.8 L1875.0,312.9 L1875.3,313.6 L1874.9,313.8 L1874.3,313.8 L1873.8,313.9 L1874.5,315.0 L1873.7,314.8 L1873.5,315.1 L1874.9,316.6 L1873.9,316.3 L1874.7,317.3 L1874.4,317.5 L1873.6,317.5 L1874.8,318.6 L1874.8,319.0 L1872.8,318.3 L1874.3,319.5 L1872.3,318.9 L1874.2,320.2Z" fill="#b3effc" fill-opacity="1"/><path d="M1254.0,444.5 L1255.3,444.8 L1256.5,445.7 L1257.4,449.2 L1259.0,446.0 L1259.4,451.5 L1260.5,451.5 L1263.1,444.3 L1264.5,444.3 L1264.1,451.0 L1266.0,448.4 L1267.1,449.0 L1268.0,450.1 L1269.5,449.6 L1269.0,453.8 L1269.8,454.8 L1270.7,455.4 L1272.1,455.0 L1275.3,451.6 L1273.8,456.6 L1278.3,451.6 L1276.1,457.0 L1276.5,458.3 L1277.0,459.5 L1278.3,459.6 L1284.0,454.8 L1282.1,458.8 L1282.2,460.3 L1286.5,457.9 L1287.5,458.7 L1287.4,460.5 L1284.9,464.1 L1285.8,464.9 L1284.8,467.0 L1290.5,464.5 L1288.5,467.3 L1292.7,466.1 L1287.8,470.3 L1293.0,468.9 L1288.8,472.3 L1292.0,472.1 L1296.8,471.4 L1289.2,475.7 L1292.3,475.8 L1296.5,475.7 L1294.2,477.7 L1294.6,478.8 L1297.6,479.4 L1299.3,480.4 L1292.8,482.8 L1299.2,483.1 L1296.4,484.7 L1296.2,485.9 L1293.3,487.3 L1297.5,488.3 L1298.3,489.6 L1296.6,490.8 L1293.8,491.8 L1300.2,493.6 L1297.3,494.6 L1298.1,496.0 L1299.3,497.5 L1294.3,497.8 L1297.7,499.8 L1293.8,500.1 L1294.0,501.4 L1292.0,502.0 L1292.2,503.3 L1292.4,504.7 L1292.8,506.1 L1292.3,507.3 L1293.8,509.4 L1292.3,510.0 L1294.2,512.6 L1289.3,511.1 L1288.7,512.2 L1288.5,513.5 L1289.1,515.5 L1289.3,517.3 L1287.8,517.7 L1284.1,516.1 L1284.3,517.9 L1286.0,521.4 L1283.0,520.0 L1283.9,522.9 L1281.9,522.5 L1278.2,519.8 L1281.1,525.7 L1278.3,523.9 L1276.3,523.1 L1278.3,528.7 L1276.8,528.7 L1274.6,527.5 L1272.9,526.8 L1270.7,525.0 L1269.5,525.1 L1269.2,527.4 L1268.9,530.1 L1267.6,530.2 L1265.0,525.9 L1264.2,526.9 L1264.8,534.6 L1263.5,535.1 L1260.9,527.9 L1260.9,535.7 L1259.6,535.9 L1257.9,533.2 L1256.7,533.8 L1255.4,534.8 L1254.1,536.2 L1252.8,535.1 L1251.5,533.9 L1250.5,530.4 L1249.5,529.1 L1247.3,536.1 L1247.1,529.4 L1245.6,530.5 L1244.0,532.0 L1243.2,530.3 L1242.9,526.9 L1240.6,530.3 L1238.3,532.9 L1237.0,532.6 L1238.5,525.5 L1237.3,525.4 L1233.4,530.7 L1235.1,524.6 L1232.6,526.7 L1229.9,528.8 L1232.1,522.9 L1228.0,526.9 L1226.6,526.5 L1225.3,526.0 L1225.1,524.1 L1227.5,519.4 L1223.5,522.0 L1220.8,522.9 L1222.7,519.1 L1222.2,517.9 L1224.2,514.6 L1219.1,517.2 L1219.3,515.5 L1217.8,515.0 L1214.5,515.7 L1215.6,513.4 L1219.9,509.3 L1215.6,510.4 L1214.3,509.6 L1214.9,507.9 L1214.3,506.8 L1211.4,506.6 L1215.3,503.7 L1211.8,503.7 L1212.0,502.3 L1208.8,501.9 L1210.4,500.1 L1213.5,498.0 L1208.6,497.8 L1212.2,495.8 L1210.4,494.9 L1208.3,493.8 L1206.9,492.6 L1207.3,491.2 L1211.4,489.8 L1214.1,488.6 L1210.4,487.3 L1210.0,486.0 L1213.2,485.0 L1212.6,483.8 L1213.5,482.7 L1208.3,480.5 L1212.5,480.1 L1207.7,477.6 L1212.2,477.5 L1213.4,476.5 L1213.8,475.4 L1211.6,473.2 L1210.7,471.5 L1216.8,472.7 L1210.0,468.2 L1216.5,469.9 L1212.3,466.2 L1214.3,465.8 L1216.1,465.4 L1215.3,463.3 L1218.9,464.2 L1217.9,461.9 L1220.5,462.3 L1217.3,458.0 L1221.8,460.2 L1220.9,457.6 L1225.3,460.1 L1223.5,456.5 L1223.1,454.1 L1222.9,451.8 L1227.1,454.9 L1229.1,455.5 L1227.4,451.0 L1230.1,452.6 L1229.0,448.5 L1233.9,454.2 L1244.1,471.8 L1243.8,472.4 L1242.5,471.4 L1242.6,472.7 L1240.5,470.8 L1240.5,471.9 L1239.8,472.0 L1238.9,472.0 L1239.9,473.9 L1239.9,474.8 L1237.7,473.5 L1239.8,476.2 L1236.5,474.2 L1238.2,476.4 L1237.2,476.4 L1235.3,475.8 L1237.9,478.3 L1237.3,478.6 L1234.3,477.5 L1236.4,479.4 L1234.7,479.1 L1233.9,479.5 L1233.1,479.8 L1233.9,480.9 L1232.9,481.2 L1234.6,482.4 L1235.3,483.3 L1234.9,483.7 L1235.4,484.4 L1233.2,484.5 L1235.0,485.5 L1233.2,485.8 L1232.4,486.3 L1234.2,487.1 L1234.5,487.7 L1231.9,488.1 L1232.2,488.8 L1233.3,489.4 L1234.9,489.9 L1234.2,490.5 L1232.3,491.3 L1233.7,491.7 L1233.8,492.3 L1234.0,492.9 L1232.0,493.9 L1232.9,494.4 L1232.2,495.2 L1234.8,495.1 L1234.2,495.9 L1235.4,496.1 L1236.1,496.4 L1235.5,497.3 L1234.6,498.4 L1236.7,498.0 L1234.4,499.9 L1235.9,499.8 L1236.4,500.1 L1237.9,499.9 L1237.1,501.1 L1238.4,500.9 L1238.8,501.3 L1238.9,502.0 L1238.4,503.2 L1240.0,502.5 L1239.1,504.2 L1241.1,503.0 L1240.3,504.7 L1241.1,504.7 L1241.5,505.2 L1240.7,507.2 L1241.5,507.2 L1242.7,506.5 L1243.0,507.2 L1244.3,506.1 L1243.5,508.9 L1244.8,507.7 L1246.0,506.5 L1245.8,508.5 L1246.7,507.7 L1246.9,508.8 L1247.9,507.9 L1247.8,510.2 L1249.1,507.6 L1249.7,507.7 L1250.2,508.1 L1250.7,508.0 L1251.1,509.2 L1251.5,511.2 L1252.4,508.5 L1252.8,510.5 L1253.4,511.6 L1254.1,511.7 L1254.7,511.4 L1255.4,511.6 L1255.8,508.9 L1256.7,511.6 L1257.1,510.1 L1258.0,511.4 L1257.9,508.1 L1258.6,508.5 L1259.9,511.0 L1260.4,510.5 L1260.9,509.7 L1260.6,507.1 L1261.5,508.0 L1263.1,510.1 L1263.2,508.8 L1263.3,507.6 L1264.0,507.7 L1264.5,507.2 L1265.2,507.3 L1266.2,507.7 L1265.4,505.5 L1265.9,505.1 L1266.5,505.0 L1267.4,505.1 L1268.9,505.9 L1267.2,503.1 L1268.3,503.4 L1269.3,503.5 L1268.9,502.4 L1270.8,503.2 L1270.6,502.3 L1270.1,501.1 L1270.6,500.8 L1272.9,501.6 L1272.3,500.5 L1271.7,499.4 L1273.4,499.6 L1274.0,499.2 L1273.5,498.3 L1274.9,498.3 L1271.6,496.2 L1272.5,495.9 L1274.1,495.9 L1272.2,494.7 L1273.6,494.5 L1274.9,494.2 L1274.3,493.4 L1274.9,492.9 L1274.2,492.2 L1276.6,491.9 L1275.1,491.1 L1275.9,490.5 L1276.5,489.9 L1273.2,489.3 L1275.3,488.7 L1273.3,488.1 L1276.0,487.4 L1274.6,486.9 L1274.1,486.4 L1273.9,485.8 L1274.5,485.1 L1274.4,484.5 L1272.7,484.3 L1272.4,483.8 L1273.4,482.9 L1275.3,481.7 L1272.1,482.1 L1272.8,481.3 L1273.0,480.5 L1272.4,480.1 L1273.2,479.1 L1272.0,479.0 L1272.6,478.0 L1270.8,478.4 L1270.9,477.6 L1271.7,476.3 L1272.1,475.3 L1269.1,476.8 L1269.9,475.4 L1269.3,475.1 L1268.3,475.3 L1267.4,475.4 L1267.9,474.0 L1268.0,473.1 L1266.4,474.0 L1267.7,471.4 L1267.4,470.8 L1266.7,470.6 L1265.3,471.6 L1264.4,472.0 L1264.0,471.5 L1264.1,470.0 L1263.0,471.0 L1263.5,468.4 L1262.2,469.7 L1261.5,469.8 L1261.1,469.4 L1260.7,468.6 L1260.2,468.2 L1259.2,469.6 L1259.0,467.9 L1258.3,468.1 L1257.7,467.7 L1257.1,467.8 L1256.4,468.2 L1255.9,466.7 L1255.3,467.3 L1254.6,467.1 L1254.0,467.1Z" fill="#dcd3fb" fill-opacity="1"/><path d="M1241.58,442.64 L1243.45,448.20 L1244.25,449.91 L1244.18,448.12 L1244.22,446.63 L1245.00,448.40 L1245.66,449.78 L1247.10,455.09 L1247.21,454.08 L1246.17,446.76 L1247.18,450.33 L1248.16,454.12 L1248.10,451.75 L1247.90,448.18 L1248.35,448.77 L1248.72,448.92 L1248.97,448.07 L1250.06,454.42 L1250.25,453.27 L1250.32,450.80 L1250.75,451.80 L1251.17,453.03 L1251.37,451.34 L1251.97,455.82 L1252.10,452.72 L1252.56,455.91 L1252.81,455.00 L1253.10,454.51 L1253.45,457.65 L1253.73,458.28 L1254.00,459.00 L1254.00,459.00 L1253.74,459.46 L1253.50,460.63 L1253.27,461.00 L1252.99,460.06 L1252.81,461.70 L1252.55,461.40 L1252.33,461.63 L1252.10,461.88 L1251.76,460.52 L1251.58,461.37 L1251.28,460.71 L1251.18,462.13 L1250.99,462.59 L1250.72,462.31 L1250.80,464.69 L1250.20,461.98 L1249.88,461.43 L1250.04,464.01 L1250.02,465.20 L1249.33,462.52 L1249.85,466.62 L1249.26,464.61 L1248.91,463.99 L1248.55,463.38 L1248.06,462.19 L1247.92,462.68 L1248.29,465.23 L1248.16,465.59 L1248.11,466.21 L1248.56,468.72Z" fill="#dcd3fb"/><circle cx="1574" cy="489" r="32" fill="none" stroke="#dcd3fb" stroke-width="1.6" stroke-opacity="1"/><path d="M1584.74,457.80 L1585.84,456.61 L1588.09,452.56 L1591.32,446.59 L1591.57,448.17 L1592.68,447.75 L1592.48,450.14 L1592.77,451.35 L1592.79,453.01 L1592.68,454.80 L1592.89,455.90 L1593.07,456.99 L1592.95,458.51 L1592.76,460.04 L1592.45,461.64 L1592.45,461.64 L1591.49,462.00 L1590.46,462.51 L1589.53,462.94 L1588.86,462.96 L1588.06,463.26 L1587.18,463.77 L1586.29,464.35 L1585.33,465.17 L1585.09,464.50 L1584.30,465.06 L1583.27,466.29 L1584.63,461.50 L1585.03,458.80 L1584.74,457.80Z" fill="#dcd3fb"/><path d="M1558.00,517.86 L1556.53,519.09 L1553.16,523.30 L1548.70,528.82 L1549.23,526.32 L1548.79,525.39 L1548.65,524.07 L1548.30,523.11 L1548.64,521.30 L1548.54,520.12 L1548.91,518.45 L1549.05,517.13 L1549.44,515.60 L1549.93,514.05 L1550.67,512.33 L1550.67,512.33 L1551.86,512.04 L1552.95,511.80 L1553.88,511.68 L1555.05,511.24 L1555.90,511.12 L1556.49,511.29 L1557.75,510.56 L1558.10,511.00 L1559.53,509.88 L1560.29,509.67 L1560.88,509.65 L1558.92,513.82 L1557.96,516.63 L1558.00,517.86Z" fill="#dcd3fb"/><path d="M1591.00,460.71 L1592.17,459.99 L1594.85,457.07 L1599.95,450.84 L1599.98,452.29 L1599.28,454.66 L1599.98,455.06 L1599.68,456.71 L1599.26,458.43 L1599.76,458.99 L1599.18,460.75 L1599.15,461.82 L1598.62,463.38 L1598.37,464.57 L1597.74,466.08 L1597.74,466.08 L1596.69,466.25 L1595.72,466.40 L1594.66,466.67 L1593.61,467.00 L1593.01,466.86 L1592.21,466.96 L1591.51,466.99 L1590.37,467.61 L1589.72,467.64 L1588.96,467.87 L1587.75,468.77 L1590.18,464.22 L1591.12,461.69 L1591.00,460.71Z" fill="#dcd3fb"/><path d="M1551.92,513.52 L1550.44,514.14 L1546.73,516.96 L1541.92,520.60 L1540.35,520.85 L1540.91,519.09 L1540.91,517.91 L1542.32,515.59 L1542.61,514.29 L1542.41,513.43 L1542.91,512.07 L1543.42,510.76 L1544.28,509.26 L1545.02,507.92 L1546.01,506.49 L1546.01,506.49 L1547.13,506.54 L1548.17,506.61 L1549.23,506.62 L1550.40,506.51 L1551.30,506.56 L1551.98,506.74 L1553.42,506.27 L1553.75,506.69 L1554.49,506.75 L1555.21,506.78 L1556.48,506.26 L1553.99,509.51 L1552.18,512.28 L1551.92,513.52Z" fill="#dcd3fb"/><path d="M1596.51,464.87 L1597.83,464.38 L1600.68,462.46 L1606.73,457.62 L1605.76,459.68 L1606.09,460.47 L1606.04,461.57 L1605.27,463.22 L1605.32,464.15 L1605.37,465.05 L1604.51,466.60 L1604.14,467.73 L1603.32,469.12 L1602.84,470.22 L1601.99,471.51 L1601.99,471.51 L1600.81,471.54 L1600.04,471.34 L1599.15,471.25 L1598.27,471.18 L1597.04,471.42 L1596.52,471.13 L1595.09,471.61 L1594.04,471.84 L1593.35,471.79 L1592.45,471.97 L1591.79,471.95 L1595.27,467.83 L1596.34,465.92 L1596.51,464.87Z" fill="#dcd3fb"/><path d="M1546.97,507.93 L1545.23,508.30 L1541.03,510.18 L1535.49,512.67 L1535.43,511.65 L1535.29,510.71 L1537.02,508.78 L1537.68,507.51 L1537.02,506.92 L1538.99,505.11 L1539.39,504.10 L1540.03,503.02 L1540.99,501.86 L1541.63,500.87 L1542.80,499.74 L1542.80,499.74 L1543.91,500.04 L1545.03,500.29 L1546.18,500.48 L1546.89,500.83 L1548.04,500.95 L1548.65,501.29 L1549.24,501.62 L1551.11,501.25 L1552.22,501.21 L1552.97,501.35 L1552.55,502.18 L1549.61,504.67 L1547.38,506.86 L1546.97,507.93Z" fill="#dcd3fb"/><path d="M1601.03,470.07 L1602.26,469.99 L1605.85,468.43 L1611.59,465.71 L1610.94,467.06 L1610.63,468.16 L1610.82,468.95 L1609.54,470.50 L1609.59,471.31 L1608.42,472.69 L1608.52,473.42 L1607.76,474.52 L1606.94,475.59 L1606.01,476.67 L1605.01,477.71 L1605.01,477.71 L1603.96,477.46 L1603.04,477.18 L1602.05,476.97 L1601.13,476.76 L1600.24,476.56 L1599.04,476.55 L1598.89,476.04 L1597.43,476.24 L1597.00,475.91 L1595.81,476.04 L1595.41,475.73 L1598.66,473.07 L1600.76,471.00 L1601.03,470.07Z" fill="#dcd3fb"/><path d="M1543.40,501.36 L1541.84,501.25 L1538.16,501.84 L1531.01,503.44 L1531.34,502.39 L1532.58,501.10 L1533.94,499.84 L1534.02,498.97 L1535.19,497.86 L1536.59,496.76 L1537.27,495.85 L1537.75,495.02 L1538.84,494.12 L1540.04,493.26 L1541.18,492.45 L1541.18,492.45 L1542.20,492.98 L1543.15,493.49 L1544.02,493.98 L1545.19,494.38 L1546.02,494.80 L1546.49,495.28 L1547.56,495.59 L1548.62,495.87 L1549.39,496.19 L1550.72,496.31 L1551.71,496.49 L1547.27,498.58 L1544.09,500.40 L1543.40,501.36Z" fill="#dcd3fb"/><path d="M1604.38,476.11 L1605.53,476.31 L1609.30,475.55 L1614.49,474.43 L1614.42,475.31 L1614.02,476.27 L1613.33,477.30 L1613.12,478.15 L1611.36,479.39 L1611.22,480.16 L1610.04,481.15 L1609.44,481.97 L1608.86,482.76 L1607.68,483.62 L1606.68,484.41 L1606.68,484.41 L1605.67,483.94 L1604.71,483.51 L1604.13,483.03 L1602.99,482.69 L1602.37,482.26 L1601.23,481.99 L1600.58,481.63 L1599.94,481.28 L1598.90,481.08 L1597.93,480.89 L1597.32,480.61 L1601.84,478.39 L1603.85,476.98 L1604.38,476.11Z" fill="#dcd3fb"/><path d="M1541.41,494.16 L1539.90,493.71 L1535.53,493.53 L1530.61,493.23 L1531.72,492.27 L1531.79,491.42 L1532.22,490.56 L1532.96,489.72 L1534.60,488.90 L1535.42,488.13 L1536.66,487.42 L1537.24,486.71 L1538.85,486.10 L1540.01,485.51 L1541.25,484.98 L1541.25,484.98 L1542.14,485.73 L1543.12,486.45 L1543.70,487.11 L1544.70,487.76 L1545.29,488.36 L1545.66,488.93 L1546.25,489.48 L1547.43,489.99 L1547.96,490.49 L1549.15,490.92 L1549.93,491.35 L1545.67,492.33 L1542.31,493.37 L1541.41,494.16Z" fill="#dcd3fb"/><path d="M1606.39,482.70 L1607.52,483.13 L1611.00,483.23 L1617.02,483.12 L1615.51,484.11 L1614.04,485.04 L1613.84,485.81 L1614.12,486.55 L1612.34,487.37 L1611.51,488.11 L1610.82,488.82 L1609.88,489.49 L1609.04,490.14 L1608.13,490.75 L1606.92,491.30 L1606.92,491.30 L1605.95,490.63 L1605.34,490.02 L1604.54,489.42 L1603.74,488.85 L1603.05,488.31 L1602.81,487.78 L1601.67,487.31 L1600.80,486.86 L1600.69,486.36 L1599.04,486.05 L1598.07,485.71 L1603.11,484.46 L1605.74,483.44 L1606.39,482.70Z" fill="#dcd3fb"/><path d="M1541.08,486.70 L1539.85,485.93 L1535.67,484.78 L1531.52,483.46 L1532.05,482.68 L1533.03,481.99 L1533.09,481.15 L1535.25,480.76 L1535.74,480.07 L1536.93,479.56 L1537.96,479.05 L1539.54,478.75 L1540.56,478.32 L1541.67,477.96 L1542.99,477.71 L1542.99,477.71 L1543.79,478.68 L1544.40,479.54 L1544.71,480.28 L1545.28,481.07 L1546.03,481.88 L1546.91,482.67 L1547.61,483.39 L1548.62,484.13 L1548.46,484.63 L1548.49,485.15 L1549.59,485.82 L1544.99,485.80 L1542.12,486.13 L1541.08,486.70Z" fill="#dcd3fb"/><circle cx="1734" cy="489" r="34" fill="none" stroke="#dcd3fb" stroke-width="1.4" stroke-opacity="1"/><path d="M1734.0,455.0 L1734.8,454.1 L1735.7,453.2 L1736.6,453.5 L1737.6,451.9 L1738.6,451.5 L1739.3,453.0 L1740.2,452.4 L1741.2,452.1 L1742.0,452.8 L1742.9,453.1 L1744.0,452.4 L1744.7,453.1 L1745.4,453.8 L1746.4,453.7 L1747.4,453.7 L1748.0,454.6 L1749.0,454.5 L1750.0,454.6 L1750.5,455.7 L1750.8,457.0 L1751.5,457.5 L1752.1,458.2 L1752.3,459.5 L1753.0,460.0 L1754.1,459.9 L1754.8,460.4 L1756.0,460.2 L1756.8,460.6 L1757.4,461.3 L1758.4,461.4 L1759.5,461.6 L1759.5,462.9 L1761.0,462.7 L1761.3,463.6 L1762.4,463.9 L1762.0,465.4 L1762.8,465.9 L1763.7,466.3 L1763.4,467.6 L1764.7,467.8 L1764.2,469.2 L1765.3,469.6 L1765.2,470.6 L1765.0,471.8 L1765.4,472.5 L1765.5,473.4 L1765.3,474.5 L1765.8,475.2 L1766.8,475.7 L1767.0,476.5 L1768.1,477.0 L1767.9,478.0 L1768.3,478.8 L1769.6,479.3 L1769.4,480.3 L1769.3,481.2 L1770.1,481.9 L1771.0,482.7 L1770.8,483.6 L1770.4,484.6 L1770.1,485.5 L1770.7,486.3 L1770.1,487.3 L1770.4,488.1 L1770.6,489.0 L1770.5,489.9 L1769.8,490.7 L1769.3,491.6 L1769.2,492.4 L1768.4,493.2 L1767.8,493.9 L1768.3,494.9 L1768.7,495.8 L1768.4,496.6 L1768.7,497.5 L1769.6,498.7 L1768.4,499.3 L1768.7,500.3 L1768.7,501.2 L1768.9,502.3 L1768.2,502.9 L1767.8,503.7 L1767.9,504.8 L1767.4,505.5 L1766.9,506.2 L1766.8,507.2 L1765.6,507.6 L1765.5,508.6 L1764.7,509.1 L1763.4,509.3 L1762.8,509.9 L1762.4,510.7 L1761.3,511.0 L1760.5,511.3 L1760.1,512.2 L1760.3,513.5 L1759.4,513.8 L1759.1,514.7 L1758.6,515.4 L1759.2,517.5 L1758.4,517.9 L1757.6,518.4 L1756.5,518.4 L1755.7,518.8 L1755.8,520.6 L1754.4,520.1 L1754.2,521.5 L1753.0,521.2 L1752.8,522.9 L1751.7,522.7 L1750.9,523.3 L1749.5,522.4 L1748.7,522.6 L1747.8,522.8 L1746.8,522.7 L1745.9,522.7 L1744.8,522.3 L1743.9,522.1 L1743.2,522.9 L1742.6,523.9 L1741.7,523.7 L1740.9,524.1 L1740.1,524.9 L1739.3,525.4 L1738.6,526.6 L1737.6,525.7 L1736.7,526.5 L1735.8,527.2 L1734.9,526.0 L1734.0,526.2 L1733.1,526.6 L1732.1,527.5 L1731.2,527.4 L1730.3,527.0 L1729.5,526.2 L1728.6,526.2 L1727.7,526.0 L1726.9,525.3 L1726.1,524.6 L1725.5,523.4 L1724.7,523.0 L1724.2,521.9 L1723.3,522.1 L1722.3,522.2 L1721.3,522.4 L1720.5,522.1 L1719.6,522.1 L1718.7,522.0 L1718.1,521.1 L1717.3,520.9 L1716.5,520.4 L1715.7,520.0 L1714.9,519.8 L1713.8,519.8 L1712.9,519.5 L1712.5,518.6 L1711.8,518.0 L1711.4,517.1 L1711.0,516.3 L1710.1,516.0 L1709.8,515.1 L1709.2,514.4 L1708.6,513.8 L1708.3,512.9 L1708.2,511.9 L1707.1,511.7 L1706.2,511.3 L1704.7,511.4 L1704.7,510.3 L1703.8,509.8 L1703.3,509.1 L1701.7,509.1 L1700.3,508.8 L1699.8,508.0 L1700.7,506.5 L1699.5,506.1 L1698.7,505.4 L1698.6,504.4 L1698.8,503.3 L1697.4,502.9 L1698.8,501.4 L1698.7,500.5 L1697.1,500.0 L1697.6,498.9 L1697.1,498.1 L1698.5,496.8 L1698.8,495.9 L1698.8,495.0 L1700.0,494.0 L1698.6,493.3 L1698.2,492.5 L1697.6,491.6 L1696.9,490.8 L1697.3,489.9 L1696.0,489.0 L1695.1,488.1 L1696.3,487.2 L1694.8,486.2 L1694.4,485.2 L1695.3,484.3 L1695.2,483.3 L1696.0,482.5 L1695.0,481.4 L1697.6,480.9 L1695.6,479.5 L1698.2,479.3 L1697.8,478.2 L1698.6,477.5 L1699.6,476.9 L1700.1,476.1 L1700.4,475.3 L1701.6,474.9 L1702.7,474.4 L1702.2,473.3 L1702.5,472.5 L1702.3,471.4 L1702.3,470.4 L1703.1,469.8 L1703.0,468.7 L1703.0,467.6 L1704.2,467.4 L1704.7,466.6 L1704.6,465.4 L1705.1,464.6 L1706.3,464.5 L1706.5,463.5 L1707.0,462.7 L1708.1,462.5 L1709.3,462.5 L1709.9,461.8 L1710.5,461.2 L1711.6,461.1 L1712.3,460.7 L1713.1,460.2 L1714.0,460.0 L1715.1,460.1 L1715.5,459.1 L1715.7,457.9 L1716.4,457.3 L1717.1,456.7 L1717.4,455.3 L1718.3,455.2 L1719.2,454.9 L1720.0,454.5 L1720.4,453.0 L1721.0,452.0 L1721.8,451.5 L1722.7,451.1 L1723.7,451.2 L1725.0,452.6 L1725.7,451.4 L1726.4,450.3 L1727.4,450.4 L1728.5,451.3 L1729.4,450.8 L1730.4,452.0 L1731.3,452.4 L1732.2,452.8 L1733.1,453.5 L1734.0,455.0 L1734.0,455.0 L1733.2,456.5 L1732.5,457.1 L1731.7,457.3 L1730.9,457.4 L1730.3,458.7 L1729.8,460.1 L1729.1,460.5 L1728.2,459.6 L1727.7,460.4 L1726.7,459.4 L1726.2,460.4 L1725.4,460.3 L1725.2,462.0 L1724.6,462.3 L1723.3,460.7 L1722.8,461.4 L1722.2,461.9 L1721.6,462.2 L1720.4,461.6 L1719.2,460.8 L1718.5,461.2 L1717.7,461.3 L1716.7,461.1 L1715.7,461.0 L1715.2,461.7 L1715.0,462.9 L1714.4,463.4 L1714.3,464.5 L1713.8,465.1 L1713.1,465.5 L1712.8,466.3 L1712.3,466.7 L1712.3,467.8 L1711.8,468.4 L1711.3,468.9 L1709.8,468.6 L1709.1,469.0 L1709.6,470.4 L1709.1,470.9 L1708.1,471.1 L1707.4,471.6 L1706.7,472.0 L1706.4,472.8 L1705.5,473.2 L1705.3,473.9 L1704.5,474.4 L1703.6,474.9 L1703.6,475.7 L1704.6,477.0 L1704.1,477.7 L1704.0,478.5 L1704.5,479.4 L1704.5,480.2 L1704.2,480.9 L1705.5,482.0 L1705.9,482.8 L1704.6,483.2 L1704.0,483.9 L1705.8,484.9 L1703.8,485.3 L1703.8,486.1 L1703.7,486.8 L1704.2,487.6 L1703.8,488.3 L1702.6,489.0 L1702.6,489.8 L1703.5,490.5 L1703.0,491.3 L1702.3,492.1 L1701.2,493.0 L1700.6,493.9 L1701.5,494.6 L1702.4,495.2 L1703.7,495.7 L1704.1,496.4 L1703.7,497.2 L1705.4,497.5 L1704.6,498.6 L1706.3,498.7 L1706.2,499.5 L1707.2,499.9 L1706.9,500.8 L1707.6,501.3 L1707.0,502.4 L1707.4,503.0 L1708.5,503.2 L1707.9,504.4 L1708.4,504.9 L1708.7,505.6 L1708.2,506.8 L1709.0,507.2 L1708.3,508.6 L1708.9,509.1 L1708.9,510.2 L1709.0,511.2 L1709.7,511.6 L1710.6,511.9 L1711.3,512.2 L1712.0,512.7 L1713.0,512.7 L1713.5,513.3 L1714.4,513.4 L1715.0,513.9 L1715.4,514.7 L1716.3,514.6 L1716.3,516.0 L1717.5,515.5 L1718.3,515.7 L1718.7,516.5 L1719.4,516.7 L1719.6,518.1 L1720.7,517.6 L1721.0,518.9 L1721.9,518.8 L1722.5,519.4 L1723.2,519.8 L1723.7,520.7 L1724.4,521.3 L1725.3,521.0 L1726.3,520.2 L1727.2,519.9 L1727.8,520.7 L1728.6,520.6 L1729.6,519.2 L1730.2,520.4 L1731.1,518.9 L1731.8,518.8 L1732.5,519.5 L1733.3,519.7 L1734.0,519.1 L1734.7,519.6 L1735.5,519.8 L1736.3,520.2 L1737.0,519.7 L1737.6,518.9 L1738.5,519.9 L1739.3,519.9 L1740.1,520.1 L1741.0,520.8 L1741.8,520.7 L1742.6,520.7 L1743.6,521.2 L1744.2,520.5 L1744.8,519.6 L1745.4,518.9 L1746.1,518.7 L1746.6,518.0 L1746.9,516.8 L1747.9,517.1 L1748.4,516.4 L1748.7,515.5 L1748.9,514.4 L1749.8,514.5 L1750.1,513.6 L1751.6,514.4 L1751.9,513.6 L1753.0,513.8 L1753.4,513.2 L1754.0,512.7 L1755.0,512.7 L1755.2,511.7 L1756.4,512.0 L1757.3,511.7 L1758.1,511.4 L1758.9,511.1 L1759.5,510.5 L1759.5,509.5 L1759.9,508.8 L1760.0,507.9 L1760.1,507.0 L1760.7,506.5 L1760.4,505.4 L1761.8,505.3 L1761.9,504.5 L1762.4,503.9 L1761.4,502.5 L1762.1,502.0 L1763.0,501.6 L1763.6,501.1 L1763.3,500.1 L1763.4,499.3 L1763.9,498.7 L1763.9,497.9 L1764.6,497.3 L1765.3,496.7 L1765.4,495.9 L1765.8,495.2 L1766.8,494.6 L1767.5,493.9 L1767.1,493.0 L1766.7,492.2 L1766.1,491.3 L1766.2,490.6 L1766.0,489.8 L1766.4,489.0 L1765.7,488.2 L1765.0,487.5 L1766.1,486.7 L1764.8,486.0 L1764.9,485.2 L1764.3,484.6 L1765.3,483.7 L1764.3,483.1 L1765.1,482.1 L1764.5,481.5 L1765.1,480.5 L1764.3,480.0 L1764.6,479.1 L1764.4,478.3 L1764.4,477.5 L1764.3,476.7 L1764.5,475.7 L1764.4,474.9 L1763.3,474.5 L1762.8,473.9 L1762.2,473.3 L1761.8,472.6 L1760.9,472.3 L1760.5,471.6 L1759.5,471.4 L1759.1,470.8 L1758.7,470.2 L1758.3,469.4 L1757.8,468.9 L1757.1,468.5 L1757.3,467.3 L1756.0,467.6 L1756.1,466.3 L1754.9,466.5 L1754.9,465.4 L1754.2,465.0 L1753.8,464.4 L1753.5,463.5 L1753.2,462.6 L1752.7,461.9 L1752.4,460.9 L1751.6,460.7 L1750.6,460.8 L1749.4,461.3 L1748.8,460.8 L1748.0,460.7 L1746.8,461.4 L1746.6,460.0 L1745.4,461.1 L1745.2,459.6 L1743.8,461.2 L1743.2,460.7 L1742.7,459.9 L1742.0,459.5 L1741.1,460.0 L1740.5,459.5 L1740.0,458.3 L1739.1,459.0 L1738.5,458.4 L1737.7,458.3 L1737.1,457.3 L1736.3,457.5 L1735.6,456.7 L1734.8,455.9 L1734.0,455.0Z" fill="#dcd3fb" fill-opacity="1"/><circle cx="1894" cy="489" r="33" fill="none" stroke="#dcd3fb" stroke-width="1.6" stroke-opacity="1"/><path d="M1909.2,463.7 L1921.2,463.7" stroke="#dcd3fb" stroke-width="1.8" transform="rotate(80 1915.2 463.7)"/><path d="M1906.9,516.0 L1918.9,516.0" stroke="#dcd3fb" stroke-width="1.8" transform="rotate(185 1912.9 516.0)"/><path d="M1869.1,516.0 L1881.1,516.0" stroke="#dcd3fb" stroke-width="1.8" transform="rotate(255 1875.1 516.0)"/><path d="M1866.8,463.7 L1878.8,463.7" stroke="#dcd3fb" stroke-width="1.8" transform="rotate(360 1872.8 463.7)"/><rect x="1923.0" y="491.2" width="7" height="7" rx="1" fill="#dcd3fb" transform="rotate(100 1926.5 494.7)"/><rect x="1884.8" y="518.0" width="7" height="7" rx="1" fill="#dcd3fb" transform="rotate(190 1888.3 521.5)"/></svg>
</div>
<div class="a" style="left:1962px;top:0px;width:82px;height:657px;background:#18181a;"></div>
<div class="a" style="left:1962px;top:393px;width:82px;height:161px;background:#28282b;"></div>
<div class="a" style="left:1962px;top:73px;width:82px;height:1px;background:#2c2c2f;"></div>
<div class="a" style="left:1962px;top:233px;width:82px;height:1px;background:#2c2c2f;"></div>
<div class="a" style="left:1962px;top:393px;width:82px;height:1px;background:#2c2c2f;"></div>
<div class="a" style="left:1962px;top:553px;width:82px;height:1px;background:#2c2c2f;"></div>
<div class="a" style="left:1992px;top:141.5px;width:27px;height:27px;background:#ffffff;border-radius:4px;"></div>
<div class="a" style="left:1992px;top:301.5px;width:27px;height:27px;background:#ffffff;border-radius:4px;"></div>
<div class="a" style="left:1992px;top:461.5px;width:27px;height:27px;background:#ffffff;border-radius:4px;"></div>
<div class="a" style="left:1992px;top:600.5px;width:27px;height:27px;background:#ffffff;border-radius:4px;"></div>
<div class="a" style="left:2044px;top:0px;width:4px;height:657px;background:#4b5560;"></div>
<svg style="left:1980px;top:0px" width="50" height="12" viewBox="1980 0 50 12"><path d="M1984,-6 L2001.5,3.8 L2001.5,-12" fill="none" stroke="#fff" stroke-width="2.2" stroke-linejoin="round"/><path d="M2008.5,-12 L2008.5,3 Q2008.5,5.2 2010.5,4.2 L2022,-2.5 L2022,-12Z" fill="#fff"/></svg>
<div class="a" style="left:1015px;top:569px;width:947px;height:84px;background:#382840;"></div>
<div class="a" style="left:1015px;top:569px;width:160px;height:84px;background:#45364e;"></div>
<div class="a" style="left:1175px;top:569px;width:1px;height:84px;background:#4f3f5b;"></div>
<div class="a" style="left:1335px;top:569px;width:1px;height:84px;background:#4f3f5b;"></div>
<div class="a" style="left:1495px;top:569px;width:1px;height:84px;background:#4f3f5b;"></div>
<div class="a" style="left:1655px;top:569px;width:1px;height:84px;background:#4f3f5b;"></div>
<div class="a" style="left:1815px;top:569px;width:1px;height:84px;background:#4f3f5b;"></div>
<svg style="left:1077px;top:582px" width="34" height="18" viewBox="0 0 34 18"><path d="M3,14.5 L17,5.5 L31,14.5" fill="none" stroke="#fff" stroke-width="3.6" stroke-linecap="round" stroke-linejoin="round"/></svg>
<svg class="tx" width="1" height="1"><text x="1094.00" y="642.00" font-size="22.5" fill="#ffffff" text-anchor="middle">1</text></svg>
<svg style="left:1237px;top:582px" width="34" height="18" viewBox="0 0 34 18"><path d="M3,14.5 L17,5.5 L31,14.5" fill="none" stroke="#fff" stroke-width="3.6" stroke-linecap="round" stroke-linejoin="round"/></svg>
<svg class="tx" width="1" height="1"><text x="1254.00" y="642.00" font-size="22.5" fill="#ffffff" text-anchor="middle">2</text></svg>
<svg style="left:1397px;top:582px" width="34" height="18" viewBox="0 0 34 18"><path d="M3,14.5 L17,5.5 L31,14.5" fill="none" stroke="#fff" stroke-width="3.6" stroke-linecap="round" stroke-linejoin="round"/></svg>
<svg class="tx" width="1" height="1"><text x="1414.00" y="642.00" font-size="22.5" fill="#ffffff" text-anchor="middle">3</text></svg>
<svg style="left:1557px;top:582px" width="34" height="18" viewBox="0 0 34 18"><path d="M3,14.5 L17,5.5 L31,14.5" fill="none" stroke="#fff" stroke-width="3.6" stroke-linecap="round" stroke-linejoin="round"/></svg>
<svg class="tx" width="1" height="1"><text x="1574.00" y="642.00" font-size="22.5" fill="#ffffff" text-anchor="middle">4</text></svg>
<svg style="left:1717px;top:582px" width="34" height="18" viewBox="0 0 34 18"><path d="M3,14.5 L17,5.5 L31,14.5" fill="none" stroke="#fff" stroke-width="3.6" stroke-linecap="round" stroke-linejoin="round"/></svg>
<svg class="tx" width="1" height="1"><text x="1734.00" y="642.00" font-size="22.5" fill="#ffffff" text-anchor="middle">5</text></svg>
<svg style="left:1877px;top:582px" width="34" height="18" viewBox="0 0 34 18"><path d="M3,14.5 L17,5.5 L31,14.5" fill="none" stroke="#fff" stroke-width="3.6" stroke-linecap="round" stroke-linejoin="round"/></svg>
<svg class="tx" width="1" height="1"><text x="1894.00" y="642.00" font-size="22.5" fill="#ffffff" text-anchor="middle">6</text></svg>
<div class="a" style="left:1015px;top:653px;width:947px;height:4px;background:#6f7088;"></div>
<div class="a" style="left:1962px;top:653px;width:86px;height:4px;background:#4b5560;"></div>
<div class="a" style="left:136px;top:657px;width:1912px;height:8px;background:#000000;"></div>
<div class="a" style="left:136px;top:665px;width:1912px;height:102px;background:#1c1c1e;"></div>
<div class="a" style="left:136px;top:665px;width:1912px;height:1px;background:#3a3a3c;"></div>
<div class="a" style="left:136px;top:765px;width:1912px;height:1px;background:#38383a;"></div>
<div class="a" style="left:136px;top:766px;width:1912px;height:1px;background:#161618;"></div>
<svg style="left:180px;top:690px" width="40" height="50" viewBox="180 690 40 50"><path d="M205.5,701.5 L191,716 L205.5,730.5" fill="none" stroke="#fff" stroke-width="3.2" stroke-linecap="round" stroke-linejoin="round"/></svg>
<div class="a" style="left:248px;top:683px;width:88px;height:64px;background:#006ad3;border-radius:11px;"></div>
<svg style="left:260px;top:690px" width="64" height="52" viewBox="260 690 64 52"><path d="M282.40,704.21 A15.6,15.6 0 1 0 301.60,704.21" fill="none" stroke="#fff" stroke-width="2.9" stroke-linecap="round"/><path d="M292,699.5 L292,714.5" stroke="#fff" stroke-width="2.9" stroke-linecap="round"/></svg>
<svg class="tx" width="1" height="1"><text x="351.80" y="726.00" font-size="30" fill="#ffffff" text-anchor="start" textLength="175.50" lengthAdjust="spacing">FAC Bandit 2</text></svg>
<svg class="tx" width="1" height="1"><text x="544.50" y="726.00" font-size="30" fill="#98989d" text-anchor="start" textLength="41.50" lengthAdjust="spacing">Init</text></svg>
<svg class="tx" width="1" height="1"><text x="1687.00" y="705.00" font-size="21.5" fill="#8e8e93" text-anchor="start" textLength="119.20" lengthAdjust="spacing">Automation</text></svg>
<svg class="tx" width="1" height="1"><text x="1687.00" y="740.00" font-size="25.5" fill="#30d158" text-anchor="start">Read</text></svg>
<svg style="left:1750px;top:716px" width="26" height="30" viewBox="1750 716 26 30"><path d="M1756.5,727 L1762.5,721.5 L1768.5,727 M1756.5,734.5 L1762.5,740 L1768.5,734.5" fill="none" stroke="#636366" stroke-width="2.2" stroke-linecap="round" stroke-linejoin="round"/></svg>
<div class="a" style="left:1877.6000000000001px;top:711.1px;width:7.2px;height:7.2px;border-radius:50%;background:#fff"></div>
<div class="a" style="left:1889.7px;top:711.1px;width:7.2px;height:7.2px;border-radius:50%;background:#fff"></div>
<div class="a" style="left:1901.8000000000002px;top:711.1px;width:7.2px;height:7.2px;border-radius:50%;background:#fff"></div>
<div class="a" style="left:1959px;top:710.5px;width:49px;height:2.2px;background:#636366;border-radius:1px;"></div>
<div class="a" style="left:1959px;top:718.7px;width:49px;height:2.2px;background:#636366;border-radius:1px;"></div>
<div class="a" style="left:136px;top:767px;width:1912px;height:767px;background:linear-gradient(90deg,#bfbdbe 0%,#c0bebf 42%,#c7c6c7 62%,#c9c8c9 100%);"></div>
<div class="a" style="left:136px;top:767px;width:1912px;height:1px;background:#d2d0d1;"></div>
<div class="a" style="left:136px;top:1533px;width:1912px;height:3px;background:#1c1c1e;"></div>
<svg style="left:154px;top:906px" width="180" height="180" viewBox="154 906 180 180"><path d="M207.59,1063.05 A76.3,76.3 0 1 1 280.41,1063.05" fill="none" stroke="#8c8c8e" stroke-width="8.8" stroke-linecap="round"/><path d="M207.59,1063.05 A76.3,76.3 0 1 1 280.41,1063.05" fill="none" stroke="#c9c9ca" stroke-width="6.6" stroke-linecap="round"/><path d="M207.59,1063.05 A76.3,76.3 0 0 1 247.99,919.80" fill="none" stroke="#dfdfdf" stroke-width="6.6" stroke-linecap="round"/><circle cx="244" cy="996" r="72.6" fill="#18191b"/><g transform="rotate(0 244 996)"><circle cx="244" cy="996" r="67.05" fill="none" stroke="#3a3d41" stroke-width="7.10"/><polygon points="229.18,934.25 230.82,928.17 257.18,928.17 258.82,934.25" fill="#a6a6a8"/><polygon points="277.18,941.86 282.64,938.71 301.29,957.36 298.14,962.82" fill="#a6a6a8"/><polygon points="305.75,981.18 311.83,982.82 311.83,1009.18 305.75,1010.82" fill="#a6a6a8"/><polygon points="298.14,1029.18 301.29,1034.64 282.64,1053.29 277.18,1050.14" fill="#a6a6a8"/><polygon points="258.82,1057.75 257.18,1063.83 230.82,1063.83 229.18,1057.75" fill="#a6a6a8"/><polygon points="210.82,1050.14 205.36,1053.29 186.71,1034.64 189.86,1029.18" fill="#a6a6a8"/><polygon points="182.25,1010.82 176.17,1009.18 176.17,982.82 182.25,981.18" fill="#a6a6a8"/><polygon points="189.86,962.82 186.71,957.36 205.36,938.71 210.82,941.86" fill="#a6a6a8"/><circle cx="244" cy="996" r="60.15" fill="none" stroke="#d8d8d9" stroke-width="7.30"/><circle cx="244" cy="996" r="56" fill="#2b2d31"/><clipPath id="kc244"><circle cx="244" cy="996" r="54.6"/></clipPath><circle cx="244" cy="996" r="54.6" fill="#ffffff"/><rect x="174" y="926" width="140" height="53" fill="#ececec" clip-path="url(#kc244)"/><path d="M238.2,940 L238.2,946.5 A5.8,5.8 0 0 0 249.8,946.5 L249.8,940Z" fill="#3a3d41"/></g></svg>
<svg class="tx" width="1" height="1"><text x="244.00" y="1007.00" font-size="28" fill="#000000" text-anchor="middle" textLength="62.60" lengthAdjust="spacing">LOW</text></svg>
<svg class="tx" width="1" height="1"><text x="179.40" y="1098.00" font-size="22.5" fill="#3b3d41" text-anchor="start" textLength="35.70" lengthAdjust="spacing">-inf</text></svg>
<svg class="tx" width="1" height="1"><text x="325.50" y="1098.00" font-size="22.5" fill="#3b3d41" text-anchor="end" textLength="67.80" lengthAdjust="spacing">+15dB</text></svg>
<svg style="left:559px;top:906px" width="180" height="180" viewBox="559 906 180 180"><path d="M612.59,1063.05 A76.3,76.3 0 1 1 685.41,1063.05" fill="none" stroke="#8c8c8e" stroke-width="8.8" stroke-linecap="round"/><path d="M612.59,1063.05 A76.3,76.3 0 1 1 685.41,1063.05" fill="none" stroke="#c9c9ca" stroke-width="6.6" stroke-linecap="round"/><path d="M612.59,1063.05 A76.3,76.3 0 0 1 652.99,919.80" fill="none" stroke="#dfdfdf" stroke-width="6.6" stroke-linecap="round"/><circle cx="649" cy="996" r="72.6" fill="#18191b"/><g transform="rotate(0 649 996)"><circle cx="649" cy="996" r="67.05" fill="none" stroke="#3a3d41" stroke-width="7.10"/><polygon points="634.18,934.25 635.82,928.17 662.18,928.17 663.82,934.25" fill="#a6a6a8"/><polygon points="682.18,941.86 687.64,938.71 706.29,957.36 703.14,962.82" fill="#a6a6a8"/><polygon points="710.75,981.18 716.83,982.82 716.83,1009.18 710.75,1010.82" fill="#a6a6a8"/><polygon points="703.14,1029.18 706.29,1034.64 687.64,1053.29 682.18,1050.14" fill="#a6a6a8"/><polygon points="663.82,1057.75 662.18,1063.83 635.82,1063.83 634.18,1057.75" fill="#a6a6a8"/><polygon points="615.82,1050.14 610.36,1053.29 591.71,1034.64 594.86,1029.18" fill="#a6a6a8"/><polygon points="587.25,1010.82 581.17,1009.18 581.17,982.82 587.25,981.18" fill="#a6a6a8"/><polygon points="594.86,962.82 591.71,957.36 610.36,938.71 615.82,941.86" fill="#a6a6a8"/><circle cx="649" cy="996" r="60.15" fill="none" stroke="#d8d8d9" stroke-width="7.30"/><circle cx="649" cy="996" r="56" fill="#2b2d31"/><clipPath id="kc649"><circle cx="649" cy="996" r="54.6"/></clipPath><circle cx="649" cy="996" r="54.6" fill="#ffffff"/><rect x="579" y="926" width="140" height="53" fill="#ececec" clip-path="url(#kc649)"/><path d="M643.2,940 L643.2,946.5 A5.8,5.8 0 0 0 654.8,946.5 L654.8,940Z" fill="#3a3d41"/></g></svg>
<svg class="tx" width="1" height="1"><text x="649.00" y="1007.00" font-size="28" fill="#000000" text-anchor="middle" textLength="51.30" lengthAdjust="spacing">MID</text></svg>
<svg class="tx" width="1" height="1"><text x="584.40" y="1098.00" font-size="22.5" fill="#3b3d41" text-anchor="start" textLength="35.70" lengthAdjust="spacing">-inf</text></svg>
<svg class="tx" width="1" height="1"><text x="730.50" y="1098.00" font-size="22.5" fill="#3b3d41" text-anchor="end" textLength="67.80" lengthAdjust="spacing">+15dB</text></svg>
<svg style="left:964px;top:906px" width="180" height="180" viewBox="964 906 180 180"><path d="M1017.59,1063.05 A76.3,76.3 0 1 1 1090.41,1063.05" fill="none" stroke="#8c8c8e" stroke-width="8.8" stroke-linecap="round"/><path d="M1017.59,1063.05 A76.3,76.3 0 1 1 1090.41,1063.05" fill="none" stroke="#c9c9ca" stroke-width="6.6" stroke-linecap="round"/><path d="M1017.59,1063.05 A76.3,76.3 0 0 1 1067.90,920.98" fill="none" stroke="#dfdfdf" stroke-width="6.6" stroke-linecap="round"/><circle cx="1054" cy="996" r="72.6" fill="#18191b"/><g transform="rotate(7.5 1054 996)"><circle cx="1054" cy="996" r="67.05" fill="none" stroke="#3a3d41" stroke-width="7.10"/><polygon points="1039.18,934.25 1040.82,928.17 1067.18,928.17 1068.82,934.25" fill="#a6a6a8"/><polygon points="1087.18,941.86 1092.64,938.71 1111.29,957.36 1108.14,962.82" fill="#a6a6a8"/><polygon points="1115.75,981.18 1121.83,982.82 1121.83,1009.18 1115.75,1010.82" fill="#a6a6a8"/><polygon points="1108.14,1029.18 1111.29,1034.64 1092.64,1053.29 1087.18,1050.14" fill="#a6a6a8"/><polygon points="1068.82,1057.75 1067.18,1063.83 1040.82,1063.83 1039.18,1057.75" fill="#a6a6a8"/><polygon points="1020.82,1050.14 1015.36,1053.29 996.71,1034.64 999.86,1029.18" fill="#a6a6a8"/><polygon points="992.25,1010.82 986.17,1009.18 986.17,982.82 992.25,981.18" fill="#a6a6a8"/><polygon points="999.86,962.82 996.71,957.36 1015.36,938.71 1020.82,941.86" fill="#a6a6a8"/><circle cx="1054" cy="996" r="60.15" fill="none" stroke="#d8d8d9" stroke-width="7.30"/><circle cx="1054" cy="996" r="56" fill="#2b2d31"/><clipPath id="kc1054"><circle cx="1054" cy="996" r="54.6"/></clipPath><circle cx="1054" cy="996" r="54.6" fill="#ffffff"/><rect x="984" y="926" width="140" height="53" fill="#ececec" clip-path="url(#kc1054)"/><path d="M1048.2,940 L1048.2,946.5 A5.8,5.8 0 0 0 1059.8,946.5 L1059.8,940Z" fill="#3a3d41"/></g></svg>
<svg class="tx" width="1" height="1"><text x="1054.00" y="1007.00" font-size="28" fill="#000000" text-anchor="middle" textLength="69.70" lengthAdjust="spacing">HIGH</text></svg>
<svg class="tx" width="1" height="1"><text x="989.40" y="1098.00" font-size="22.5" fill="#3b3d41" text-anchor="start" textLength="35.70" lengthAdjust="spacing">-inf</text></svg>
<svg class="tx" width="1" height="1"><text x="1135.50" y="1098.00" font-size="22.5" fill="#3b3d41" text-anchor="end" textLength="67.80" lengthAdjust="spacing">+15dB</text></svg>
<div class="a" style="left:185.1px;top:1160.3px;width:116.8px;height:184.5px;background:#c9c9ca;border-radius:13px;border:1.2px solid #9a9a9c;"></div>
<div class="a" style="left:189.5px;top:1165px;width:107px;height:175.7px;background:#2e3136;border-radius:10px;"></div>
<div class="a" style="left:189.5px;top:1250.8px;width:107px;height:4.5px;background:#c5c5c6;"></div>
<svg class="tx" width="1" height="1"><text x="243.50" y="1217.00" font-size="28" fill="#d9d9db" text-anchor="middle" stroke="#d9d9db" stroke-width="0.5">M</text></svg>
<svg class="tx" width="1" height="1"><text x="243.50" y="1307.20" font-size="28" fill="#d9d9db" text-anchor="middle" stroke="#d9d9db" stroke-width="0.5">S</text></svg>
<div class="a" style="left:590.1px;top:1160.3px;width:116.8px;height:184.5px;background:#c9c9ca;border-radius:13px;border:1.2px solid #9a9a9c;"></div>
<div class="a" style="left:594.5px;top:1165px;width:107px;height:175.7px;background:#2e3136;border-radius:10px;"></div>
<div class="a" style="left:594.5px;top:1250.8px;width:107px;height:4.5px;background:#c5c5c6;"></div>
<svg class="tx" width="1" height="1"><text x="648.50" y="1217.00" font-size="28" fill="#d9d9db" text-anchor="middle" stroke="#d9d9db" stroke-width="0.5">M</text></svg>
<svg class="tx" width="1" height="1"><text x="648.50" y="1307.20" font-size="28" fill="#d9d9db" text-anchor="middle" stroke="#d9d9db" stroke-width="0.5">S</text></svg>
<div class="a" style="left:995.1px;top:1160.3px;width:116.8px;height:184.5px;background:#c9c9ca;border-radius:13px;border:1.2px solid #9a9a9c;"></div>
<div class="a" style="left:999.5px;top:1165px;width:107px;height:175.7px;background:#2e3136;border-radius:10px;"></div>
<div class="a" style="left:999.5px;top:1250.8px;width:107px;height:4.5px;background:#c5c5c6;"></div>
<svg class="tx" width="1" height="1"><text x="1053.50" y="1217.00" font-size="28" fill="#d9d9db" text-anchor="middle" stroke="#d9d9db" stroke-width="0.5">M</text></svg>
<svg class="tx" width="1" height="1"><text x="1053.50" y="1307.20" font-size="28" fill="#d9d9db" text-anchor="middle" stroke="#d9d9db" stroke-width="0.5">S</text></svg>
<div class="a" style="left:351px;top:767px;width:190px;height:133px;background:#232325;"></div>
<div class="a" style="left:351px;top:900px;width:190px;height:608.5px;background:#2f3337;border-radius:0 0 95px 95px / 0 0 110px 110px;"></div>
<div class="a" style="left:435.2px;top:798.4000000000001px;width:4.6px;height:4.6px;border-radius:50%;background:#79797b"></div>
<div class="a" style="left:443.7px;top:798.4000000000001px;width:4.6px;height:4.6px;border-radius:50%;background:#79797b"></div>
<div class="a" style="left:452.2px;top:798.4000000000001px;width:4.6px;height:4.6px;border-radius:50%;background:#79797b"></div>
<svg class="tx" width="1" height="1"><text x="446.00" y="837.10" font-size="29" fill="#ebebeb" text-anchor="middle" textLength="142.50" lengthAdjust="spacing">SATURATE</text></svg>
<svg class="tx" width="1" height="1"><text x="446.00" y="872.40" font-size="29" fill="#f8f07b" text-anchor="middle" textLength="73.90" lengthAdjust="spacing">SOFT</text></svg>
<svg style="left:351px;top:900px" width="190" height="200" viewBox="351 900 190 200"><circle cx="446" cy="996" r="87.3" fill="#222428"/><circle cx="446" cy="996" r="84.5" fill="#25282c"/><path d="M406.49,1067.28 A81.5,81.5 0 1 1 485.51,1067.28" fill="none" stroke="#2a2d31" stroke-width="5" stroke-linecap="round"/><circle cx="446" cy="996" r="77" fill="#1f2124"/><circle cx="446" cy="996" r="75.5" fill="#30343a"/><path d="M405.62,1067.37 A82,82 0 0 1 376.46,1039.45" fill="none" stroke="#f4dc70" stroke-width="5.2" stroke-linecap="round"/><circle cx="446" cy="996" r="70.3" fill="none" stroke="#f4dc70" stroke-width="2.4"/><path d="M438.5,954 Q417.5,955 417.5,972 L417.5,1020 Q417.5,1039 446,1039 Q474.5,1039 474.5,1020 L474.5,972 Q474.5,955 453.5,954" fill="none" stroke="#f4dc70" stroke-width="2.4"/><path d="M438.5,955 L438.5,948 A7.5,7.5 0 0 1 453.5,948 L453.5,955" fill="none" stroke="#f4dc70" stroke-width="2.4"/><path d="M427.5,963 L464.5,963 M427.5,1014 L464.5,1014" stroke="#9b8f5a" stroke-width="2"/><rect x="427.5" y="971" width="37.5" height="35" rx="3" fill="#9b8f5a"/><path d="M431,1002 C440,1003 442,993 446,987 C450,980 453,977 461,976.5" fill="none" stroke="#30343a" stroke-width="2.4" stroke-linecap="round"/><path d="M432.8,1014 L432.8,1026" stroke="#9b8f5a" stroke-width="2"/><path d="M441.7,1014 L441.7,1031" stroke="#9b8f5a" stroke-width="2"/><path d="M450.5,1014 L450.5,1031" stroke="#9b8f5a" stroke-width="2"/><path d="M459.3,1014 L459.3,1026" stroke="#9b8f5a" stroke-width="2"/><path d="M427.5,1039 L427.5,1048.5" stroke="#f4dc70" stroke-width="2.4"/><path d="M440,1039 L440,1052.5" stroke="#f4dc70" stroke-width="2.4"/><path d="M452.7,1039 L452.7,1052.5" stroke="#f4dc70" stroke-width="2.4"/><path d="M465.5,1039 L465.5,1048.5" stroke="#f4dc70" stroke-width="2.4"/></svg>
<svg class="tx" width="1" height="1"><text x="446.00" y="1122.90" font-size="25" fill="#f4dc70" text-anchor="middle" textLength="87.40" lengthAdjust="spacing">CURVE</text></svg>
<svg class="tx" width="1" height="1"><text x="446.00" y="1176.00" font-size="27" fill="#ececed" text-anchor="middle" textLength="97.40" lengthAdjust="spacing">+9.7dB</text></svg>
<svg class="tx" width="1" height="1"><text x="446.00" y="1209.80" font-size="25.5" fill="#7d7f83" text-anchor="middle" textLength="117.70" lengthAdjust="spacing">PRE GAIN</text></svg>
<svg class="tx" width="1" height="1"><text x="446.00" y="1268.10" font-size="27" fill="#ececed" text-anchor="middle" textLength="109.30" lengthAdjust="spacing">320.6hz</text></svg>
<svg class="tx" width="1" height="1"><text x="446.00" y="1301.80" font-size="25.5" fill="#7d7f83" text-anchor="middle" textLength="121.80" lengthAdjust="spacing">POST LPF</text></svg>
<svg style="left:351px;top:1318.5px" width="190" height="190" viewBox="351 1318.5 190 190"><circle cx="446" cy="1413.5" r="84" fill="#232529"/><circle cx="446" cy="1413.5" r="84" fill="none" stroke="#1e2023" stroke-width="1.5"/><path d="M407.22,1483.47 A80,80 0 1 1 484.78,1483.47" fill="none" stroke="#292c30" stroke-width="5" stroke-linecap="round"/><path d="M406.00,1482.78 A80,80 0 0 1 379.68,1458.24" fill="none" stroke="#c9c9ca" stroke-width="5" stroke-linecap="round"/><circle cx="446" cy="1413.5" r="75.5" fill="#17181a"/><circle cx="446" cy="1413.5" r="69.25" fill="none" stroke="#33373b" stroke-width="8.50"/><polygon points="444.07,1348.53 447.01,1341.51 473.90,1347.13 473.78,1354.73" fill="#a7a7a9"/><polygon points="490.58,1366.19 497.62,1363.30 512.66,1386.30 507.20,1391.59" fill="#a7a7a9"/><polygon points="510.97,1411.57 517.99,1414.51 512.37,1441.40 504.77,1441.28" fill="#a7a7a9"/><polygon points="493.31,1458.08 496.20,1465.12 473.20,1480.16 467.91,1474.70" fill="#a7a7a9"/><polygon points="447.93,1478.47 444.99,1485.49 418.10,1479.87 418.22,1472.27" fill="#a7a7a9"/><polygon points="401.42,1460.81 394.38,1463.70 379.34,1440.70 384.80,1435.41" fill="#a7a7a9"/><polygon points="381.03,1415.43 374.01,1412.49 379.63,1385.60 387.23,1385.72" fill="#a7a7a9"/><polygon points="398.69,1368.92 395.80,1361.88 418.80,1346.84 424.09,1352.30" fill="#a7a7a9"/><circle cx="446" cy="1413.5" r="62.60" fill="none" stroke="#d9d9da" stroke-width="8.40"/><circle cx="446" cy="1413.5" r="58.6" fill="#2b2e33"/><clipPath id="mc446"><circle cx="446" cy="1413.5" r="57.6"/></clipPath><circle cx="446" cy="1413.5" r="57.6" fill="#84aeeb"/><g clip-path="url(#mc446)"><rect x="376" y="1419.5" width="140" height="80" fill="#79a1d9" transform="rotate(56.80000000000001 446 1413.5)"/></g><path d="M403.74,1441.15 L398.30,1444.71" stroke="#33373b" stroke-width="8" stroke-linecap="round"/><circle cx="403.74" cy="1441.15" r="5.8" fill="#33373b"/></svg>
<svg class="tx" width="1" height="1"><text x="446.00" y="1424.00" font-size="27" fill="#000000" text-anchor="middle" textLength="50.30" lengthAdjust="spacing">MIX</text></svg>
<div class="a" style="left:756px;top:767px;width:190px;height:133px;background:#232325;"></div>
<div class="a" style="left:756px;top:900px;width:190px;height:608.5px;background:#2f3337;border-radius:0 0 95px 95px / 0 0 110px 110px;"></div>
<div class="a" style="left:840.2px;top:798.4000000000001px;width:4.6px;height:4.6px;border-radius:50%;background:#79797b"></div>
<div class="a" style="left:848.7px;top:798.4000000000001px;width:4.6px;height:4.6px;border-radius:50%;background:#79797b"></div>
<div class="a" style="left:857.2px;top:798.4000000000001px;width:4.6px;height:4.6px;border-radius:50%;background:#79797b"></div>
<svg class="tx" width="1" height="1"><text x="851.00" y="837.10" font-size="29" fill="#ebebeb" text-anchor="middle" textLength="58.50" lengthAdjust="spacing">LOFI</text></svg>
<svg class="tx" width="1" height="1"><text x="851.00" y="872.40" font-size="29" fill="#f8f07b" text-anchor="middle" textLength="101.10" lengthAdjust="spacing">DITHER</text></svg>
<svg style="left:756px;top:900px" width="190" height="200" viewBox="756 900 190 200"><circle cx="851" cy="996" r="87.3" fill="#222428"/><circle cx="851" cy="996" r="84.5" fill="#25282c"/><path d="M811.49,1067.28 A81.5,81.5 0 1 1 890.51,1067.28" fill="none" stroke="#2a2d31" stroke-width="5" stroke-linecap="round"/><circle cx="851" cy="996" r="77" fill="#1f2124"/><circle cx="851" cy="996" r="75.5" fill="#30343a"/><circle cx="810.38" cy="1067.80" r="3" fill="#f4dc70"/><circle cx="851" cy="996" r="70.3" fill="none" stroke="#f4dc70" stroke-width="2.4"/><rect x="816.4" y="961.4" width="69.2" height="69.2" rx="4.5" fill="none" stroke="#f4dc70" stroke-width="2.6"/><path d="M832.6,951.5 L832.6,960.5 M832.6,1031.5 L832.6,1040.5 M806.5,977.6 L815.5,977.6 M886.5,977.6 L895.5,977.6" stroke="#f4dc70" stroke-width="2.6"/><path d="M845.3,951.5 L845.3,960.5 M845.3,1031.5 L845.3,1040.5 M806.5,990.3 L815.5,990.3 M886.5,990.3 L895.5,990.3" stroke="#f4dc70" stroke-width="2.6"/><path d="M857.9,951.5 L857.9,960.5 M857.9,1031.5 L857.9,1040.5 M806.5,1002.9 L815.5,1002.9 M886.5,1002.9 L895.5,1002.9" stroke="#f4dc70" stroke-width="2.6"/><path d="M870.1,951.5 L870.1,960.5 M870.1,1031.5 L870.1,1040.5 M806.5,1015.1 L815.5,1015.1 M886.5,1015.1 L895.5,1015.1" stroke="#f4dc70" stroke-width="2.6"/><rect x="825.7" y="970.7" width="51.6" height="51.6" rx="3.5" fill="none" stroke="#9b8f5a" stroke-width="2.7"/><rect x="835.65" y="980.00" width="5.2" height="5.2" fill="#9b8f5a"/><rect x="835.65" y="986.60" width="5.2" height="5.2" fill="#9b8f5a"/><rect x="835.65" y="993.20" width="5.2" height="5.2" fill="#9b8f5a"/><rect x="835.65" y="999.80" width="5.2" height="5.2" fill="#9b8f5a"/><rect x="835.65" y="1006.40" width="5.2" height="5.2" fill="#9b8f5a"/><rect x="842.25" y="980.00" width="5.2" height="5.2" fill="#9b8f5a"/><rect x="842.25" y="986.60" width="5.2" height="5.2" fill="#9b8f5a"/><rect x="842.25" y="993.20" width="5.2" height="5.2" fill="#9b8f5a"/><rect x="842.25" y="999.80" width="5.2" height="5.2" fill="#9b8f5a"/><rect x="842.25" y="1006.40" width="5.2" height="5.2" fill="#9b8f5a"/><rect x="848.85" y="980.00" width="5.2" height="5.2" fill="#9b8f5a"/><rect x="848.85" y="986.60" width="5.2" height="5.2" fill="#9b8f5a"/><rect x="848.85" y="993.20" width="5.2" height="5.2" fill="#9b8f5a"/><rect x="848.85" y="999.80" width="5.2" height="5.2" fill="#9b8f5a"/><rect x="848.85" y="1006.40" width="5.2" height="5.2" fill="#9b8f5a"/><rect x="855.45" y="980.00" width="5.2" height="5.2" fill="#9b8f5a"/><rect x="855.45" y="986.60" width="5.2" height="5.2" fill="#9b8f5a"/><rect x="855.45" y="993.20" width="5.2" height="5.2" fill="#9b8f5a"/><rect x="855.45" y="999.80" width="5.2" height="5.2" fill="#9b8f5a"/><rect x="855.45" y="1006.40" width="5.2" height="5.2" fill="#9b8f5a"/><rect x="862.05" y="980.00" width="5.2" height="5.2" fill="#9b8f5a"/><rect x="862.05" y="986.60" width="5.2" height="5.2" fill="#9b8f5a"/><rect x="862.05" y="993.20" width="5.2" height="5.2" fill="#9b8f5a"/><rect x="862.05" y="999.80" width="5.2" height="5.2" fill="#9b8f5a"/><rect x="862.05" y="1006.40" width="5.2" height="5.2" fill="#9b8f5a"/><circle cx="840.00" cy="976.6" r="1.4" fill="#9b8f5a"/><circle cx="840.00" cy="1016.5" r="1.4" fill="#9b8f5a"/><circle cx="831.6" cy="985.00" r="1.4" fill="#9b8f5a"/><circle cx="871.5" cy="985.00" r="1.4" fill="#9b8f5a"/><circle cx="847.50" cy="976.6" r="1.4" fill="#9b8f5a"/><circle cx="847.50" cy="1016.5" r="1.4" fill="#9b8f5a"/><circle cx="831.6" cy="992.50" r="1.4" fill="#9b8f5a"/><circle cx="871.5" cy="992.50" r="1.4" fill="#9b8f5a"/><circle cx="855.00" cy="976.6" r="1.4" fill="#9b8f5a"/><circle cx="855.00" cy="1016.5" r="1.4" fill="#9b8f5a"/><circle cx="831.6" cy="1000.00" r="1.4" fill="#9b8f5a"/><circle cx="871.5" cy="1000.00" r="1.4" fill="#9b8f5a"/><circle cx="862.50" cy="976.6" r="1.4" fill="#9b8f5a"/><circle cx="862.50" cy="1016.5" r="1.4" fill="#9b8f5a"/><circle cx="831.6" cy="1007.50" r="1.4" fill="#9b8f5a"/><circle cx="871.5" cy="1007.50" r="1.4" fill="#9b8f5a"/></svg>
<svg class="tx" width="1" height="1"><text x="851.00" y="1122.90" font-size="25" fill="#f4dc70" text-anchor="middle" textLength="80.60" lengthAdjust="spacing">RATES</text></svg>
<svg class="tx" width="1" height="1"><text x="851.00" y="1176.00" font-size="27" fill="#ececed" text-anchor="middle" textLength="81.80" lengthAdjust="spacing">12bits</text></svg>
<svg class="tx" width="1" height="1"><text x="851.00" y="1209.80" font-size="25.5" fill="#7d7f83" text-anchor="middle" textLength="48.90" lengthAdjust="spacing">RES</text></svg>
<svg class="tx" width="1" height="1"><text x="851.00" y="1268.10" font-size="27" fill="#ececed" text-anchor="middle" textLength="89.70" lengthAdjust="spacing">7.7khz</text></svg>
<svg class="tx" width="1" height="1"><text x="851.00" y="1301.80" font-size="25.5" fill="#7d7f83" text-anchor="middle" textLength="138.70" lengthAdjust="spacing">POST BELL</text></svg>
<svg style="left:756px;top:1319px" width="190" height="190" viewBox="756 1319 190 190"><circle cx="851" cy="1414" r="84" fill="#232529"/><circle cx="851" cy="1414" r="84" fill="none" stroke="#1e2023" stroke-width="1.5"/><path d="M812.22,1483.97 A80,80 0 1 1 889.78,1483.97" fill="none" stroke="#d6d6d7" stroke-width="5" stroke-linecap="round"/><circle cx="851" cy="1414" r="75.5" fill="#17181a"/><circle cx="851" cy="1414" r="69.25" fill="none" stroke="#33373b" stroke-width="8.50"/><polygon points="851.57,1349.00 854.77,1342.10 881.43,1348.75 881.01,1356.34" fill="#a7a7a9"/><polygon points="897.36,1368.44 904.51,1365.82 918.66,1389.37 912.99,1394.45" fill="#a7a7a9"/><polygon points="916.00,1414.57 922.90,1417.77 916.25,1444.43 908.66,1444.01" fill="#a7a7a9"/><polygon points="896.56,1460.36 899.18,1467.51 875.63,1481.66 870.55,1475.99" fill="#a7a7a9"/><polygon points="850.43,1479.00 847.23,1485.90 820.57,1479.25 820.99,1471.66" fill="#a7a7a9"/><polygon points="804.64,1459.56 797.49,1462.18 783.34,1438.63 789.01,1433.55" fill="#a7a7a9"/><polygon points="786.00,1413.43 779.10,1410.23 785.75,1383.57 793.34,1383.99" fill="#a7a7a9"/><polygon points="805.44,1367.64 802.82,1360.49 826.37,1346.34 831.45,1352.01" fill="#a7a7a9"/><circle cx="851" cy="1414" r="62.60" fill="none" stroke="#d9d9da" stroke-width="8.40"/><circle cx="851" cy="1414" r="58.6" fill="#2b2e33"/><clipPath id="mc851"><circle cx="851" cy="1414" r="57.6"/></clipPath><circle cx="851" cy="1414" r="57.6" fill="#84aeeb"/><g clip-path="url(#mc851)"><rect x="781" y="1420" width="140" height="80" fill="#79a1d9" transform="rotate(-31 851 1414)"/></g><path d="M877.01,1457.29 L880.36,1462.86" stroke="#33373b" stroke-width="8" stroke-linecap="round"/><circle cx="877.01" cy="1457.29" r="5.8" fill="#33373b"/></svg>
<svg class="tx" width="1" height="1"><text x="851.00" y="1424.50" font-size="27" fill="#000000" text-anchor="middle" textLength="50.30" lengthAdjust="spacing">MIX</text></svg>
<div class="a" style="left:1161px;top:767px;width:190px;height:133px;background:#232325;"></div>
<div class="a" style="left:1161px;top:900px;width:190px;height:608.5px;background:#2f3337;border-radius:0 0 95px 95px / 0 0 110px 110px;"></div>
<div class="a" style="left:1245.2px;top:798.4000000000001px;width:4.6px;height:4.6px;border-radius:50%;background:#79797b"></div>
<div class="a" style="left:1253.7px;top:798.4000000000001px;width:4.6px;height:4.6px;border-radius:50%;background:#79797b"></div>
<div class="a" style="left:1262.2px;top:798.4000000000001px;width:4.6px;height:4.6px;border-radius:50%;background:#79797b"></div>
<svg class="tx" width="1" height="1"><text x="1256.00" y="837.10" font-size="29" fill="#ebebeb" text-anchor="middle" textLength="58.50" lengthAdjust="spacing">LOFI</text></svg>
<svg class="tx" width="1" height="1"><text x="1256.00" y="872.40" font-size="29" fill="#f8f07b" text-anchor="middle" textLength="79.70" lengthAdjust="spacing">RIZER</text></svg>
<svg style="left:1161px;top:900px" width="190" height="200" viewBox="1161 900 190 200"><circle cx="1256" cy="996" r="87.3" fill="#222428"/><circle cx="1256" cy="996" r="84.5" fill="#25282c"/><path d="M1216.49,1067.28 A81.5,81.5 0 1 1 1295.51,1067.28" fill="none" stroke="#2a2d31" stroke-width="5" stroke-linecap="round"/><circle cx="1256" cy="996" r="77" fill="#1f2124"/><circle cx="1256" cy="996" r="75.5" fill="#30343a"/><circle cx="1215.38" cy="1067.80" r="3" fill="#f4dc70"/><circle cx="1256" cy="996" r="70.3" fill="none" stroke="#f4dc70" stroke-width="2.4"/><rect x="1221.4" y="961.4" width="69.2" height="69.2" rx="4.5" fill="none" stroke="#f4dc70" stroke-width="2.6"/><path d="M1237.6,951.5 L1237.6,960.5 M1237.6,1031.5 L1237.6,1040.5 M1211.5,977.6 L1220.5,977.6 M1291.5,977.6 L1300.5,977.6" stroke="#f4dc70" stroke-width="2.6"/><path d="M1250.3,951.5 L1250.3,960.5 M1250.3,1031.5 L1250.3,1040.5 M1211.5,990.3 L1220.5,990.3 M1291.5,990.3 L1300.5,990.3" stroke="#f4dc70" stroke-width="2.6"/><path d="M1262.9,951.5 L1262.9,960.5 M1262.9,1031.5 L1262.9,1040.5 M1211.5,1002.9 L1220.5,1002.9 M1291.5,1002.9 L1300.5,1002.9" stroke="#f4dc70" stroke-width="2.6"/><path d="M1275.1,951.5 L1275.1,960.5 M1275.1,1031.5 L1275.1,1040.5 M1211.5,1015.1 L1220.5,1015.1 M1291.5,1015.1 L1300.5,1015.1" stroke="#f4dc70" stroke-width="2.6"/><rect x="1230.7" y="970.7" width="51.6" height="51.6" rx="3.5" fill="none" stroke="#9b8f5a" stroke-width="2.7"/><rect x="1240.45" y="974.00" width="5.2" height="5.2" fill="#9b8f5a"/><rect x="1246.90" y="974.00" width="5.2" height="5.2" fill="#9b8f5a"/><rect x="1253.35" y="974.00" width="5.2" height="5.2" fill="#9b8f5a"/><rect x="1234.00" y="980.45" width="5.2" height="5.2" fill="#9b8f5a"/><rect x="1240.45" y="980.45" width="5.2" height="5.2" fill="#9b8f5a"/><rect x="1246.90" y="980.45" width="5.2" height="5.2" fill="#9b8f5a"/><rect x="1259.80" y="980.45" width="5.2" height="5.2" fill="#9b8f5a"/><rect x="1246.90" y="986.90" width="5.2" height="5.2" fill="#9b8f5a"/><rect x="1253.35" y="986.90" width="5.2" height="5.2" fill="#9b8f5a"/><rect x="1259.80" y="986.90" width="5.2" height="5.2" fill="#9b8f5a"/><rect x="1272.70" y="986.90" width="5.2" height="5.2" fill="#9b8f5a"/><rect x="1234.00" y="993.35" width="5.2" height="5.2" fill="#9b8f5a"/><rect x="1240.45" y="993.35" width="5.2" height="5.2" fill="#9b8f5a"/><rect x="1246.90" y="993.35" width="5.2" height="5.2" fill="#9b8f5a"/><rect x="1253.35" y="993.35" width="5.2" height="5.2" fill="#9b8f5a"/><rect x="1259.80" y="993.35" width="5.2" height="5.2" fill="#9b8f5a"/><rect x="1266.25" y="993.35" width="5.2" height="5.2" fill="#9b8f5a"/><rect x="1272.70" y="993.35" width="5.2" height="5.2" fill="#9b8f5a"/><rect x="1240.45" y="999.80" width="5.2" height="5.2" fill="#9b8f5a"/><rect x="1246.90" y="999.80" width="5.2" height="5.2" fill="#9b8f5a"/><rect x="1266.25" y="999.80" width="5.2" height="5.2" fill="#9b8f5a"/><rect x="1272.70" y="999.80" width="5.2" height="5.2" fill="#9b8f5a"/><rect x="1234.00" y="1006.25" width="5.2" height="5.2" fill="#9b8f5a"/><rect x="1240.45" y="1006.25" width="5.2" height="5.2" fill="#9b8f5a"/><rect x="1246.90" y="1006.25" width="5.2" height="5.2" fill="#9b8f5a"/><rect x="1253.35" y="1006.25" width="5.2" height="5.2" fill="#9b8f5a"/><rect x="1259.80" y="1006.25" width="5.2" height="5.2" fill="#9b8f5a"/><rect x="1266.25" y="1006.25" width="5.2" height="5.2" fill="#9b8f5a"/><rect x="1272.70" y="1006.25" width="5.2" height="5.2" fill="#9b8f5a"/><rect x="1234.00" y="1012.70" width="5.2" height="5.2" fill="#9b8f5a"/><rect x="1240.45" y="1012.70" width="5.2" height="5.2" fill="#9b8f5a"/><rect x="1246.90" y="1012.70" width="5.2" height="5.2" fill="#9b8f5a"/><rect x="1253.35" y="1012.70" width="5.2" height="5.2" fill="#9b8f5a"/><rect x="1259.80" y="1012.70" width="5.2" height="5.2" fill="#9b8f5a"/><rect x="1266.25" y="1012.70" width="5.2" height="5.2" fill="#9b8f5a"/><rect x="1272.70" y="1012.70" width="5.2" height="5.2" fill="#9b8f5a"/></svg>
<svg class="tx" width="1" height="1"><text x="1256.00" y="1122.90" font-size="25" fill="#f4dc70" text-anchor="middle" textLength="80.60" lengthAdjust="spacing">RATES</text></svg>
<svg class="tx" width="1" height="1"><text x="1256.00" y="1176.00" font-size="27" fill="#ececed" text-anchor="middle" textLength="66.80" lengthAdjust="spacing">9bits</text></svg>
<svg class="tx" width="1" height="1"><text x="1256.00" y="1209.80" font-size="25.5" fill="#7d7f83" text-anchor="middle" textLength="48.90" lengthAdjust="spacing">RES</text></svg>
<svg class="tx" width="1" height="1"><text x="1256.00" y="1268.10" font-size="27" fill="#ececed" text-anchor="middle" textLength="106.50" lengthAdjust="spacing">11.1khz</text></svg>
<svg class="tx" width="1" height="1"><text x="1256.00" y="1301.80" font-size="25.5" fill="#7d7f83" text-anchor="middle" textLength="138.70" lengthAdjust="spacing">POST BELL</text></svg>
<svg style="left:1161px;top:1319px" width="190" height="190" viewBox="1161 1319 190 190"><circle cx="1256" cy="1414" r="84" fill="#232529"/><circle cx="1256" cy="1414" r="84" fill="none" stroke="#1e2023" stroke-width="1.5"/><path d="M1217.22,1483.97 A80,80 0 1 1 1294.78,1483.97" fill="none" stroke="#d6d6d7" stroke-width="5" stroke-linecap="round"/><circle cx="1256" cy="1414" r="75.5" fill="#17181a"/><circle cx="1256" cy="1414" r="69.25" fill="none" stroke="#33373b" stroke-width="8.50"/><polygon points="1256.57,1349.00 1259.77,1342.10 1286.43,1348.75 1286.01,1356.34" fill="#a7a7a9"/><polygon points="1302.36,1368.44 1309.51,1365.82 1323.66,1389.37 1317.99,1394.45" fill="#a7a7a9"/><polygon points="1321.00,1414.57 1327.90,1417.77 1321.25,1444.43 1313.66,1444.01" fill="#a7a7a9"/><polygon points="1301.56,1460.36 1304.18,1467.51 1280.63,1481.66 1275.55,1475.99" fill="#a7a7a9"/><polygon points="1255.43,1479.00 1252.23,1485.90 1225.57,1479.25 1225.99,1471.66" fill="#a7a7a9"/><polygon points="1209.64,1459.56 1202.49,1462.18 1188.34,1438.63 1194.01,1433.55" fill="#a7a7a9"/><polygon points="1191.00,1413.43 1184.10,1410.23 1190.75,1383.57 1198.34,1383.99" fill="#a7a7a9"/><polygon points="1210.44,1367.64 1207.82,1360.49 1231.37,1346.34 1236.45,1352.01" fill="#a7a7a9"/><circle cx="1256" cy="1414" r="62.60" fill="none" stroke="#d9d9da" stroke-width="8.40"/><circle cx="1256" cy="1414" r="58.6" fill="#2b2e33"/><clipPath id="mc1256"><circle cx="1256" cy="1414" r="57.6"/></clipPath><circle cx="1256" cy="1414" r="57.6" fill="#84aeeb"/><g clip-path="url(#mc1256)"><rect x="1186" y="1420" width="140" height="80" fill="#79a1d9" transform="rotate(-31 1256 1414)"/></g><path d="M1282.01,1457.29 L1285.36,1462.86" stroke="#33373b" stroke-width="8" stroke-linecap="round"/><circle cx="1282.01" cy="1457.29" r="5.8" fill="#33373b"/></svg>
<svg class="tx" width="1" height="1"><text x="1256.00" y="1424.50" font-size="27" fill="#000000" text-anchor="middle" textLength="50.30" lengthAdjust="spacing">MIX</text></svg>
<div class="a" style="left:1377px;top:926.2px;width:700px;height:244.2px;background:linear-gradient(180deg,#cbcacb,#c6c5c6);border-radius:12px;border:1.5px solid #9e9e9f;"></div>
<div class="a" style="left:1378px;top:1054.8px;width:680px;height:1.5px;background:#a4a4a5;"></div>
<svg class="tx" width="1" height="1"><text x="1489.00" y="967.00" font-size="27" fill="#2b2d31" text-anchor="middle" textLength="89.00" lengthAdjust="spacing">1.2khz</text></svg>
<svg class="tx" width="1" height="1"><text x="1489.00" y="1034.40" font-size="25" fill="#56585b" text-anchor="middle" textLength="58.50" lengthAdjust="spacing">LOW</text></svg>
<svg class="tx" width="1" height="1"><text x="1712.70" y="967.00" font-size="27" fill="#2b2d31" text-anchor="middle" textLength="69.50" lengthAdjust="spacing">12db</text></svg>
<svg class="tx" width="1" height="1"><text x="1712.70" y="1034.40" font-size="25" fill="#56585b" text-anchor="middle" textLength="86.50" lengthAdjust="spacing">XOVER</text></svg>
<svg class="tx" width="1" height="1"><text x="1937.80" y="967.00" font-size="27" fill="#2b2d31" text-anchor="middle" textLength="90.50" lengthAdjust="spacing">2.2khz</text></svg>
<svg class="tx" width="1" height="1"><text x="1937.80" y="1034.40" font-size="25" fill="#56585b" text-anchor="middle" textLength="65.50" lengthAdjust="spacing">HIGH</text></svg>
<div class="a" style="left:1599.4px;top:947px;width:1.3px;height:23.5px;background:#98989a;"></div>
<div class="a" style="left:1599.4px;top:1012px;width:1.3px;height:25px;background:#98989a;"></div>
<div class="a" style="left:1824.4px;top:947px;width:1.3px;height:23.5px;background:#98989a;"></div>
<div class="a" style="left:1824.4px;top:1012px;width:1.3px;height:25px;background:#98989a;"></div>
<svg style="left:1380px;top:980px" width="670" height="30" viewBox="1380 980 670 30"><path d="M1393.6,991.3 L1755,991.3 L1770.5,1002.3 L1786.5,991.3 L1804,991.3 L1820,1002.3 L1836,991.3 L2030.8,991.3" fill="none" stroke="#2b2d31" stroke-width="2.6" stroke-linejoin="miter"/></svg>
<svg class="tx" width="1" height="1"><text x="1459.00" y="1105.60" font-size="26" fill="#2b2d31" text-anchor="middle" textLength="68.50" lengthAdjust="spacing">FREE</text></svg>
<svg class="tx" width="1" height="1"><text x="1459.00" y="1140.00" font-size="25" fill="#56585b" text-anchor="middle" textLength="126.50" lengthAdjust="spacing">CONTROL</text></svg>
<svg class="tx" width="1" height="1"><text x="1628.00" y="1105.60" font-size="26" fill="#2b2d31" text-anchor="middle" textLength="46.50" lengthAdjust="spacing">-inf</text></svg>
<svg class="tx" width="1" height="1"><text x="1628.00" y="1140.00" font-size="25" fill="#56585b" text-anchor="middle" textLength="114.50" lengthAdjust="spacing">DRY OUT</text></svg>
<svg class="tx" width="1" height="1"><text x="1796.70" y="1105.60" font-size="26" fill="#2b2d31" text-anchor="middle" textLength="77.50" lengthAdjust="spacing">1.8dB</text></svg>
<svg class="tx" width="1" height="1"><text x="1796.70" y="1140.00" font-size="25" fill="#56585b" text-anchor="middle" textLength="119.50" lengthAdjust="spacing">WET OUT</text></svg>
<svg class="tx" width="1" height="1"><text x="1963.60" y="1105.60" font-size="26" fill="#2b2d31" text-anchor="middle" textLength="54.50" lengthAdjust="spacing">OFF</text></svg>
<svg class="tx" width="1" height="1"><text x="1963.60" y="1140.00" font-size="25" fill="#56585b" text-anchor="middle" textLength="99.50" lengthAdjust="spacing">LIMITER</text></svg>
<div class="a" style="left:1543.4px;top:1098px;width:1.3px;height:31.4px;background:#98989a;"></div>
<div class="a" style="left:1711.4px;top:1098px;width:1.3px;height:31.4px;background:#98989a;"></div>
<div class="a" style="left:1880.1000000000001px;top:1098px;width:1.3px;height:31.4px;background:#98989a;"></div>
<div class="a" style="left:1919.2px;top:1089.5px;width:13.6px;height:13.6px;border-radius:50%;background:#7faf7c;border:1px solid #5f7b5d"></div>
<div class="a" style="left:1996.2px;top:1089.5px;width:13.6px;height:13.6px;border-radius:50%;background:#7faf7c;border:1px solid #5f7b5d"></div>
<div class="a" style="left:1376px;top:1226.5px;width:700px;height:74px;background:#2e3035;border-radius:12px;"></div>
<svg class="tx" width="1" height="1"><text x="1713.40" y="1275.20" font-size="28" fill="#f0f0f1" text-anchor="middle" textLength="214.50" lengthAdjust="spacing">Back In The Day</text></svg>
<svg style="left:1400px;top:1250px" width="630" height="30" viewBox="1400 1250 630 30"><path d="M1417,1264.5 L1436,1255.8 L1436,1273.2Z" fill="#f2f2f2"/><path d="M2006.6,1264.5 L1987.5,1255.8 L1987.5,1273.2Z" fill="#f2f2f2"/></svg>
<svg style="left:1960px;top:1448px" width="76" height="72" viewBox="1960 1448 76 72"><path d="M1975.5,1502 A30,30 0 1 1 1997.5,1513.3" fill="none" stroke="#2e3035" stroke-width="3.6" stroke-linecap="round"/><circle cx="1997.4" cy="1471.2" r="3.2" fill="#2e3035"/><path d="M1992.5,1484.5 L1998.5,1484.5 L1993.5,1513.3 L1998,1513.3" fill="none" stroke="#2e3035" stroke-width="3.6" stroke-linecap="round" stroke-linejoin="round"/></svg>
</body></html>
